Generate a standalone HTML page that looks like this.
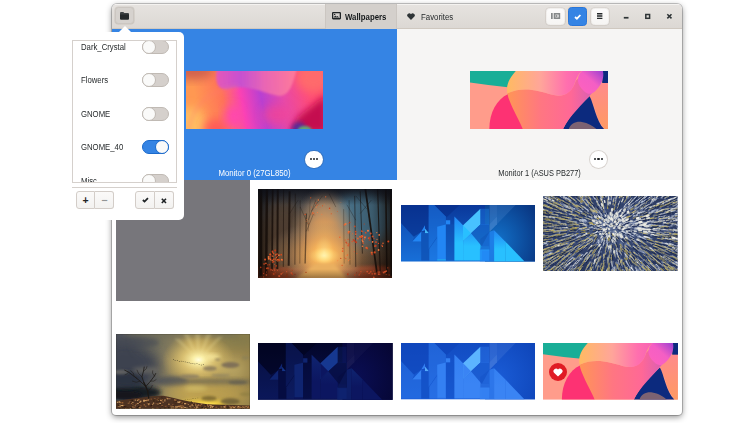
<!DOCTYPE html>
<html lang="en">
<head>
<meta charset="utf-8">
<title>Wallpapers</title>
<style>
*{box-sizing:border-box;margin:0;padding:0}
html,body{width:752px;height:423px;overflow:hidden;background:#fff;font-family:"Liberation Sans",sans-serif;color:#1f2325}
#win{position:absolute;left:112px;top:4px;width:570px;height:411px;border-radius:5px 5px 4px 4px;background:#fff;overflow:hidden;box-shadow:0 0 0 1px rgba(0,0,0,.2),0 2px 6px rgba(0,0,0,.45)}
#hdr{position:absolute;left:0;top:0;width:570px;height:25px;background:linear-gradient(#e6e3e0,#dcd8d4);border-bottom:1px solid #cfc8c0;box-shadow:inset 0 1px #f4f2f0}
.hb{position:absolute;top:3px;height:18px;border:1px solid #f1efed;border-radius:3.5px;background:linear-gradient(#fcfbfb,#f6f5f3);box-shadow:0 0 0 .6px rgba(80,60,40,.13)}
.tab{position:absolute;top:0;height:25px;font-size:8.5px;line-height:26px;white-space:nowrap}
.tab span{display:inline-block;transform:scaleX(.92);transform-origin:0 50%}
#paneL{position:absolute;left:0;top:25px;width:285px;height:151px;background:#3584e4}
#paneR{position:absolute;left:285px;top:25px;width:285px;height:151px;background:#f6f5f4}
.mon{position:absolute;top:42px;width:138px;height:58px}
.dots{position:absolute;top:122px;width:17.4px;height:17.4px;border-radius:8.7px;background:#fff;box-shadow:0 0 0 1px rgba(60,40,20,.16)}
.dots i{position:absolute;top:7.6px;width:2.2px;height:2.2px;border-radius:1.1px;background:#1e2224}
.mlab{position:absolute;top:138px;width:285px;left:0;text-align:center;font-size:8.5px;line-height:12px;white-space:nowrap}
.th{position:absolute;display:block}
.heart{position:absolute;width:18px;height:18px;border-radius:9px;background:#e01b24}
.heart svg{position:absolute;left:4px;top:5px}
#pop{position:absolute;left:64px;top:32px;width:120px;height:188px;background:#fff;border-radius:5px}
#list{position:absolute;left:8px;top:7.7px;width:105px;height:143.8px;border:1px solid #d5d0cc;overflow:hidden;background:#fff}
.row{position:absolute;left:0;width:104px;height:14px;font-size:8.4px;line-height:14px}
.row span{position:absolute;left:8px;top:0;white-space:nowrap;display:inline-block;transform:scaleX(.925);transform-origin:0 50%}
.sw{position:absolute;left:69px;top:0;width:27px;height:14px;border-radius:7px;background:#d5d0cc;border:1px solid #c0bab4}
.sw b{position:absolute;left:-1px;top:-1px;width:14px;height:14px;border-radius:7px;background:#fafaf9;border:1px solid #c0bab4}
.sw.on{background:#3584e4;border-color:#1b6acb}
.sw.on b{left:12px;border-color:#1b6acb}
.pb{position:absolute;top:159px;height:18px;width:19px;border:1px solid #d3cdc8;background:linear-gradient(#fbfaf9,#f3f2f0);font-size:10.5px;font-weight:bold;text-align:center;line-height:16px}
</style>
</head>
<body>

<div id="win">
  <div id="grid">
<div class="th" style="left:3.799999999999997px;top:162.5px;width:134.2px;height:134px;background:#77767b"></div>
<svg class="th" viewBox="0 0 134.1 88.9" preserveAspectRatio="none" width="134.1" height="88.9" style="left:146.3px;top:185.1px">
<defs>
<linearGradient id="fbg" x1="0" x2="0" y1="0" y2="1"><stop offset="0" stop-color="#2a2e38"/><stop offset=".3" stop-color="#4c5056"/><stop offset=".7" stop-color="#5a4634"/><stop offset="1" stop-color="#40200f"/></linearGradient>
<radialGradient id="fgl" cx=".5" cy=".5" r=".5"><stop offset="0" stop-color="#fff6b8"/><stop offset=".08" stop-color="#ffe690"/><stop offset=".16" stop-color="#ffd070"/><stop offset=".25" stop-color="#f6b25a" stop-opacity=".97"/><stop offset=".5" stop-color="#d89a5c" stop-opacity=".85"/><stop offset=".8" stop-color="#b08c68" stop-opacity=".45"/><stop offset="1" stop-color="#908070" stop-opacity="0"/></radialGradient>
<linearGradient id="fvl" x1="0" x2="1" y1="0" y2="0"><stop offset="0" stop-color="#0c0806" stop-opacity=".7"/><stop offset=".12" stop-color="#0c0806" stop-opacity=".2"/><stop offset=".4" stop-color="#0c0806" stop-opacity="0"/><stop offset=".62" stop-color="#0c0806" stop-opacity="0"/><stop offset=".85" stop-color="#0c0806" stop-opacity=".25"/><stop offset="1" stop-color="#0c0806" stop-opacity=".75"/></linearGradient>
<linearGradient id="fvt" x1="0" x2="0" y1="0" y2="1"><stop offset="0" stop-color="#0a0c14" stop-opacity=".75"/><stop offset=".18" stop-color="#0a0c14" stop-opacity="0"/><stop offset=".9" stop-color="#140a06" stop-opacity="0"/><stop offset="1" stop-color="#140a06" stop-opacity=".35"/></linearGradient>
<filter id="fb1" x="-40%" y="-40%" width="180%" height="180%"><feGaussianBlur stdDeviation="6"/></filter>
<filter id="fb2" x="-40%" y="-40%" width="180%" height="180%"><feGaussianBlur stdDeviation="1.6"/></filter>
<filter id="fb3"><feGaussianBlur stdDeviation=".35"/></filter>
<clipPath id="fc"><rect width="134.1" height="88.9"/></clipPath>
</defs>
<g clip-path="url(#fc)">
<rect width="134.1" height="88.9" fill="url(#fbg)"/>
<ellipse cx="104.4" cy="29.0" rx="30" ry="28" fill="#4c7790" filter="url(#fb1)"/>
<ellipse cx="35.6" cy="22.3" rx="22" ry="22" fill="#4a4a4c" opacity=".7" filter="url(#fb1)"/>
<ellipse cx="24.4" cy="49.0" rx="26" ry="36" fill="#5c4430" opacity=".75" filter="url(#fb1)"/>
<ellipse cx="66.2" cy="29.0" rx="13" ry="24" fill="#c8a27a" opacity=".55" filter="url(#fb1)"/>
<ellipse cx="17.8" cy="86.8" rx="40" ry="9" fill="#9a3a1c" filter="url(#fb2)"/>
<ellipse cx="113.3" cy="86.8" rx="40" ry="10" fill="#a84020" filter="url(#fb2)"/>
<ellipse cx="66.2" cy="63.4" rx="38" ry="66" fill="url(#fgl)"/>
<ellipse cx="66.2" cy="66.8" rx="62" ry="34" fill="url(#fgl)" opacity=".6"/>
<path d="M57.8 74.6L75.6 74.6L88.9 89.4L37.8 89.4Z" fill="#eab060" opacity="1" filter="url(#fb2)"/>
<line x1="2.7" y1="-2.1" x2="2.7" y2="86.8" stroke="#1c120c" stroke-width="3.11" stroke-opacity="0.9"/>
<line x1="8.9" y1="-2.1" x2="8.2" y2="84.6" stroke="#1c120c" stroke-width="2.44" stroke-opacity="0.85"/>
<line x1="14.7" y1="-2.1" x2="14.0" y2="82.3" stroke="#1c120c" stroke-width="1.78" stroke-opacity="0.85"/>
<line x1="19.8" y1="-2.1" x2="19.3" y2="80.1" stroke="#1c120c" stroke-width="2.00" stroke-opacity="0.85"/>
<line x1="25.6" y1="0.1" x2="25.3" y2="77.9" stroke="#1c120c" stroke-width="0.89" stroke-opacity="0.65"/>
<line x1="31.6" y1="2.3" x2="30.7" y2="76.8" stroke="#1c120c" stroke-width="2.00" stroke-opacity="0.8"/>
<line x1="37.3" y1="4.6" x2="36.9" y2="75.7" stroke="#1c120c" stroke-width="0.89" stroke-opacity="0.6"/>
<line x1="42.2" y1="11.2" x2="41.8" y2="74.6" stroke="#1c120c" stroke-width="0.67" stroke-opacity="0.5"/>
<line x1="48.4" y1="24.6" x2="47.1" y2="74.6" stroke="#1c120c" stroke-width="1.33" stroke-opacity="0.55"/>
<line x1="52.2" y1="11.2" x2="50.2" y2="42.3" stroke="#1c120c" stroke-width="0.44" stroke-opacity="0.5"/>
<line x1="85.6" y1="20.1" x2="86.2" y2="74.6" stroke="#1c120c" stroke-width="0.67" stroke-opacity="0.4"/>
<line x1="91.1" y1="11.2" x2="92.0" y2="75.7" stroke="#1c120c" stroke-width="0.67" stroke-opacity="0.55"/>
<line x1="96.7" y1="6.8" x2="97.8" y2="77.9" stroke="#1c120c" stroke-width="0.89" stroke-opacity="0.65"/>
<line x1="102.2" y1="2.3" x2="104.4" y2="64.6" stroke="#1c120c" stroke-width="0.89" stroke-opacity="0.7"/>
<line x1="107.1" y1="-2.1" x2="118.9" y2="83.4" stroke="#1c120c" stroke-width="1.78" stroke-opacity="0.9"/>
<line x1="119.6" y1="-2.1" x2="122.2" y2="82.3" stroke="#1c120c" stroke-width="1.11" stroke-opacity="0.8"/>
<line x1="127.8" y1="-2.1" x2="128.9" y2="84.6" stroke="#1c120c" stroke-width="1.56" stroke-opacity="0.85"/>
<line x1="132.9" y1="-2.1" x2="133.3" y2="86.8" stroke="#1c120c" stroke-width="1.78" stroke-opacity="0.9"/>
<line x1="50.2" y1="31.2" x2="57.8" y2="11.2" stroke="#18120e" stroke-width=".5" stroke-opacity=".6"/>
<line x1="50.2" y1="35.7" x2="42.2" y2="17.9" stroke="#18120e" stroke-width=".5" stroke-opacity=".6"/>
<line x1="48.4" y1="42.3" x2="55.6" y2="24.6" stroke="#18120e" stroke-width=".5" stroke-opacity=".6"/>
<line x1="64.4" y1="6.8" x2="53.3" y2="22.3" stroke="#18120e" stroke-width=".5" stroke-opacity=".6"/>
<line x1="71.1" y1="4.6" x2="77.8" y2="17.9" stroke="#18120e" stroke-width=".5" stroke-opacity=".6"/>
<line x1="97.8" y1="31.2" x2="88.9" y2="15.7" stroke="#18120e" stroke-width=".5" stroke-opacity=".6"/>
<line x1="102.2" y1="24.6" x2="113.3" y2="11.2" stroke="#18120e" stroke-width=".5" stroke-opacity=".6"/>
<line x1="108.9" y1="20.1" x2="97.8" y2="6.8" stroke="#18120e" stroke-width=".5" stroke-opacity=".6"/>
<line x1="31.6" y1="24.6" x2="40.0" y2="11.2" stroke="#18120e" stroke-width=".5" stroke-opacity=".6"/>
<rect width="134.1" height="88.9" fill="url(#fvl)"/>
<rect width="134.1" height="88.9" fill="url(#fvt)"/>
<g filter="url(#fb3)">
<circle cx="15.4" cy="70.4" r="0.89" fill="#e2491c" fill-opacity="0.9"/>
<circle cx="17.6" cy="65.9" r="0.85" fill="#d8522a" fill-opacity="0.9"/>
<circle cx="17.1" cy="69.9" r="0.75" fill="#f0602a" fill-opacity="0.9"/>
<circle cx="21.0" cy="70.7" r="1.00" fill="#e2491c" fill-opacity="0.9"/>
<circle cx="23.2" cy="65.7" r="0.85" fill="#e2491c" fill-opacity="0.9"/>
<circle cx="12.3" cy="65.6" r="1.09" fill="#e2491c" fill-opacity="0.9"/>
<circle cx="14.2" cy="67.0" r="0.75" fill="#d8522a" fill-opacity="0.9"/>
<circle cx="19.8" cy="70.7" r="0.99" fill="#f0602a" fill-opacity="0.9"/>
<circle cx="21.7" cy="71.7" r="0.61" fill="#e2491c" fill-opacity="0.9"/>
<circle cx="15.0" cy="67.4" r="0.54" fill="#f0602a" fill-opacity="0.9"/>
<circle cx="10.6" cy="68.0" r="0.97" fill="#ff7a3a" fill-opacity="0.9"/>
<circle cx="12.1" cy="65.1" r="0.68" fill="#f0602a" fill-opacity="0.9"/>
<circle cx="15.5" cy="64.4" r="0.84" fill="#d8522a" fill-opacity="0.9"/>
<circle cx="12.2" cy="68.0" r="0.77" fill="#d8522a" fill-opacity="0.9"/>
<circle cx="19.1" cy="67.6" r="0.75" fill="#c93a18" fill-opacity="0.9"/>
<circle cx="19.9" cy="72.5" r="0.52" fill="#e2491c" fill-opacity="0.9"/>
<circle cx="17.2" cy="61.5" r="1.03" fill="#c93a18" fill-opacity="0.9"/>
<circle cx="14.2" cy="71.7" r="0.80" fill="#ff7a3a" fill-opacity="0.9"/>
<circle cx="18.6" cy="68.8" r="0.66" fill="#e2491c" fill-opacity="0.9"/>
<circle cx="23.7" cy="70.7" r="0.89" fill="#ff7a3a" fill-opacity="0.9"/>
<circle cx="15.6" cy="72.6" r="0.90" fill="#e2491c" fill-opacity="0.9"/>
<circle cx="20.9" cy="66.2" r="0.87" fill="#ff7a3a" fill-opacity="0.9"/>
<circle cx="24.5" cy="70.9" r="0.58" fill="#f0602a" fill-opacity="0.9"/>
<circle cx="7.9" cy="74.4" r="0.80" fill="#f0602a" fill-opacity="0.9"/>
<circle cx="10.8" cy="69.8" r="1.03" fill="#ff7a3a" fill-opacity="0.9"/>
<circle cx="19.3" cy="64.9" r="0.75" fill="#c93a18" fill-opacity="0.9"/>
<circle cx="14.7" cy="63.5" r="0.64" fill="#e2491c" fill-opacity="0.9"/>
<circle cx="18.3" cy="71.1" r="0.64" fill="#ff7a3a" fill-opacity="0.9"/>
<circle cx="18.2" cy="65.2" r="0.67" fill="#f0602a" fill-opacity="0.9"/>
<circle cx="12.6" cy="70.2" r="0.84" fill="#f0602a" fill-opacity="0.9"/>
<circle cx="14.5" cy="62.4" r="0.87" fill="#e2491c" fill-opacity="0.9"/>
<circle cx="7.1" cy="70.6" r="1.07" fill="#d8522a" fill-opacity="0.9"/>
<circle cx="12.8" cy="71.0" r="0.56" fill="#ff7a3a" fill-opacity="0.9"/>
<circle cx="18.4" cy="68.6" r="0.63" fill="#f0602a" fill-opacity="0.9"/>
<circle cx="16.9" cy="80.2" r="0.56" fill="#a8381a" fill-opacity="0.9"/>
<circle cx="-2.1" cy="76.4" r="0.87" fill="#a8381a" fill-opacity="0.9"/>
<circle cx="16.5" cy="75.3" r="0.59" fill="#c04420" fill-opacity="0.9"/>
<circle cx="18.4" cy="76.9" r="0.78" fill="#a8381a" fill-opacity="0.9"/>
<circle cx="21.3" cy="71.0" r="0.78" fill="#c04420" fill-opacity="0.9"/>
<circle cx="9.9" cy="79.3" r="0.95" fill="#c04420" fill-opacity="0.9"/>
<circle cx="2.7" cy="78.4" r="0.81" fill="#a8381a" fill-opacity="0.9"/>
<circle cx="17.6" cy="76.9" r="0.59" fill="#a8381a" fill-opacity="0.9"/>
<circle cx="11.4" cy="75.6" r="0.89" fill="#a8381a" fill-opacity="0.9"/>
<circle cx="9.7" cy="75.9" r="0.72" fill="#a8381a" fill-opacity="0.9"/>
<circle cx="8.7" cy="79.4" r="0.82" fill="#c04420" fill-opacity="0.9"/>
<circle cx="6.1" cy="75.1" r="0.97" fill="#a8381a" fill-opacity="0.9"/>
<circle cx="14.7" cy="73.3" r="0.94" fill="#a8381a" fill-opacity="0.9"/>
<circle cx="13.1" cy="80.8" r="0.94" fill="#a8381a" fill-opacity="0.9"/>
<circle cx="104.7" cy="42.7" r="0.62" fill="#d8522a" fill-opacity="0.9"/>
<circle cx="111.5" cy="48.9" r="1.06" fill="#c93a18" fill-opacity="0.9"/>
<circle cx="110.4" cy="49.2" r="0.63" fill="#f0602a" fill-opacity="0.9"/>
<circle cx="94.3" cy="52.5" r="0.79" fill="#d8522a" fill-opacity="0.9"/>
<circle cx="107.7" cy="43.7" r="0.89" fill="#e2491c" fill-opacity="0.9"/>
<circle cx="104.5" cy="47.8" r="0.73" fill="#f0602a" fill-opacity="0.9"/>
<circle cx="96.7" cy="51.9" r="0.97" fill="#c93a18" fill-opacity="0.9"/>
<circle cx="120.6" cy="61.0" r="0.93" fill="#ff7a3a" fill-opacity="0.9"/>
<circle cx="84.7" cy="62.2" r="0.93" fill="#f0602a" fill-opacity="0.9"/>
<circle cx="104.3" cy="51.1" r="0.85" fill="#ff7a3a" fill-opacity="0.9"/>
<circle cx="104.0" cy="47.1" r="1.00" fill="#ff7a3a" fill-opacity="0.9"/>
<circle cx="97.7" cy="45.2" r="0.83" fill="#f0602a" fill-opacity="0.9"/>
<circle cx="118.0" cy="53.1" r="0.94" fill="#e2491c" fill-opacity="0.9"/>
<circle cx="81.8" cy="48.2" r="0.76" fill="#f0602a" fill-opacity="0.9"/>
<circle cx="105.0" cy="46.5" r="0.65" fill="#c93a18" fill-opacity="0.9"/>
<circle cx="87.1" cy="51.1" r="0.70" fill="#d8522a" fill-opacity="0.9"/>
<circle cx="98.1" cy="53.2" r="1.05" fill="#c93a18" fill-opacity="0.9"/>
<circle cx="112.7" cy="44.4" r="0.99" fill="#d8522a" fill-opacity="0.9"/>
<circle cx="84.8" cy="59.5" r="0.80" fill="#d8522a" fill-opacity="0.9"/>
<circle cx="108.4" cy="58.8" r="1.02" fill="#f0602a" fill-opacity="0.9"/>
<circle cx="90.3" cy="42.7" r="0.59" fill="#f0602a" fill-opacity="0.9"/>
<circle cx="88.1" cy="53.3" r="0.83" fill="#c93a18" fill-opacity="0.9"/>
<circle cx="97.7" cy="42.5" r="0.79" fill="#e2491c" fill-opacity="0.9"/>
<circle cx="104.5" cy="49.4" r="0.61" fill="#e2491c" fill-opacity="0.9"/>
<circle cx="103.7" cy="42.1" r="0.84" fill="#e2491c" fill-opacity="0.9"/>
<circle cx="90.8" cy="55.0" r="0.80" fill="#d8522a" fill-opacity="0.9"/>
<circle cx="104.5" cy="57.2" r="0.80" fill="#ff7a3a" fill-opacity="0.9"/>
<circle cx="95.5" cy="50.9" r="0.81" fill="#c93a18" fill-opacity="0.9"/>
<circle cx="118.8" cy="43.6" r="0.62" fill="#ff7a3a" fill-opacity="0.9"/>
<circle cx="105.2" cy="54.2" r="0.77" fill="#e2491c" fill-opacity="0.9"/>
<circle cx="97.8" cy="44.0" r="0.63" fill="#c93a18" fill-opacity="0.9"/>
<circle cx="106.2" cy="35.0" r="0.59" fill="#c93a18" fill-opacity="0.9"/>
<circle cx="113.7" cy="63.8" r="1.08" fill="#f0602a" fill-opacity="0.9"/>
<circle cx="102.1" cy="47.8" r="1.03" fill="#f0602a" fill-opacity="0.9"/>
<circle cx="119.0" cy="50.3" r="0.60" fill="#ff7a3a" fill-opacity="0.9"/>
<circle cx="111.3" cy="50.9" r="0.75" fill="#c93a18" fill-opacity="0.9"/>
<circle cx="96.3" cy="62.5" r="0.51" fill="#d8522a" fill-opacity="0.9"/>
<circle cx="88.8" cy="54.3" r="0.73" fill="#d8522a" fill-opacity="0.9"/>
<circle cx="94.6" cy="44.7" r="0.54" fill="#f0602a" fill-opacity="0.9"/>
<circle cx="106.3" cy="50.6" r="0.66" fill="#e2491c" fill-opacity="0.9"/>
<circle cx="106.9" cy="48.5" r="0.95" fill="#ff7a3a" fill-opacity="0.9"/>
<circle cx="110.0" cy="41.8" r="1.07" fill="#ff7a3a" fill-opacity="0.9"/>
<circle cx="114.0" cy="65.3" r="0.84" fill="#c93a18" fill-opacity="0.9"/>
<circle cx="104.8" cy="52.6" r="0.91" fill="#ff7a3a" fill-opacity="0.9"/>
<circle cx="107.8" cy="47.5" r="0.51" fill="#e2491c" fill-opacity="0.9"/>
<circle cx="103.4" cy="48.1" r="1.01" fill="#e2491c" fill-opacity="0.9"/>
<circle cx="117.6" cy="56.3" r="0.51" fill="#d8522a" fill-opacity="0.9"/>
<circle cx="109.2" cy="59.5" r="0.87" fill="#e2491c" fill-opacity="0.9"/>
<circle cx="114.5" cy="52.8" r="0.57" fill="#f0602a" fill-opacity="0.9"/>
<circle cx="117.6" cy="56.9" r="1.06" fill="#c93a18" fill-opacity="0.9"/>
<circle cx="114.8" cy="52.7" r="0.77" fill="#f0602a" fill-opacity="0.9"/>
<circle cx="116.7" cy="63.4" r="1.10" fill="#e2491c" fill-opacity="0.9"/>
<circle cx="125.0" cy="54.3" r="0.83" fill="#f0602a" fill-opacity="0.9"/>
<circle cx="114.5" cy="53.1" r="0.77" fill="#ff7a3a" fill-opacity="0.9"/>
<circle cx="114.7" cy="47.6" r="1.03" fill="#d8522a" fill-opacity="0.9"/>
<circle cx="116.7" cy="57.1" r="0.64" fill="#f0602a" fill-opacity="0.9"/>
<circle cx="121.2" cy="45.9" r="0.88" fill="#ff7a3a" fill-opacity="0.9"/>
<circle cx="130.3" cy="52.4" r="1.00" fill="#e2491c" fill-opacity="0.9"/>
<circle cx="124.4" cy="57.4" r="0.65" fill="#f0602a" fill-opacity="0.9"/>
<circle cx="124.0" cy="56.2" r="0.73" fill="#d8522a" fill-opacity="0.9"/>
<circle cx="116.0" cy="49.5" r="0.65" fill="#c93a18" fill-opacity="0.9"/>
<circle cx="120.5" cy="54.4" r="0.66" fill="#e2491c" fill-opacity="0.9"/>
<circle cx="90.3" cy="56.5" r="1.08" fill="#d8522a" fill-opacity="0.8"/>
<circle cx="90.6" cy="43.7" r="1.03" fill="#f0602a" fill-opacity="0.8"/>
<circle cx="91.0" cy="42.5" r="0.73" fill="#ff7a3a" fill-opacity="0.8"/>
<circle cx="90.1" cy="50.3" r="0.65" fill="#e2491c" fill-opacity="0.8"/>
<circle cx="97.3" cy="47.9" r="0.59" fill="#d8522a" fill-opacity="0.8"/>
<circle cx="91.9" cy="42.6" r="0.68" fill="#f0602a" fill-opacity="0.8"/>
<circle cx="99.8" cy="49.4" r="1.01" fill="#f0602a" fill-opacity="0.8"/>
<circle cx="87.6" cy="35.0" r="1.03" fill="#ff7a3a" fill-opacity="0.8"/>
<circle cx="91.7" cy="33.5" r="0.80" fill="#c93a18" fill-opacity="0.8"/>
<circle cx="90.2" cy="34.5" r="0.53" fill="#d8522a" fill-opacity="0.8"/>
<circle cx="86.6" cy="35.8" r="0.99" fill="#f0602a" fill-opacity="0.8"/>
<circle cx="96.8" cy="37.4" r="0.84" fill="#e2491c" fill-opacity="0.8"/>
<circle cx="67.7" cy="7.8" r="0.66" fill="#f0602a" fill-opacity="0.85"/>
<circle cx="64.5" cy="16.7" r="0.57" fill="#e2491c" fill-opacity="0.85"/>
<circle cx="55.3" cy="20.8" r="0.37" fill="#e2491c" fill-opacity="0.85"/>
<circle cx="52.8" cy="8.5" r="0.52" fill="#e2491c" fill-opacity="0.85"/>
<circle cx="59.0" cy="16.3" r="0.68" fill="#d8522a" fill-opacity="0.85"/>
<circle cx="71.3" cy="20.1" r="0.61" fill="#ff7a3a" fill-opacity="0.85"/>
<circle cx="62.2" cy="18.3" r="0.44" fill="#f0602a" fill-opacity="0.85"/>
<circle cx="63.8" cy="25.3" r="0.51" fill="#ff7a3a" fill-opacity="0.85"/>
<circle cx="79.5" cy="22.5" r="0.45" fill="#e2491c" fill-opacity="0.85"/>
<circle cx="52.8" cy="9.3" r="0.38" fill="#f0602a" fill-opacity="0.85"/>
<circle cx="55.9" cy="24.1" r="0.59" fill="#d8522a" fill-opacity="0.85"/>
<circle cx="60.9" cy="15.2" r="0.37" fill="#c93a18" fill-opacity="0.85"/>
<circle cx="66.2" cy="15.1" r="0.43" fill="#ff7a3a" fill-opacity="0.85"/>
<circle cx="59.5" cy="23.4" r="0.51" fill="#ff7a3a" fill-opacity="0.85"/>
<circle cx="65.3" cy="-5.3" r="0.54" fill="#c93a18" fill-opacity="0.85"/>
<circle cx="82.9" cy="13.5" r="0.36" fill="#ff7a3a" fill-opacity="0.85"/>
<circle cx="71.6" cy="19.3" r="0.70" fill="#c93a18" fill-opacity="0.85"/>
<circle cx="47.2" cy="25.4" r="0.68" fill="#e2491c" fill-opacity="0.85"/>
<circle cx="57.9" cy="13.9" r="0.53" fill="#c93a18" fill-opacity="0.85"/>
<circle cx="73.3" cy="24.8" r="0.53" fill="#e2491c" fill-opacity="0.85"/>
<circle cx="60.4" cy="11.0" r="0.66" fill="#ff7a3a" fill-opacity="0.85"/>
<circle cx="58.1" cy="18.1" r="0.68" fill="#ff7a3a" fill-opacity="0.85"/>
<circle cx="48.9" cy="30.8" r="0.50" fill="#ff7a3a" fill-opacity="0.85"/>
<circle cx="50.8" cy="34.6" r="0.35" fill="#c93a18" fill-opacity="0.85"/>
<circle cx="54.2" cy="24.9" r="0.67" fill="#e2491c" fill-opacity="0.85"/>
<circle cx="55.6" cy="24.6" r="0.48" fill="#ff7a3a" fill-opacity="0.85"/>
<circle cx="48.1" cy="32.5" r="0.38" fill="#ff7a3a" fill-opacity="0.85"/>
<circle cx="53.6" cy="18.1" r="0.45" fill="#e2491c" fill-opacity="0.85"/>
<circle cx="54.7" cy="23.6" r="0.68" fill="#f0602a" fill-opacity="0.85"/>
<circle cx="56.8" cy="25.9" r="0.46" fill="#c93a18" fill-opacity="0.85"/>
<circle cx="115.6" cy="81.2" r="0.51" fill="#8a2c14" fill-opacity="0.9"/>
<circle cx="96.8" cy="86.1" r="0.78" fill="#b03c1c" fill-opacity="0.9"/>
<circle cx="112.7" cy="82.7" r="0.87" fill="#d0502a" fill-opacity="0.9"/>
<circle cx="109.2" cy="82.6" r="0.93" fill="#d0502a" fill-opacity="0.9"/>
<circle cx="135.1" cy="85.0" r="0.56" fill="#d0502a" fill-opacity="0.9"/>
<circle cx="106.3" cy="84.4" r="0.63" fill="#8a2c14" fill-opacity="0.9"/>
<circle cx="121.0" cy="83.2" r="0.83" fill="#d0502a" fill-opacity="0.9"/>
<circle cx="98.5" cy="83.8" r="0.56" fill="#8a2c14" fill-opacity="0.9"/>
<circle cx="116.9" cy="84.7" r="0.95" fill="#d0502a" fill-opacity="0.9"/>
<circle cx="102.9" cy="82.7" r="0.67" fill="#d0502a" fill-opacity="0.9"/>
<circle cx="102.0" cy="84.7" r="0.62" fill="#b03c1c" fill-opacity="0.9"/>
<circle cx="110.9" cy="84.3" r="0.62" fill="#d0502a" fill-opacity="0.9"/>
<circle cx="115.8" cy="82.1" r="0.51" fill="#d0502a" fill-opacity="0.9"/>
<circle cx="101.1" cy="85.9" r="0.61" fill="#d0502a" fill-opacity="0.9"/>
<circle cx="111.4" cy="84.1" r="0.64" fill="#d0502a" fill-opacity="0.9"/>
<circle cx="121.7" cy="85.3" r="0.81" fill="#b03c1c" fill-opacity="0.9"/>
<circle cx="131.1" cy="86.0" r="0.69" fill="#8a2c14" fill-opacity="0.9"/>
<circle cx="89.9" cy="85.3" r="0.92" fill="#b03c1c" fill-opacity="0.9"/>
<circle cx="120.7" cy="85.1" r="0.88" fill="#d0502a" fill-opacity="0.9"/>
<circle cx="124.7" cy="82.9" r="0.54" fill="#8a2c14" fill-opacity="0.9"/>
<circle cx="129.8" cy="78.8" r="0.62" fill="#b03c1c" fill-opacity="0.9"/>
<circle cx="114.3" cy="84.7" r="0.99" fill="#b03c1c" fill-opacity="0.9"/>
<circle cx="128.3" cy="82.2" r="0.82" fill="#d0502a" fill-opacity="0.9"/>
<circle cx="128.2" cy="85.4" r="0.50" fill="#b03c1c" fill-opacity="0.9"/>
<circle cx="115.8" cy="88.4" r="0.82" fill="#d0502a" fill-opacity="0.9"/>
<circle cx="127.0" cy="82.7" r="0.76" fill="#d0502a" fill-opacity="0.9"/>
<circle cx="111.8" cy="82.4" r="0.54" fill="#8a2c14" fill-opacity="0.9"/>
<circle cx="119.5" cy="82.9" r="0.63" fill="#8a2c14" fill-opacity="0.9"/>
<circle cx="125.8" cy="83.5" r="1.00" fill="#d0502a" fill-opacity="0.9"/>
<circle cx="127.2" cy="82.6" r="0.94" fill="#d0502a" fill-opacity="0.9"/>
<circle cx="8.4" cy="83.0" r="0.51" fill="#c8502a" fill-opacity="0.9"/>
<circle cx="19.5" cy="81.6" r="0.51" fill="#c8502a" fill-opacity="0.9"/>
<circle cx="34.2" cy="81.3" r="0.54" fill="#a83a1c" fill-opacity="0.9"/>
<circle cx="9.7" cy="79.1" r="0.61" fill="#a83a1c" fill-opacity="0.9"/>
<circle cx="16.3" cy="80.1" r="0.68" fill="#c8502a" fill-opacity="0.9"/>
<circle cx="28.6" cy="87.2" r="0.87" fill="#7a2812" fill-opacity="0.9"/>
<circle cx="34.1" cy="84.5" r="0.60" fill="#a83a1c" fill-opacity="0.9"/>
<circle cx="23.2" cy="85.0" r="0.88" fill="#c8502a" fill-opacity="0.9"/>
<circle cx="34.3" cy="85.4" r="0.81" fill="#a83a1c" fill-opacity="0.9"/>
<circle cx="-2.1" cy="83.9" r="0.53" fill="#7a2812" fill-opacity="0.9"/>
<circle cx="29.0" cy="85.2" r="0.61" fill="#7a2812" fill-opacity="0.9"/>
<circle cx="24.5" cy="84.0" r="0.53" fill="#c8502a" fill-opacity="0.9"/>
<circle cx="5.6" cy="84.5" r="0.66" fill="#a83a1c" fill-opacity="0.9"/>
<circle cx="48.0" cy="83.4" r="0.66" fill="#a83a1c" fill-opacity="0.9"/>
<circle cx="14.4" cy="81.2" r="0.73" fill="#c8502a" fill-opacity="0.9"/>
<circle cx="16.7" cy="81.6" r="0.69" fill="#c8502a" fill-opacity="0.9"/>
<circle cx="17.2" cy="83.8" r="0.54" fill="#a83a1c" fill-opacity="0.9"/>
<circle cx="5.7" cy="87.9" r="0.56" fill="#a83a1c" fill-opacity="0.9"/>
<circle cx="8.4" cy="86.0" r="0.65" fill="#c8502a" fill-opacity="0.9"/>
<circle cx="37.0" cy="85.3" r="0.60" fill="#7a2812" fill-opacity="0.9"/>
<circle cx="28.6" cy="82.7" r="0.68" fill="#c8502a" fill-opacity="0.9"/>
<circle cx="33.4" cy="83.9" r="0.91" fill="#c8502a" fill-opacity="0.9"/>
<circle cx="25.1" cy="83.6" r="0.53" fill="#a83a1c" fill-opacity="0.9"/>
<circle cx="21.4" cy="87.1" r="0.95" fill="#c8502a" fill-opacity="0.9"/>
<circle cx="15.7" cy="85.0" r="0.98" fill="#a83a1c" fill-opacity="0.9"/>
<circle cx="20.9" cy="87.0" r="0.66" fill="#c8502a" fill-opacity="0.9"/>
<circle cx="84.1" cy="76.3" r="0.64" fill="#e2491c" fill-opacity="0.9"/>
<circle cx="90.7" cy="71.6" r="0.59" fill="#ff7a3a" fill-opacity="0.9"/>
<circle cx="91.9" cy="70.3" r="0.50" fill="#ff7a3a" fill-opacity="0.9"/>
<circle cx="87.8" cy="69.6" r="0.60" fill="#e2491c" fill-opacity="0.9"/>
<circle cx="89.6" cy="66.1" r="0.73" fill="#f0602a" fill-opacity="0.9"/>
<circle cx="82.8" cy="69.4" r="0.53" fill="#c93a18" fill-opacity="0.9"/>
<circle cx="88.2" cy="66.8" r="0.60" fill="#ff7a3a" fill-opacity="0.9"/>
<circle cx="86.7" cy="68.7" r="0.43" fill="#e2491c" fill-opacity="0.9"/>
<circle cx="79.7" cy="71.7" r="0.46" fill="#ff7a3a" fill-opacity="0.9"/>
<circle cx="98.9" cy="64.6" r="0.51" fill="#e2491c" fill-opacity="0.9"/>
</g>
</g></svg>
<svg class="th" viewBox="0 0 134.2 56.7" preserveAspectRatio="none" width="134.2" height="56.7" style="left:289px;top:201.1px">
<defs><linearGradient id="xbg" x1="0" x2="0" y1="0" y2="1"><stop offset="0" stop-color="#0a389a"/><stop offset="1" stop-color="#156ad2"/></linearGradient><radialGradient id="xr" cx=".25" cy=".62" r=".9"><stop offset="0" stop-color="#1270c8"/><stop offset="1" stop-color="#093682"/></radialGradient><linearGradient id="xcy" x1="0" x2="0" y1="0" y2="1"><stop offset="0" stop-color="#2286f4"/><stop offset=".6" stop-color="#28c0ff"/><stop offset="1" stop-color="#28c0ff"/></linearGradient><clipPath id="xc"><rect width="134.2" height="56.7"/></clipPath></defs>
<g clip-path="url(#xc)">
<rect width="134.2" height="56.7" fill="url(#xbg)"/>
<rect x="84" y="0" width="50.2" height="56.7" fill="url(#xr)"/>
<polygon points="0.0,-0.1 58.6,-0.1 45.6,12.3 33.3,-0.1 27.6,-0.1 27.6,26.8 20.3,26.8 12.4,31.8 0.0,18.1" fill="#072c86" fill-opacity="0.55"/>
<polygon points="0.0,18.1 13.1,31.8 11.3,36.6 20.3,36.6 20.3,55.6 0.0,55.6" fill="#2286f4" fill-opacity="0.2"/>
<polygon points="11.3,36.6 20.3,26.8 20.3,36.6" fill="#2286f4"/>
<polygon points="20.3,26.5 24.0,20.3 24.0,25.3" fill="#2286f4"/>
<polygon points="24.0,23.6 27.8,28.2 24.0,28.2" fill="#48c2ff" fill-opacity="0.9"/>
<polygon points="20.3,28.2 28.3,28.2 28.3,55.6 20.3,55.6" fill="#0f54b8" fill-opacity="0.9"/>
<polygon points="27.6,-0.1 33.3,-0.1 44.9,11.6 44.9,19.6 27.6,44.1" fill="#2286f4" fill-opacity="0.45"/>
<polygon points="28.3,44.1 36.2,32.5 36.2,55.6 28.3,55.6" fill="#2286f4" fill-opacity="0.5"/>
<polygon points="36.2,21.7 44.9,19.6 44.9,54.2 36.2,54.2" fill="#2286f4"/>
<polygon points="44.9,15.2 49.2,15.2 49.2,19.6 44.9,19.6" fill="#2286f4"/>
<polygon points="44.9,19.6 53.5,19.6 53.5,55.6 44.9,55.6" fill="#0f54b8" fill-opacity="0.55"/>
<polygon points="36.2,54.2 44.9,54.2 44.9,55.6 36.2,55.6" fill="#28c0ff" fill-opacity="0.8"/>
<polygon points="53.4,11.6 62.1,20.3 62.1,55.6 53.4,55.6" fill="url(#xcy)"/>
<polygon points="62.1,20.3 79.4,3.7 79.4,19.6 62.1,36.1" fill="#48c2ff"/>
<polygon points="62.1,20.3 70.0,28.2 62.1,36.1" fill="#28c0ff"/>
<polygon points="62.1,36.1 79.4,19.6 88.1,19.6 88.1,55.6 62.1,55.6" fill="url(#xcy)"/>
<polygon points="70.0,28.2 79.4,19.6 88.1,19.6 88.1,41.2 80.8,41.2" fill="#0f54b8" fill-opacity="0.8"/>
<polygon points="79.4,3.7 88.1,3.7 88.1,19.6 79.4,19.6" fill="#2286f4" fill-opacity="0.35"/>
<polygon points="80.8,45.5 88.1,45.5 88.1,55.6 80.8,55.6" fill="#2286f4" fill-opacity="0.7"/>
<polygon points="88.6,0.0 96.0,0.0 96.0,19.2 88.6,26.7" fill="#6aa0e0" fill-opacity="0.3"/>
<polygon points="96.0,0.0 114.7,0.0 88.6,26.7 88.6,19.2 96.0,11.8" fill="#6aa0e0" fill-opacity="0.2"/>
<polygon points="78.9,44.6 88.6,26.7 93.1,25.2 93.1,56.5 78.9,56.5" fill="#2286f4" fill-opacity="0.75"/>
<polygon points="79.4,34.1 88.6,26.7 88.6,44.6 79.4,44.6" fill="#0f54b8" fill-opacity="0.5"/>
<polygon points="93.1,25.2 104.2,36.4 104.2,56.5 93.1,56.5" fill="url(#xcy)"/>
<polygon points="104.2,36.4 123.6,56.5 104.2,56.5" fill="#28c0ff"/>
</g></svg>
<svg class="th" viewBox="0 0 134.6 75.9" preserveAspectRatio="none" width="134.6" height="75.9" style="left:431.29999999999995px;top:191.6px">
<defs><radialGradient id="abg" cx=".5" cy=".42" r=".7"><stop offset="0" stop-color="#56688f"/><stop offset=".4" stop-color="#33436c"/><stop offset="1" stop-color="#243258"/></radialGradient>
<clipPath id="ac"><rect width="134.6" height="75.9"/></clipPath><filter id="ab"><feGaussianBlur stdDeviation=".3"/></filter></defs>
<g clip-path="url(#ac)"><rect width="134.6" height="75.9" fill="url(#abg)"/><g filter="url(#ab)">
<path fill="#6a7aa0" fill-opacity=".9" d="M62.3 17.9L63.4 15.8L59.7 10.6L60.1 17.0ZM75.4 58.3L74.3 60.2L78.2 67.5L77.3 59.2ZM131.7 8.8L133.1 9.5L145.1 4.0L132.3 7.4ZM72.8 37.7L72.7 40.0L76.9 42.0L75.1 37.7ZM123.8 23.4L125.5 24.8L135.6 21.6L125.0 21.5ZM134.5 1.7L136.3 2.5L151.8 -6.0L135.1 -0.1ZM69.2 41.8L67.8 43.6L70.4 48.0L71.2 43.0ZM30.3 17.0L29.5 14.7L21.3 13.3L28.2 18.0ZM59.3 24.2L59.4 22.0L55.1 20.2L57.1 24.4ZM51.3 29.4L50.1 27.5L44.5 28.3L49.6 30.8ZM103.0 62.5L103.1 64.4L112.6 70.7L104.9 62.2ZM108.5 81.8L108.3 83.4L120.5 96.4L110.0 81.9ZM124.4 38.0L125.9 40.0L139.4 39.6L126.3 36.3ZM79.9 31.9L80.8 33.1L85.2 32.0L80.9 30.8ZM39.7 52.6L38.1 52.3L32.4 58.0L39.5 54.2ZM80.3 65.2L79.5 66.9L84.0 74.8L82.0 65.9ZM66.1 32.1L64.4 30.7L62.0 32.7L64.9 34.0ZM51.9 25.5L51.2 23.6L44.7 22.6L50.1 26.4ZM133.6 55.2L134.4 57.1L153.0 62.1L135.4 54.3ZM68.7 31.1L70.4 31.8L72.3 29.2L69.1 29.3ZM44.2 20.7L43.7 18.9L35.8 16.6L42.6 21.3ZM114.5 33.3L115.7 34.7L126.9 33.7L115.8 32.1ZM95.1 73.0L94.5 75.1L103.5 85.5L97.1 73.3ZM20.8 43.8L19.2 42.7L10.2 46.6L19.9 45.6ZM93.3 61.0L93.1 62.5L100.4 68.9L94.8 61.0ZM75.4 30.6L76.8 31.7L80.9 29.8L76.4 29.2ZM107.8 5.4L110.1 6.0L117.9 -1.3L108.1 3.0ZM100.0 63.0L99.9 64.6L110.1 72.7L101.6 62.9ZM85.6 40.4L86.2 42.1L92.8 43.8L87.3 39.7ZM38.7 -4.2L39.1 -6.6L29.3 -16.0L36.2 -4.3ZM77.7 29.0L79.1 29.9L83.6 27.4L78.4 27.5ZM69.4 31.4L71.4 32.8L74.0 30.3L70.6 29.2ZM-2.8 50.9L-4.4 49.9L-18.3 55.2L-3.7 52.6ZM134.6 42.6L135.9 44.6L150.4 45.1L136.5 41.2ZM83.2 3.5L85.6 3.0L88.8 -6.6L82.4 1.2ZM-0.5 12.3L-1.6 10.2L-17.7 7.4L-2.5 13.6ZM68.5 2.0L69.9 0.9L68.9 -8.1L67.2 0.8ZM8.0 62.2L6.0 61.4L-5.1 68.9L7.5 64.3ZM2.2 80.0L0.4 79.7L-10.4 89.3L2.0 81.8ZM-4.2 21.1L-5.1 19.8L-20.4 18.7L-5.4 22.2ZM51.2 28.1L50.0 26.0L43.6 26.3L49.2 29.5ZM68.9 79.1L67.7 80.4L69.4 93.5L70.3 80.3ZM45.8 3.3L46.3 0.9L39.7 -4.7L43.3 3.1ZM83.2 72.1L82.4 73.8L86.9 81.3L85.0 72.8ZM112.4 77.3L112.3 79.4L125.1 90.0L114.6 77.2ZM82.6 60.1L81.8 62.5L88.3 70.6L85.1 60.7ZM26.3 59.5L24.5 59.0L15.7 66.5L26.0 61.2ZM96.4 10.9L98.2 11.3L104.1 5.4L96.6 9.1ZM68.7 35.0L67.7 37.2L70.7 39.5L71.0 35.7ZM76.7 70.1L75.6 71.7L78.9 79.3L78.4 71.0ZM38.6 72.4L37.0 72.6L30.0 84.6L39.0 74.0ZM85.9 54.1L85.6 56.2L91.6 61.0L88.0 54.2ZM68.6 19.2L69.9 18.2L69.2 12.7L67.4 18.0ZM107.6 6.8L109.7 7.4L116.5 1.3L108.0 4.6ZM10.9 1.6L10.6 0.1L-5.2 -7.1L9.5 2.1ZM35.4 32.4L34.1 31.1L26.3 32.6L34.2 33.8ZM71.2 -3.8L72.5 -4.8L72.1 -12.6L70.1 -5.0ZM62.1 56.7L60.0 57.9L60.4 64.6L63.5 58.6ZM104.6 18.4L106.8 19.6L114.3 14.9L105.5 16.1ZM11.2 4.3L10.7 2.6L-2.7 -2.5L9.5 5.0ZM128.0 70.5L128.4 72.8L143.5 80.4L130.2 69.8ZM61.4 68.3L59.4 69.5L59.6 79.3L62.9 70.1ZM54.7 29.5L53.4 27.4L47.7 28.2L52.8 30.9ZM110.5 39.2L111.3 40.5L120.6 40.9L111.7 38.3ZM20.2 78.0L18.7 77.9L8.4 89.6L20.3 79.5ZM117.5 49.9L118.2 51.5L128.0 53.6L119.1 49.1ZM77.3 63.2L76.0 65.4L80.1 72.2L79.5 64.2ZM72.6 39.6L72.2 41.4L75.8 44.3L74.4 39.9ZM51.0 44.2L49.3 43.9L44.4 49.2L50.8 45.9ZM13.1 25.6L12.0 24.1L-2.1 23.8L11.7 26.7ZM27.9 25.0L26.8 23.3L16.4 23.0L26.3 26.3ZM71.6 35.7L71.6 38.2L75.4 39.0L74.1 35.4ZM111.6 67.9L111.7 69.8L122.3 76.6L113.4 67.6ZM115.7 71.8L115.8 74.3L129.1 82.8L118.1 71.4ZM118.5 8.6L120.5 9.4L131.6 2.7L119.2 6.5ZM123.2 69.6L123.5 71.8L138.6 80.1L125.3 69.1ZM15.6 -0.4L15.3 -2.4L4.6 -7.4L13.7 0.1ZM121.2 47.3L122.1 49.1L134.8 51.2L122.9 46.3ZM30.3 50.0L28.2 49.1L20.3 54.8L29.6 52.1ZM56.5 29.8L55.6 28.1L51.2 28.7L55.0 30.9ZM29.8 53.1L27.9 52.4L17.9 59.8L29.4 55.0ZM35.4 39.0L33.3 37.5L24.3 41.5L34.2 41.2ZM10.5 42.9L9.1 41.8L-3.9 45.7L9.6 44.3ZM-2.4 13.7L-3.4 11.9L-19.1 9.4L-4.2 14.9ZM48.2 65.1L46.2 65.5L42.6 74.8L48.9 67.1ZM116.0 61.7L116.4 63.4L126.6 68.1L117.8 61.2ZM75.7 -4.6L77.2 -5.5L78.1 -15.3L74.7 -6.1ZM22.2 7.0L21.6 4.6L11.8 1.2L19.8 7.8ZM65.9 10.6L67.2 9.3L65.5 3.8L64.5 9.5ZM52.5 3.9L53.0 2.4L48.6 -3.5L50.9 3.5ZM88.8 77.3L88.2 78.7L93.6 87.3L90.3 77.7ZM52.1 54.1L50.4 54.3L47.0 61.5L52.5 55.8ZM73.2 71.4L71.7 73.1L74.7 81.8L75.0 72.6ZM118.2 68.1L118.5 70.5L131.6 77.6L120.6 67.5ZM123.8 0.9L125.5 1.5L139.7 -7.8L124.2 -0.9ZM121.2 1.1L122.9 1.7L133.4 -5.8L121.6 -0.6ZM132.7 81.0L132.9 83.2L149.8 93.8L134.9 80.5ZM50.0 17.0L50.0 15.6L45.0 12.8L48.5 17.2ZM54.7 47.2L52.5 47.4L50.0 53.1L55.1 49.4ZM71.4 69.6L70.0 71.1L72.7 81.4L73.1 70.8ZM2.3 14.6L1.3 12.8L-14.5 10.2L0.6 15.8ZM112.4 31.8L113.9 33.5L125.1 31.8L113.9 30.1ZM29.5 -1.6L29.5 -3.9L18.5 -11.4L27.2 -1.3ZM16.2 55.5L14.4 54.7L1.4 62.4L15.6 57.4ZM89.1 37.3L89.9 38.9L96.5 39.1L90.6 36.2ZM123.6 34.2L125.0 35.8L139.6 34.8L125.1 32.6ZM122.0 40.0L122.9 41.4L133.4 41.6L123.3 38.8ZM113.8 72.0L113.9 74.1L125.5 82.1L115.9 71.8ZM24.5 16.6L23.9 15.1L11.4 11.9L23.1 17.3ZM119.8 70.2L120.0 72.2L130.9 78.3L121.8 69.8ZM18.2 13.4L17.5 11.6L3.7 7.9L16.5 14.2ZM82.2 69.8L81.5 71.2L85.8 78.9L83.7 70.3ZM107.1 61.7L107.3 64.1L118.6 70.3L109.4 61.2ZM78.6 36.2L79.4 38.4L85.1 38.6L80.7 35.1ZM61.5 -1.5L62.5 -2.7L59.6 -12.9L60.2 -2.3ZM127.4 20.9L128.9 22.1L140.9 18.5L128.4 19.3ZM65.1 30.4L64.9 28.9L62.0 28.2L63.7 30.7ZM-2.6 39.7L-4.2 38.2L-21.0 41.7L-3.9 41.5ZM59.2 -2.3L60.2 -3.8L57.0 -11.6L57.6 -3.2ZM123.8 7.8L125.7 8.6L136.3 2.5L124.5 5.8ZM17.8 59.4L15.8 58.8L3.6 67.3L17.3 61.4ZM137.6 -2.7L139.3 -2.0L156.7 -12.1L138.1 -4.5ZM137.7 53.8L138.7 56.0L153.9 58.8L139.7 52.6ZM95.1 7.0L96.6 7.2L104.3 -1.2L95.1 5.5ZM68.4 47.4L67.1 48.7L68.8 53.8L69.8 48.5ZM87.3 43.1L87.7 45.0L93.9 46.8L89.2 42.4ZM67.3 53.8L66.0 54.9L67.3 61.8L68.5 54.9ZM39.0 75.5L37.1 75.8L30.6 88.5L39.6 77.4ZM66.9 34.7L65.2 35.9L66.3 38.9L68.2 36.3ZM76.8 39.7L77.0 42.0L81.7 43.6L79.2 39.3ZM15.3 48.8L13.7 47.9L-0.6 54.0L14.6 50.5ZM61.2 24.7L61.5 22.2L57.5 20.4L58.6 24.6ZM33.5 61.8L31.1 61.5L22.9 71.2L33.5 64.2ZM5.0 -2.1L4.7 -3.6L-12.1 -11.5L3.6 -1.6ZM40.4 22.7L39.8 21.3L32.5 20.1L39.0 23.5Z"/>
<path fill="#62729a" fill-opacity=".9" d="M67.3 39.0L65.5 40.6L67.3 44.9L69.1 40.6ZM-3.8 61.5L-6.1 60.4L-18.3 67.5L-4.7 63.8ZM55.8 80.4L54.0 81.4L52.9 92.7L56.9 82.1ZM123.3 10.6L124.8 11.4L138.5 4.8L123.9 9.0ZM49.1 70.3L47.0 70.9L43.1 82.7L49.9 72.2ZM51.4 32.0L49.8 30.2L43.8 32.0L49.8 33.9ZM66.6 68.9L64.8 70.6L66.4 78.5L68.4 70.6ZM3.4 63.6L1.2 62.8L-10.6 70.6L2.7 65.9ZM69.3 29.2L71.2 29.1L71.8 26.0L69.0 27.4ZM48.6 79.9L46.2 80.8L43.9 91.9L49.7 82.2ZM89.3 28.2L90.8 29.4L96.3 27.1L90.3 26.7ZM58.4 13.1L59.0 11.7L55.0 5.9L56.9 12.7ZM121.2 53.0L121.7 54.5L137.1 59.2L122.6 52.2ZM41.7 65.6L39.3 65.8L33.3 76.7L42.1 67.9ZM136.2 48.3L137.2 50.1L154.7 52.7L137.9 47.2ZM40.6 57.9L38.7 57.8L33.5 64.8L40.7 59.8ZM137.0 67.8L137.6 69.9L155.1 77.1L139.0 67.0ZM117.1 15.5L119.2 16.7L130.4 11.1L118.1 13.3ZM4.3 4.9L3.7 3.1L-8.3 -0.4L2.6 5.7ZM26.5 32.1L25.0 30.5L16.5 32.1L25.0 33.7ZM96.3 13.6L97.8 14.0L105.5 7.8L96.5 12.1ZM70.7 7.4L72.4 6.2L71.7 -0.0L69.4 5.8ZM109.3 11.8L111.5 12.7L119.1 7.1L110.0 9.5ZM35.3 70.9L33.5 71.0L26.8 81.3L35.5 72.7ZM8.4 1.6L8.0 -0.1L-6.6 -6.1L6.7 2.3ZM80.5 12.5L82.3 12.3L85.8 4.9L80.1 10.8ZM19.0 -4.3L18.9 -6.3L7.8 -12.7L17.0 -3.9ZM127.4 59.5L128.0 61.4L144.0 67.1L129.3 58.7ZM127.3 -0.0L128.8 0.5L142.4 -8.0L127.7 -1.6ZM106.9 7.8L108.4 8.3L116.4 2.0L107.2 6.3ZM17.9 69.6L16.3 69.3L5.6 79.0L17.8 71.3ZM33.4 20.7L32.8 19.3L22.6 17.1L32.1 21.5ZM121.3 17.8L123.3 19.1L133.0 14.7L122.4 15.6ZM62.2 36.7L60.6 36.5L58.5 40.2L62.2 38.3ZM130.9 20.8L132.1 21.8L146.4 18.1L131.7 19.5ZM112.7 2.3L114.6 2.8L124.3 -5.4L113.0 0.3ZM58.5 18.7L58.9 17.0L54.9 13.2L56.8 18.4ZM56.0 74.4L54.5 75.2L53.2 85.0L57.0 75.9ZM54.4 43.2L52.6 42.9L49.5 47.4L54.3 45.0ZM57.2 43.2L55.2 43.3L53.0 48.0L57.5 45.3ZM2.2 57.6L0.7 56.8L-16.1 64.8L1.6 59.1ZM3.9 62.2L1.5 61.2L-14.9 71.1L3.2 64.6ZM54.4 34.1L52.9 32.9L48.1 35.1L53.4 35.6ZM94.5 2.2L96.3 2.3L103.2 -7.3L94.3 0.5ZM103.4 63.5L103.4 66.0L114.7 73.4L105.9 63.2ZM58.1 44.3L55.6 44.6L53.4 50.7L58.6 46.8ZM122.7 28.1L123.8 29.2L137.8 27.1L123.7 26.9ZM59.9 20.1L60.3 18.5L56.9 15.4L58.3 19.8ZM89.5 38.4L90.2 39.8L97.4 40.6L90.9 37.5ZM124.4 54.5L125.0 56.1L138.8 60.3L125.8 53.8ZM60.7 43.2L58.7 43.6L57.8 48.1L61.3 45.1ZM6.7 39.6L5.5 38.5L-6.5 41.2L5.8 40.9ZM104.2 -0.3L106.4 -0.0L113.6 -8.5L104.2 -2.6ZM23.3 67.4L21.2 67.0L10.2 77.9L23.2 69.4ZM50.2 0.6L50.8 -1.1L45.2 -8.6L48.5 0.2ZM131.4 68.5L131.9 70.6L149.3 78.7L133.5 67.8ZM8.0 35.7L6.8 34.5L-8.7 36.8L6.9 37.0ZM47.4 -3.8L48.1 -6.1L42.4 -12.7L45.0 -4.3ZM72.6 0.8L74.3 -0.4L74.4 -10.0L71.3 -0.9ZM24.8 78.1L23.2 78.1L12.8 91.2L25.0 79.7ZM137.2 9.7L139.1 10.9L157.5 3.3L138.1 7.6ZM64.7 20.8L65.6 19.5L63.5 15.6L63.3 20.1ZM124.1 64.1L124.5 66.2L137.8 72.0L126.1 63.5ZM-0.0 4.4L-0.8 2.4L-19.1 -3.4L-2.0 5.4ZM50.2 71.3L47.8 72.1L46.0 81.1L51.2 73.6ZM134.5 73.6L134.8 75.7L149.8 83.1L136.5 73.0ZM123.0 -2.5L125.0 -1.9L137.8 -11.5L123.4 -4.5ZM117.2 2.4L119.1 3.0L132.1 -6.3L117.6 0.5ZM74.5 66.7L73.1 68.6L76.4 76.4L76.5 67.9ZM62.2 24.7L62.6 23.0L59.2 20.3L60.6 24.5ZM63.1 27.1L63.3 25.0L59.5 23.1L60.9 27.1ZM100.0 33.5L101.1 34.8L108.4 33.9L101.2 32.2ZM77.1 42.6L76.9 44.6L81.9 47.9L79.2 42.6ZM94.5 -3.4L95.9 -3.5L100.5 -11.2L94.2 -4.9ZM120.8 3.2L122.4 3.7L133.2 -3.5L121.2 1.6ZM108.8 34.7L109.9 36.1L119.3 35.4L110.1 33.5ZM53.5 -1.8L54.2 -3.2L50.0 -10.3L52.0 -2.3ZM84.7 38.2L85.7 40.6L92.8 41.2L87.0 37.0ZM80.8 42.9L80.9 44.5L86.4 47.4L82.4 42.6ZM31.4 47.5L29.5 46.6L19.6 52.6L30.7 49.5ZM91.9 70.2L91.4 71.9L99.0 81.2L93.7 70.5ZM61.4 75.1L59.9 76.1L59.7 87.4L62.5 76.4ZM32.9 57.3L31.4 57.0L21.9 65.4L32.7 58.8ZM109.5 20.6L111.3 21.8L120.2 17.8L110.5 18.8ZM-2.2 42.5L-3.8 41.2L-15.9 44.6L-3.4 44.3ZM40.9 40.4L39.5 39.6L32.5 43.1L40.2 41.9ZM10.9 28.4L10.0 27.2L-1.5 27.6L9.9 29.4ZM56.9 24.0L56.7 21.7L51.4 19.8L54.6 24.4ZM57.5 33.1L56.2 31.9L52.1 33.7L56.5 34.5ZM46.7 47.1L44.9 46.7L39.8 52.2L46.5 48.9ZM139.1 4.1L141.1 5.1L154.2 -1.8L139.9 1.9ZM60.0 2.7L61.2 0.8L57.4 -7.7L58.0 1.6ZM75.0 76.5L73.9 77.8L77.4 90.3L76.5 77.4ZM25.3 78.3L23.6 78.3L15.6 89.1L25.5 80.0ZM76.2 31.3L77.4 32.5L81.5 31.0L77.3 30.0ZM33.1 52.6L31.4 52.1L22.8 58.8L32.8 54.4ZM61.4 14.1L62.6 12.1L59.1 7.1L59.3 13.2ZM56.9 22.6L56.9 20.4L52.0 18.2L54.7 22.8ZM65.9 39.6L63.9 40.9L64.9 45.0L67.3 41.5ZM115.7 12.1L117.7 13.1L129.9 6.3L116.4 10.1ZM29.0 -1.2L28.9 -3.3L19.7 -9.2L26.9 -0.9ZM108.4 58.0L108.7 59.7L120.0 65.4L110.1 57.6ZM122.9 39.0L123.9 40.5L139.0 41.1L124.2 37.9ZM80.3 38.7L80.7 40.4L85.4 41.3L82.0 38.0ZM62.8 34.3L61.1 33.7L58.9 36.4L62.4 36.0ZM32.5 5.2L32.4 3.5L21.7 -3.1L30.8 5.5ZM3.9 71.9L1.9 71.3L-10.8 81.1L3.5 73.9ZM76.8 46.2L76.2 48.7L80.5 51.7L79.3 46.6ZM97.4 8.1L99.8 8.5L105.8 1.4L97.6 5.7ZM63.1 33.0L61.9 32.1L59.2 34.0L62.5 34.3ZM0.1 69.9L-1.8 69.3L-13.5 77.5L-0.4 71.8ZM66.0 5.1L67.4 3.7L65.6 -3.5L64.4 3.9ZM-0.6 1.9L-1.4 -0.5L-18.7 -6.1L-2.9 2.9ZM81.4 60.4L80.7 62.2L85.4 68.4L83.3 60.9ZM52.9 18.0L53.0 15.5L46.5 11.8L50.4 18.2ZM76.9 79.7L75.5 81.5L79.2 91.5L78.7 80.9ZM34.4 66.2L32.7 66.1L24.3 76.7L34.5 67.9ZM138.8 57.5L139.5 59.3L158.0 64.4L140.5 56.6ZM117.3 31.2L118.5 32.4L128.7 31.0L118.4 29.8ZM91.6 25.1L93.2 26.1L99.7 22.8L92.5 23.4ZM39.4 4.3L39.5 1.8L30.5 -4.4L36.9 4.5ZM34.6 20.4L33.7 18.1L25.4 17.2L32.4 21.7ZM69.7 36.0L69.1 37.6L71.9 39.8L71.4 36.3ZM41.3 -4.7L41.6 -6.2L33.5 -15.6L39.8 -4.9ZM7.5 73.2L5.2 72.6L-10.0 85.2L7.2 75.4ZM41.6 2.0L42.0 -0.4L34.7 -6.1L39.2 1.9ZM120.6 9.7L122.2 10.5L134.4 4.0L121.2 8.1ZM81.4 32.2L83.0 34.0L89.0 32.3L83.0 30.4ZM66.6 57.8L65.1 59.0L66.4 65.4L68.0 59.1ZM120.3 59.3L120.7 60.8L135.6 67.3L121.7 58.8ZM92.3 43.4L92.9 45.3L100.2 47.0L94.1 42.6ZM127.2 42.8L128.5 44.9L142.6 45.6L129.2 41.3ZM123.2 81.1L123.2 82.7L134.4 91.0L124.8 80.9ZM59.3 35.2L57.5 34.4L54.3 37.3L58.7 37.1ZM98.7 79.6L98.3 81.4L106.6 91.5L100.6 79.9ZM75.3 10.0L76.8 9.4L78.1 2.4L74.5 8.6ZM64.9 42.5L63.1 43.5L63.6 48.0L66.0 44.2ZM34.1 6.7L33.9 5.1L23.7 -1.1L32.5 7.0Z"/>
<path fill="#4a5a84" fill-opacity=".9" d="M135.1 -2.4L137.3 -1.6L151.8 -10.9L135.7 -4.7ZM48.4 37.0L46.3 35.7L41.4 39.0L47.3 39.3ZM86.6 2.4L88.2 2.2L93.2 -7.6L86.2 0.9ZM46.5 72.9L44.2 73.5L41.5 82.7L47.3 75.2ZM8.5 80.4L6.4 80.0L-7.4 93.5L8.4 82.5ZM25.0 54.9L23.3 54.3L13.7 61.0L24.6 56.6ZM17.2 15.4L16.4 13.7L2.0 10.4L15.6 16.3ZM43.5 45.9L42.0 45.4L37.2 49.6L43.2 47.4ZM-2.3 -2.6L-2.9 -4.8L-21.2 -11.9L-4.5 -1.7ZM106.9 -2.1L108.6 -1.9L117.9 -11.6L106.9 -3.8ZM58.9 58.9L57.1 59.7L56.1 68.0L60.0 60.6ZM132.9 4.2L134.4 4.9L146.9 -1.7L133.4 2.6ZM25.5 29.5L23.9 27.5L13.5 28.8L23.7 31.3ZM25.2 19.5L24.3 17.5L13.3 16.0L23.4 20.6ZM76.4 21.7L78.7 21.7L80.7 17.0L76.2 19.4ZM61.7 24.3L62.1 22.5L58.4 19.8L59.8 24.1ZM72.7 19.2L74.4 18.7L75.3 13.3L72.0 17.7ZM88.5 29.2L89.8 30.3L96.8 28.2L89.5 27.8ZM88.1 80.0L87.2 81.9L94.5 94.8L90.1 80.7ZM70.6 28.9L73.2 29.2L74.4 25.5L70.6 26.4ZM38.4 47.9L36.6 47.3L30.4 52.3L38.0 49.7ZM22.3 38.8L21.0 37.7L8.8 40.8L21.4 40.2ZM36.0 63.3L34.5 63.3L26.8 72.6L36.1 64.8ZM89.2 49.7L89.3 52.1L97.2 56.3L91.6 49.4ZM134.3 16.7L135.8 17.7L153.8 12.3L135.2 15.1ZM56.3 16.0L56.9 13.6L52.4 10.2L53.9 15.7ZM110.7 45.1L111.6 47.3L122.6 48.8L112.7 43.9ZM106.4 59.4L106.6 61.0L116.7 66.6L108.0 59.1ZM55.8 39.7L53.7 39.2L50.6 43.3L55.5 41.9ZM114.2 30.9L115.9 32.7L129.4 30.6L115.8 29.0ZM87.7 -0.4L89.2 -0.6L94.0 -10.3L87.3 -1.8ZM16.2 69.8L14.2 69.4L1.2 81.0L16.0 71.8ZM11.5 57.0L9.3 56.0L-4.8 64.4L10.8 59.3ZM140.3 6.2L141.9 7.1L155.5 0.9L141.0 4.5ZM50.8 28.3L49.7 26.4L43.7 26.8L49.0 29.5ZM37.8 14.3L37.6 12.8L27.9 8.4L36.4 14.8ZM60.5 71.1L59.0 72.0L58.6 81.7L61.6 72.5ZM129.8 61.9L130.2 63.5L142.2 67.9L131.3 61.3ZM117.9 0.9L119.7 1.4L131.7 -7.5L118.3 -0.9ZM13.3 47.2L11.9 46.3L-2.2 51.6L12.6 48.7ZM68.2 60.0L67.1 61.0L68.5 69.8L69.4 61.0ZM100.9 11.7L102.5 12.2L111.1 5.6L101.2 10.1ZM85.9 60.0L85.4 62.1L92.3 69.7L88.1 60.4ZM63.9 35.6L61.9 35.5L60.8 38.9L64.1 37.5ZM104.8 3.9L107.1 4.3L114.6 -3.5L105.0 1.5ZM43.3 34.6L41.7 33.2L35.3 35.6L42.1 36.4ZM75.9 26.6L77.9 27.2L80.4 23.8L76.2 24.5ZM10.2 76.4L8.0 76.0L-2.9 86.6L10.1 78.6ZM69.4 36.4L68.4 38.8L71.6 41.2L71.8 37.2ZM24.4 4.8L24.0 2.5L13.5 -2.1L22.2 5.4ZM32.9 43.1L31.6 42.4L24.1 46.0L32.3 44.5ZM81.2 25.3L83.2 26.1L88.0 22.0L81.8 23.2ZM131.6 45.6L132.5 47.1L148.5 49.2L133.0 44.5ZM80.3 27.9L82.0 28.9L86.7 25.9L81.1 26.1ZM80.8 7.9L82.5 7.5L85.3 -0.3L80.2 6.2ZM70.1 31.3L71.5 32.3L74.4 30.4L71.0 29.8ZM72.7 28.6L74.8 29.2L77.0 25.9L73.1 26.4ZM123.3 61.4L123.8 63.2L138.9 69.6L125.1 60.7ZM58.3 28.7L57.5 26.6L52.4 26.6L56.3 29.8ZM92.4 -3.0L94.5 -3.3L99.1 -12.4L91.9 -5.2ZM99.5 -4.9L101.2 -5.0L108.9 -15.8L99.3 -6.6ZM65.2 13.9L66.5 12.5L64.4 7.4L63.6 12.8ZM4.2 17.5L3.4 16.1L-13.5 13.4L2.9 18.4ZM31.6 38.0L30.1 36.9L22.8 39.6L30.6 39.6ZM135.6 51.9L136.6 54.0L152.1 56.7L137.6 50.7ZM11.7 40.3L10.5 39.3L-0.1 42.1L10.8 41.6ZM127.1 77.1L127.2 78.8L142.6 88.8L128.8 76.7ZM36.4 54.0L34.4 53.5L26.0 61.4L36.1 56.0ZM88.7 44.3L89.1 46.5L96.5 48.8L90.8 43.5ZM5.0 43.6L3.7 42.6L-11.1 46.6L4.2 44.9ZM82.6 78.1L81.5 80.0L86.8 90.6L84.6 79.0ZM98.0 21.9L99.6 22.9L106.1 19.3L98.8 20.2ZM114.9 -4.9L117.2 -4.5L125.4 -13.0L115.1 -7.1ZM45.4 32.0L43.8 30.3L37.9 32.1L43.8 33.7ZM87.0 15.8L89.2 16.1L93.7 10.3L87.1 13.5ZM138.7 61.3L139.3 62.9L157.5 69.1L140.2 60.6ZM52.6 57.0L50.2 57.5L47.6 65.5L53.3 59.3ZM127.3 51.8L128.3 54.1L143.4 57.2L129.5 50.6ZM14.0 76.4L12.4 76.2L1.3 87.0L13.9 77.9ZM120.6 71.7L120.8 73.6L134.6 82.2L122.5 71.3ZM72.8 -4.0L74.5 -5.2L74.5 -14.7L71.5 -5.6ZM93.0 64.1L92.6 66.4L99.4 72.1L95.4 64.2ZM18.5 -0.9L18.2 -2.9L6.0 -9.3L16.6 -0.4ZM4.4 41.3L3.3 40.4L-12.8 43.9L3.6 42.6ZM102.2 7.0L103.7 7.4L113.2 -0.8L102.4 5.5ZM127.2 78.6L127.4 81.0L144.5 92.0L129.6 78.1ZM12.8 35.1L11.2 33.4L-1.5 35.9L11.4 36.9ZM74.6 22.9L77.0 22.8L78.3 18.4L74.2 20.6ZM12.5 6.3L11.8 4.1L-3.3 -1.1L10.3 7.2ZM86.9 -3.4L89.4 -4.0L92.0 -12.4L86.1 -5.7ZM48.0 33.4L46.6 32.0L39.7 34.0L46.8 34.9ZM115.3 19.4L116.8 20.3L129.3 15.7L116.1 17.8ZM54.3 52.4L52.8 52.6L50.6 58.3L54.7 53.8ZM82.9 42.1L83.2 43.9L89.3 46.3L84.6 41.7ZM44.7 20.3L44.1 18.0L36.8 16.2L42.5 21.1ZM92.0 76.3L91.5 77.7L99.4 89.6L93.5 76.6ZM137.5 81.0L137.8 83.4L153.4 92.1L139.8 80.4ZM56.6 35.5L54.7 34.4L51.1 37.4L55.7 37.6ZM72.8 22.5L74.6 22.2L75.6 17.8L72.2 20.8ZM54.8 22.1L54.6 20.0L49.1 17.6L52.7 22.4ZM52.0 37.2L50.4 36.3L44.9 39.6L51.3 38.8ZM29.0 65.4L26.5 65.1L17.3 75.6L29.0 67.9ZM125.6 25.8L127.3 27.3L139.6 24.3L126.9 23.9ZM100.1 30.2L101.8 31.8L108.7 29.7L101.6 28.4ZM19.5 23.2L18.2 21.1L5.1 20.6L17.5 24.8ZM130.9 75.6L131.2 78.0L146.2 86.1L133.2 75.0ZM49.8 10.7L50.1 8.6L43.9 3.6L47.7 10.6ZM42.6 77.1L40.3 77.7L35.0 91.0L43.4 79.3ZM107.3 27.1L108.7 28.3L118.4 25.7L108.4 25.5ZM114.4 21.7L115.7 22.6L126.3 19.1L115.2 20.3ZM78.8 77.1L77.5 79.1L82.3 90.9L80.9 78.2ZM82.0 25.4L83.7 26.2L87.8 22.9L82.6 23.6ZM-3.5 24.6L-4.6 23.2L-18.1 23.1L-4.8 25.8ZM139.2 63.9L139.9 66.0L158.2 72.3L141.2 62.9ZM91.9 61.3L91.6 63.4L99.1 69.9L94.1 61.4ZM65.5 70.4L63.6 71.9L65.0 81.5L67.2 72.1ZM16.2 58.0L14.3 57.3L5.7 63.4L15.7 59.9ZM66.6 65.1L64.8 66.7L66.3 75.6L68.3 66.8ZM118.6 27.8L120.3 29.4L131.3 26.8L120.0 25.9ZM68.9 75.5L67.4 77.0L69.3 86.1L70.6 76.9ZM102.7 20.0L104.4 21.0L111.4 17.1L103.5 18.2ZM139.2 0.5L141.4 1.5L158.4 -7.9L140.0 -1.8ZM83.0 26.7L84.9 27.8L89.9 24.5L83.9 24.8Z"/>
<path fill="#7282a6" fill-opacity=".9" d="M67.1 31.0L68.0 29.7L66.2 27.4L65.7 30.3ZM43.8 61.7L42.2 61.8L38.0 69.0L44.0 63.3ZM90.6 14.6L92.4 15.0L99.0 8.4L90.8 12.9ZM117.6 42.2L118.6 44.0L129.4 44.7L119.3 41.0ZM31.3 76.2L29.4 76.3L21.3 88.5L31.7 78.1ZM31.4 27.0L30.1 25.1L21.5 25.7L29.6 28.5ZM120.3 16.4L121.9 17.3L132.9 12.7L121.2 14.6ZM97.7 75.3L97.3 76.9L106.3 87.6L99.3 75.5ZM109.0 69.0L109.0 70.9L121.2 79.9L110.8 68.8ZM41.4 51.0L38.9 50.5L34.3 56.3L41.2 53.5ZM31.4 71.9L29.5 71.9L23.1 81.2L31.6 73.8ZM43.1 -1.5L43.6 -3.8L36.6 -10.3L40.6 -1.7ZM37.5 24.0L36.5 22.1L29.5 21.9L35.7 25.2ZM41.8 78.5L39.4 79.0L34.2 92.2L42.6 80.8ZM46.0 58.1L44.2 58.2L38.9 66.8L46.2 59.8ZM64.7 47.0L62.8 48.2L63.7 53.1L66.1 48.7ZM37.7 29.4L36.4 27.6L28.5 28.6L36.1 30.9ZM44.4 36.0L42.5 34.5L35.9 37.5L43.1 38.1ZM55.0 36.2L53.3 35.2L49.1 38.3L54.3 38.0ZM97.7 19.0L99.6 19.9L106.9 15.2L98.4 17.1ZM60.6 30.3L59.5 28.3L55.8 29.2L58.7 31.7ZM53.8 62.0L51.5 62.8L50.0 70.5L54.9 64.3ZM138.7 37.3L139.9 38.8L157.3 38.7L140.1 36.1ZM78.6 31.4L80.1 33.0L85.1 31.2L80.0 29.8ZM70.5 42.6L69.4 44.5L72.2 48.3L72.4 43.6ZM70.4 36.0L70.0 38.3L73.6 40.0L72.8 36.1ZM48.4 58.1L46.1 58.3L42.5 66.1L48.9 60.3ZM6.6 -3.5L6.1 -5.8L-6.1 -10.9L4.3 -2.8ZM18.2 26.4L16.8 24.4L6.1 25.1L16.4 28.1ZM50.1 22.7L49.5 20.3L43.8 19.4L47.8 23.6ZM10.8 17.4L9.8 15.6L-4.1 13.6L9.0 18.6ZM-3.0 20.1L-4.2 18.1L-23.0 16.7L-4.8 21.5ZM126.1 71.1L126.5 73.5L138.5 79.4L128.4 70.5ZM23.6 23.7L22.6 22.1L11.4 21.4L22.1 24.8ZM23.3 51.2L21.9 50.6L9.9 57.1L22.8 52.7ZM89.2 21.7L91.4 22.7L97.0 18.1L89.9 19.5ZM74.0 55.6L72.8 57.5L76.2 63.3L76.0 56.6ZM131.4 65.6L131.9 67.7L144.0 72.2L133.4 64.9ZM1.7 64.8L0.0 64.2L-13.2 72.3L1.2 66.6ZM139.3 16.7L141.3 18.1L155.9 13.2L140.5 14.6ZM46.6 7.9L46.9 5.9L40.3 0.6L44.6 7.9ZM83.1 55.0L82.5 57.1L88.9 63.6L85.2 55.3ZM46.9 60.2L44.6 60.4L41.0 68.3L47.3 62.4ZM129.2 -1.8L131.5 -1.0L142.5 -9.0L129.8 -4.1ZM97.1 14.4L99.5 15.1L107.3 8.4L97.6 11.9ZM30.2 4.1L30.0 2.3L18.9 -4.3L28.4 4.4ZM99.2 72.5L98.9 74.6L107.3 82.8L101.3 72.7ZM73.2 65.2L72.0 66.8L75.0 75.5L74.9 66.3ZM81.4 48.1L81.1 50.3L87.3 55.0L83.6 48.1ZM17.6 78.4L15.9 78.2L5.6 89.7L17.7 80.1ZM16.2 49.9L14.4 48.9L4.1 54.1L15.4 51.8ZM133.6 11.7L135.3 12.7L149.2 6.9L134.5 9.9ZM136.4 79.8L136.6 81.7L151.7 90.5L138.2 79.4ZM9.4 22.2L8.2 20.3L-4.7 19.9L7.6 23.6ZM71.8 25.4L73.3 25.2L74.3 21.7L71.4 23.9ZM45.9 10.2L46.0 7.7L38.8 3.0L43.4 10.3ZM69.3 26.7L71.1 26.0L71.1 22.3L68.5 25.0ZM60.2 31.7L59.1 30.3L55.3 31.5L59.0 32.9ZM73.9 31.9L75.5 33.7L79.0 31.9L75.5 30.2ZM134.7 2.5L136.6 3.4L148.5 -3.6L135.3 0.5ZM72.4 26.5L73.9 26.6L75.9 22.8L72.2 25.0ZM-2.8 38.2L-4.6 36.5L-23.7 40.0L-4.3 40.1ZM30.6 33.5L29.1 32.0L19.0 34.0L29.2 35.2ZM110.6 30.0L111.7 31.1L120.8 29.5L111.6 28.8ZM11.9 60.9L9.6 60.1L-3.4 68.9L11.3 63.3ZM93.1 72.7L92.4 74.9L99.0 82.0L95.3 73.1ZM91.2 64.3L90.8 66.3L97.8 73.2L93.2 64.5ZM101.2 55.5L101.5 57.8L112.2 63.1L103.5 55.0ZM134.7 38.6L135.8 40.1L147.9 39.9L136.0 37.3ZM131.5 45.4L132.6 47.3L149.8 49.3L133.3 44.1ZM69.3 28.0L71.6 27.3L71.4 23.8L68.4 25.8ZM39.4 40.2L37.2 38.9L30.5 42.9L38.3 42.5ZM114.5 52.2L115.2 54.4L128.0 58.0L116.6 51.2ZM2.8 39.3L0.9 37.7L-15.5 41.4L1.3 41.3ZM101.1 74.7L100.8 76.2L108.2 83.8L102.6 74.8ZM23.6 43.3L22.0 42.3L11.4 46.5L22.7 45.0ZM139.8 21.0L141.3 22.2L159.5 18.0L140.9 19.4ZM-1.8 54.3L-3.5 53.3L-16.8 59.2L-2.6 56.1ZM31.9 9.1L31.6 7.3L21.3 2.4L30.1 9.6ZM63.2 40.4L61.3 40.9L60.9 45.1L63.9 42.2ZM133.7 28.8L135.0 30.2L149.6 28.1L134.8 27.4ZM56.7 48.8L54.9 49.2L52.9 54.8L57.2 50.6ZM29.7 23.2L28.7 21.3L19.9 21.0L27.9 24.5ZM88.9 19.0L91.2 19.8L97.2 14.1L89.3 16.6ZM128.7 66.4L129.1 68.0L144.2 75.2L130.3 65.9ZM87.5 29.9L88.8 31.1L95.9 29.1L88.5 28.6ZM81.4 53.0L81.0 54.8L86.8 61.0L83.3 53.3ZM33.2 79.5L31.0 79.7L25.2 90.7L33.7 81.7ZM101.5 31.2L103.2 33.0L111.5 31.0L103.1 29.4ZM56.6 -0.8L57.4 -2.2L54.0 -8.8L55.2 -1.5ZM70.9 15.8L73.0 14.7L72.4 9.5L69.6 13.9ZM76.5 22.1L79.0 22.1L81.6 16.6L76.2 19.5ZM20.0 60.7L17.7 60.0L8.9 67.4L19.5 63.0ZM137.9 13.1L139.5 14.2L152.4 9.3L138.8 11.4ZM101.5 71.0L101.2 73.5L112.2 83.2L104.1 71.0ZM65.7 23.5L66.8 22.1L64.8 18.6L64.3 22.6ZM103.9 43.5L104.9 45.7L114.7 47.0L105.9 42.3ZM83.5 14.0L85.8 14.0L89.8 7.0L83.3 11.7ZM-1.1 76.3L-2.9 75.8L-19.6 88.4L-1.3 78.2ZM107.4 16.5L109.4 17.5L118.3 12.3L108.2 14.3ZM86.3 13.8L87.8 13.9L91.7 8.7L86.3 12.3ZM64.3 72.6L63.0 73.7L63.4 85.3L65.5 73.8ZM37.8 18.0L37.2 16.2L28.5 13.7L36.0 18.8ZM69.1 64.0L67.7 65.4L69.6 73.4L70.6 65.3ZM62.1 32.7L60.2 31.2L56.9 33.6L60.8 34.8ZM18.8 49.0L16.6 47.8L3.6 54.3L17.8 51.3ZM15.7 43.8L14.0 42.6L2.3 46.9L14.7 45.6ZM38.0 51.6L36.1 51.1L30.7 56.5L37.7 53.5ZM34.4 35.1L33.1 33.9L23.1 36.2L33.3 36.5ZM-0.5 49.9L-2.3 48.8L-19.1 54.8L-1.5 51.7ZM57.7 80.6L55.6 81.8L54.8 95.7L59.2 82.5ZM38.9 57.7L36.5 57.4L30.5 65.4L38.9 60.1ZM19.4 32.3L18.0 30.7L7.2 32.4L18.0 33.9ZM67.1 34.4L65.3 35.9L66.8 39.1L68.8 36.1ZM40.1 17.2L39.5 15.0L32.1 12.9L38.0 17.9ZM15.0 31.4L13.6 29.9L2.7 31.3L13.6 33.0ZM87.1 26.8L89.1 28.1L94.8 24.8L88.2 24.7ZM16.0 19.9L15.3 18.5L2.1 16.7L14.7 20.8ZM9.9 56.7L8.0 55.8L-4.6 62.9L9.2 58.7ZM66.6 41.2L65.3 42.3L66.3 46.3L67.8 42.5ZM77.8 25.9L79.7 26.5L83.1 22.9L78.3 23.9ZM65.2 37.1L62.9 37.9L63.3 41.7L66.2 39.2ZM4.2 69.4L1.8 68.7L-12.8 79.5L3.7 71.9ZM71.4 21.5L72.9 20.9L73.4 16.3L70.6 20.0ZM133.1 73.1L133.4 75.1L147.0 81.9L135.0 72.6ZM82.7 75.0L81.9 76.6L86.6 85.8L84.4 75.7ZM-2.2 66.8L-4.4 65.9L-17.1 74.2L-2.9 69.0Z"/>
<path fill="#8290b0" fill-opacity=".9" d="M104.2 71.2L104.0 73.2L113.8 81.4L106.2 71.1ZM65.4 9.6L66.5 8.5L64.7 0.9L64.2 8.7ZM13.8 63.0L11.9 62.4L-0.0 71.0L13.4 64.9ZM104.9 14.7L106.4 15.4L113.4 10.9L105.4 13.2ZM77.3 35.0L78.2 37.1L83.5 37.0L79.2 33.9ZM62.9 34.0L61.5 33.4L59.0 35.9L62.5 35.5ZM78.5 2.3L80.7 1.5L82.5 -8.1L77.5 0.2ZM53.0 29.5L51.7 27.4L46.6 28.4L51.1 31.0ZM61.9 46.1L60.5 46.7L59.8 51.7L62.6 47.5ZM22.9 77.1L20.4 77.0L12.2 88.0L23.0 79.6ZM41.5 26.0L40.6 24.4L33.5 24.2L40.0 27.1ZM97.1 64.6L96.8 67.0L104.9 73.1L99.5 64.6ZM72.4 29.3L74.0 30.0L76.7 27.2L72.8 27.6ZM132.6 62.7L133.3 64.9L147.5 69.7L134.7 61.8ZM119.3 60.4L119.7 61.9L131.5 67.0L120.8 59.9ZM47.2 46.7L45.3 46.3L40.3 51.8L47.0 48.6ZM114.1 26.0L115.3 27.0L124.6 24.7L115.0 24.7ZM111.8 38.2L113.2 40.3L126.5 40.2L113.8 36.5ZM96.9 29.7L98.3 31.0L107.1 28.9L98.1 28.2ZM67.0 79.0L65.6 80.3L67.0 93.5L68.5 80.3ZM127.5 53.3L128.3 55.3L145.2 59.6L129.4 52.3ZM41.3 50.0L39.5 49.6L33.7 55.3L41.1 51.9ZM82.5 22.4L84.2 22.9L88.0 19.0L82.8 20.8ZM65.8 24.3L67.0 22.8L64.8 19.5L64.1 23.3ZM35.1 29.0L33.8 27.3L24.1 28.0L33.6 30.4ZM5.8 55.4L4.2 54.5L-11.8 62.2L5.2 57.1ZM134.2 68.6L134.8 70.8L150.9 77.8L136.4 67.9ZM24.5 24.6L23.5 22.9L11.1 22.3L23.0 25.8ZM108.7 33.1L110.3 35.0L120.6 33.5L110.4 31.4ZM61.6 37.6L59.6 37.5L57.6 41.6L61.7 39.6ZM56.5 24.5L56.2 22.0L50.9 20.6L54.1 25.0ZM93.0 27.9L94.7 29.3L102.8 26.4L94.2 26.0ZM71.4 42.4L70.8 43.7L73.3 47.2L72.9 42.9ZM57.5 59.7L55.5 60.5L54.1 69.3L58.5 61.6ZM1.7 -2.0L1.3 -3.7L-10.9 -8.5L0.0 -1.3ZM117.7 40.1L118.7 41.6L128.6 41.9L119.1 39.0ZM9.7 64.9L8.2 64.4L-2.9 72.2L9.4 66.4ZM34.6 26.8L33.5 25.1L23.9 25.1L33.1 28.0ZM17.9 73.6L15.7 73.3L5.8 83.9L17.8 75.9ZM64.8 0.8L66.4 -0.8L64.0 -9.5L63.0 -0.6ZM3.0 26.8L1.5 24.8L-12.9 25.6L1.2 28.6ZM49.7 53.4L47.8 53.5L43.6 60.8L50.0 55.3ZM16.3 9.0L15.5 6.8L1.3 2.3L14.1 10.0ZM28.3 39.2L27.0 38.1L15.5 41.6L27.4 40.6ZM19.7 47.2L17.8 46.1L8.3 50.9L18.8 49.2ZM44.5 0.2L44.8 -1.5L38.8 -7.6L42.8 0.0ZM36.2 12.3L35.7 10.0L26.2 6.1L33.8 13.0ZM126.9 29.1L128.7 30.8L140.3 28.4L128.5 27.2ZM81.7 25.6L83.4 26.3L87.7 23.0L82.3 23.9ZM94.2 19.0L96.5 20.0L104.4 14.2L94.9 16.7ZM71.5 41.1L70.7 43.0L73.8 46.2L73.4 41.7ZM23.9 28.2L22.8 26.9L11.0 27.1L22.6 29.4ZM118.3 65.2L118.6 67.1L130.1 72.9L120.2 64.7ZM78.6 72.4L77.8 73.8L82.0 84.7L80.1 73.1ZM50.4 39.4L48.4 38.5L44.5 42.1L49.7 41.6ZM63.8 50.1L62.3 51.0L62.3 57.8L64.8 51.5ZM4.2 35.6L2.9 34.3L-10.1 36.5L3.0 37.1ZM124.2 5.6L126.4 6.6L136.4 -0.0L124.9 3.3ZM123.6 49.2L124.5 51.1L140.1 54.2L125.5 48.1ZM61.8 36.3L59.4 35.9L57.2 39.9L61.6 38.7ZM60.1 69.6L58.0 70.8L58.1 80.4L61.6 71.5ZM47.4 34.0L46.2 33.0L40.5 34.7L46.5 35.2ZM-1.8 1.4L-2.4 -0.5L-18.6 -6.0L-3.7 2.3ZM46.6 75.4L45.0 75.9L40.4 88.4L47.2 77.0ZM65.5 60.0L63.8 61.4L64.9 69.8L67.1 61.6ZM131.1 18.6L132.8 19.9L147.0 15.3L132.2 16.8ZM107.5 -2.0L110.0 -1.6L117.1 -10.1L107.6 -4.5ZM31.1 61.0L29.4 60.7L21.0 69.1L31.0 62.7ZM27.3 2.3L27.1 0.1L17.2 -5.2L25.2 2.7ZM23.0 61.9L20.8 61.4L12.3 69.2L22.7 64.1ZM128.5 7.9L130.4 8.9L140.9 3.1L129.3 6.0ZM50.3 69.9L48.7 70.4L46.3 78.7L50.9 71.4ZM129.3 3.4L130.7 4.0L142.0 -2.5L129.8 1.9ZM54.2 38.4L52.1 37.5L47.8 41.5L53.6 40.6ZM81.8 56.0L81.2 57.9L86.2 63.4L83.7 56.4ZM37.3 -0.2L37.5 -2.7L30.1 -7.9L34.9 -0.2ZM87.7 69.1L86.9 71.3L93.6 79.8L90.0 69.6ZM64.4 28.1L64.8 26.1L61.8 24.6L62.4 27.9ZM22.5 48.0L20.3 46.8L12.1 51.7L21.6 50.3ZM63.1 29.4L62.7 27.3L59.2 27.0L61.1 30.0ZM106.9 80.1L106.6 82.2L117.6 93.2L109.0 80.2ZM49.5 14.8L49.6 13.3L44.0 9.5L48.0 14.9ZM136.8 34.9L138.0 36.3L155.9 35.8L138.1 33.7ZM54.9 65.0L53.3 65.6L51.7 73.4L55.7 66.5ZM99.4 54.1L99.6 55.7L108.3 60.3L101.0 53.7ZM89.3 63.4L88.9 65.1L95.0 71.6L91.0 63.7ZM67.8 24.4L69.2 23.4L68.2 19.2L66.7 23.2ZM110.1 63.7L110.3 65.4L120.0 71.1L111.7 63.4ZM2.6 46.7L0.7 45.4L-16.1 50.9L1.5 48.6ZM89.4 49.6L89.5 51.1L95.2 54.3L90.9 49.4ZM135.5 61.2L136.2 63.2L150.5 67.7L137.4 60.4ZM69.0 21.4L70.8 20.2L69.9 15.7L67.6 19.7ZM95.8 70.6L95.4 72.4L103.3 80.7L97.7 70.8ZM34.7 -4.4L34.9 -6.4L27.6 -12.3L32.7 -4.4ZM65.3 44.9L63.5 46.1L64.2 51.8L66.7 46.6ZM96.2 45.7L96.8 47.7L105.7 50.2L98.2 44.8ZM93.0 32.0L94.2 33.4L101.8 32.1L94.2 30.6ZM19.3 10.6L18.6 8.7L5.7 4.6L17.4 11.4ZM135.5 27.0L137.1 28.6L149.4 26.0L136.9 25.3ZM51.0 80.9L48.9 81.8L45.9 96.5L52.2 82.9ZM78.4 62.4L77.4 64.2L81.5 71.2L80.2 63.2ZM27.6 50.8L25.7 50.0L17.3 55.7L27.0 52.8ZM106.7 38.6L107.8 40.4L119.4 40.8L108.4 37.2ZM34.7 50.3L33.1 49.7L26.5 55.0L34.4 52.0ZM82.6 45.9L82.6 48.4L89.3 52.0L85.1 45.7ZM57.8 53.9L55.4 54.7L54.2 62.3L58.8 56.2ZM72.9 24.2L75.2 24.0L76.4 19.5L72.5 21.9ZM109.2 62.1L109.4 63.7L120.7 70.3L110.9 61.7ZM105.5 23.8L107.3 25.1L116.7 21.4L106.6 21.9ZM26.0 47.0L23.9 45.9L14.9 51.1L25.2 49.2ZM105.2 65.9L105.2 68.1L116.4 75.9L107.4 65.7ZM25.0 15.6L24.2 13.3L13.3 11.0L22.8 16.7ZM73.3 52.4L72.1 54.3L75.8 61.0L75.3 53.4ZM3.2 -0.3L2.6 -2.7L-12.0 -7.9L0.9 0.6ZM46.4 68.0L44.5 68.5L40.5 78.3L47.1 69.9ZM34.9 75.6L33.3 75.8L27.8 85.2L35.3 77.2ZM-4.1 72.1L-6.3 71.3L-20.8 81.5L-4.6 74.4ZM66.3 47.9L64.4 49.5L65.9 55.9L68.1 49.7ZM6.0 5.6L5.3 3.7L-9.1 -0.8L4.1 6.5ZM66.2 75.5L64.8 76.7L66.0 85.5L67.6 76.8ZM22.2 58.8L20.4 58.2L12.3 64.7L21.8 60.7ZM110.6 17.4L112.2 18.3L123.6 13.1L111.3 15.7ZM52.0 38.4L50.4 37.6L45.3 41.3L51.5 40.1ZM48.3 24.2L47.6 22.2L40.5 21.1L46.4 25.2ZM43.0 13.3L42.9 11.4L35.8 7.8L41.2 13.6ZM139.1 76.5L139.4 78.4L153.9 85.7L140.9 76.0ZM84.5 8.3L86.3 8.1L90.1 0.7L84.1 6.5ZM71.3 43.7L70.4 45.4L73.5 50.0L73.1 44.5ZM95.0 52.7L95.2 54.8L102.9 58.7L97.0 52.3ZM53.4 26.8L52.8 25.3L47.5 24.7L52.0 27.6ZM53.4 15.3L53.7 13.6L47.8 8.7L51.6 15.3ZM28.5 7.3L28.1 5.1L19.5 1.6L26.3 7.9ZM112.8 9.1L114.8 9.9L124.5 3.3L113.4 7.1ZM17.6 36.0L16.4 34.8L6.7 36.9L16.6 37.4ZM3.1 57.6L1.2 56.7L-12.3 63.8L2.3 59.7ZM37.4 70.2L35.1 70.4L29.8 80.0L37.8 72.5ZM139.3 28.7L140.4 29.8L155.3 28.0L140.3 27.5ZM-3.3 27.8L-4.5 26.3L-21.7 26.7L-4.7 29.1ZM12.9 80.7L10.6 80.5L1.9 90.5L12.9 83.0Z"/>
<path fill="#56668e" fill-opacity=".9" d="M21.5 -0.8L21.2 -3.2L10.4 -8.8L19.2 -0.3ZM57.8 21.6L57.9 20.0L53.4 16.9L56.1 21.6ZM135.1 21.5L137.0 23.0L153.3 18.7L136.4 19.4ZM80.5 30.8L81.6 31.9L85.7 30.4L81.4 29.6ZM69.2 18.9L70.6 18.0L70.0 12.9L68.1 17.6ZM68.5 26.3L70.5 25.2L69.5 21.6L67.2 24.5ZM57.9 47.0L56.2 47.3L53.9 53.4L58.3 48.6ZM12.3 50.5L10.8 49.7L-2.6 55.6L11.6 52.2ZM78.4 19.4L80.8 19.4L83.2 14.1L78.2 17.0ZM88.3 17.9L90.7 18.5L94.9 13.5L88.6 15.4ZM61.5 63.0L60.0 64.0L59.5 73.9L62.6 64.5ZM83.3 31.3L84.8 32.8L90.3 31.0L84.6 29.6ZM9.7 31.3L8.6 30.0L-5.3 31.1L8.6 32.5ZM124.5 47.6L125.6 49.8L136.7 51.0L126.6 46.3ZM106.0 30.4L107.8 32.2L117.3 30.0L107.7 28.4ZM69.2 41.7L67.8 43.5L70.2 47.1L71.1 42.8ZM96.7 49.6L97.1 51.7L104.4 54.2L98.8 48.9ZM65.7 29.6L66.1 28.1L63.6 26.4L64.2 29.4ZM8.7 45.1L6.8 43.8L-7.5 48.8L7.6 47.1ZM49.7 49.3L48.1 49.2L43.5 55.4L49.7 50.9ZM92.0 7.2L94.1 7.3L99.4 -0.1L91.9 5.1ZM106.6 53.7L107.1 55.7L115.8 58.7L108.6 53.0ZM5.5 10.9L4.6 8.7L-11.9 5.0L3.4 12.1ZM61.6 12.7L63.0 10.5L59.6 5.7L59.3 11.6ZM55.1 38.8L53.1 38.1L49.5 42.0L54.7 40.9ZM120.2 42.1L121.4 44.2L136.6 45.3L122.1 40.6ZM1.8 29.4L0.3 27.7L-14.8 28.8L0.2 31.0ZM1.4 7.0L0.6 4.7L-17.4 -0.2L-0.7 8.1ZM64.4 33.4L62.7 32.7L60.8 35.3L63.9 35.2ZM81.6 23.5L83.9 24.3L88.0 19.8L82.1 21.2ZM79.5 32.4L80.7 33.8L85.3 32.6L80.9 31.0ZM-4.6 4.0L-5.4 1.9L-25.3 -4.1L-6.5 4.9ZM79.9 21.5L82.1 21.8L86.0 16.5L80.0 19.3ZM63.6 34.2L61.5 33.6L59.6 36.7L63.3 36.4ZM122.4 76.1L122.5 78.5L134.8 86.0L124.8 75.7ZM79.8 21.7L81.7 22.0L84.8 17.6L79.8 19.8ZM112.5 60.1L112.8 61.8L124.1 67.4L114.1 59.6ZM49.6 4.9L50.2 2.6L43.6 -4.3L47.2 4.5ZM96.6 12.2L98.7 12.7L106.9 5.3L96.9 10.1ZM28.2 80.5L26.2 80.6L17.2 94.3L28.6 82.5ZM76.9 50.7L76.0 53.0L80.4 57.4L79.3 51.3ZM112.4 64.7L112.6 66.3L124.4 73.5L113.9 64.4ZM15.6 71.8L13.4 71.4L2.4 82.0L15.4 74.0ZM98.7 47.9L99.3 50.0L109.4 53.4L100.8 47.2ZM98.2 37.3L99.5 39.4L106.6 38.8L100.2 35.8ZM58.5 75.3L56.6 76.4L55.6 89.2L59.7 77.0ZM44.5 43.7L42.5 42.9L35.8 48.2L44.0 45.8ZM112.9 48.5L113.5 50.1L125.0 52.9L114.4 47.7ZM93.1 50.1L93.4 52.1L102.2 56.4L95.2 49.6ZM112.2 58.4L112.7 60.8L126.2 66.7L114.5 57.7ZM103.5 59.3L103.6 61.1L114.8 67.9L105.3 58.9ZM51.3 43.4L48.8 42.9L44.8 48.1L51.0 46.0ZM33.0 45.9L30.8 44.9L23.1 50.0L32.2 48.2ZM77.4 48.9L76.8 50.9L81.1 55.1L79.5 49.3ZM36.9 37.8L35.3 36.6L28.6 39.5L35.9 39.6ZM102.8 45.4L103.5 47.1L111.7 48.7L104.5 44.5ZM85.1 10.5L87.4 10.4L91.5 2.7L84.7 8.2ZM7.2 45.6L5.2 44.2L-9.8 49.5L6.0 47.8ZM6.5 15.5L5.6 13.7L-11.6 10.7L4.8 16.6ZM63.5 36.4L60.9 36.5L60.2 40.3L63.8 38.9ZM36.3 21.0L35.5 19.1L26.8 17.7L34.4 22.0ZM62.0 34.6L60.3 33.9L58.0 36.6L61.5 36.3ZM28.1 44.7L25.9 43.5L15.7 48.7L27.1 46.9ZM68.6 57.5L67.4 58.6L69.0 65.9L69.9 58.5ZM102.4 -0.3L103.9 -0.2L112.5 -9.6L102.4 -1.9ZM29.3 12.4L28.8 10.6L18.0 6.7L27.5 13.1ZM22.3 66.0L19.8 65.5L9.1 75.9L22.1 68.5ZM39.1 42.7L37.5 41.9L29.8 46.2L38.5 44.3ZM89.8 54.5L89.7 57.0L96.0 60.6L92.3 54.3ZM27.6 9.6L27.2 8.0L15.5 2.8L26.0 10.1ZM68.7 5.4L70.4 4.0L69.3 -4.4L67.2 3.8ZM118.6 33.8L119.8 35.3L133.6 34.4L119.9 32.4ZM55.0 37.9L53.0 37.1L49.3 40.8L54.4 40.0ZM132.2 11.7L134.0 12.7L145.1 7.6L133.1 9.7ZM73.4 32.3L74.5 33.5L78.0 32.6L74.6 31.1ZM83.4 69.4L82.4 71.5L88.5 81.3L85.6 70.2ZM75.0 18.6L77.1 18.2L78.3 12.9L74.3 16.6ZM6.2 26.0L4.7 24.0L-9.7 24.5L4.4 27.8ZM112.9 1.2L114.4 1.6L122.1 -5.0L113.1 -0.3ZM61.0 3.5L62.4 1.6L59.2 -4.9L59.0 2.4ZM140.1 45.7L141.1 47.4L157.9 49.1L141.7 44.5ZM93.2 80.2L92.5 82.1L100.8 94.4L95.1 80.7ZM110.1 26.8L111.4 28.0L121.4 25.5L111.1 25.4ZM75.2 28.9L77.4 30.0L80.5 27.0L76.1 26.7ZM0.1 33.5L-0.9 32.4L-17.2 33.9L-0.9 34.7ZM52.6 48.1L50.8 48.1L47.0 54.3L52.8 49.9ZM81.1 41.5L81.3 43.7L86.4 45.2L83.3 40.9ZM125.9 59.9L126.4 61.6L138.7 66.0L127.6 59.2ZM11.1 53.7L9.6 52.9L-5.2 60.0L10.5 55.3ZM71.8 11.5L73.6 10.5L73.6 3.3L70.6 9.9ZM119.7 36.5L121.0 38.3L131.1 37.5L121.3 35.1ZM67.0 27.3L68.2 26.0L66.6 22.7L65.5 26.2ZM127.3 15.3L128.6 16.1L144.0 10.6L128.0 13.9ZM70.5 37.3L69.9 39.3L73.1 41.7L72.6 37.8ZM29.9 69.2L28.3 69.1L19.8 79.2L29.9 70.8ZM11.8 71.3L9.6 70.8L-2.3 81.2L11.5 73.5ZM1.5 55.1L-0.4 54.1L-16.7 61.6L0.7 57.2ZM105.6 12.8L107.6 13.6L114.8 8.2L106.2 10.8ZM88.2 6.8L90.7 6.7L94.2 -0.4L87.8 4.3ZM71.6 39.9L70.9 41.8L74.1 44.6L73.6 40.4ZM2.6 61.4L0.4 60.5L-15.3 69.6L1.9 63.7ZM88.8 45.7L89.0 47.4L96.3 50.5L90.5 45.2ZM41.1 7.4L41.1 5.0L31.8 -1.3L38.7 7.6ZM87.3 10.8L89.0 10.8L93.0 4.8L87.2 9.1ZM82.3 0.3L83.8 -0.1L86.3 -8.1L81.7 -1.1ZM26.1 11.9L25.5 9.9L13.6 5.9L24.2 12.7ZM85.3 19.1L86.9 19.5L91.3 14.8L85.5 17.4ZM61.8 79.8L59.9 81.2L60.5 91.7L63.4 81.6ZM35.0 11.9L34.7 10.0L26.7 6.8L33.2 12.5ZM13.8 22.6L12.4 20.5L-2.6 19.8L11.8 24.1ZM102.0 42.7L102.9 44.7L113.2 46.2L103.9 41.6ZM14.8 36.3L13.0 34.6L-1.5 37.6L13.3 38.2ZM117.3 46.7L118.2 48.5L129.1 50.2L119.0 45.6ZM8.7 4.9L8.1 3.0L-7.7 -2.6L6.9 5.7ZM104.4 70.7L104.2 72.4L115.4 82.3L106.1 70.6ZM109.8 52.9L110.4 55.2L121.9 59.0L112.0 52.1ZM67.0 41.8L65.6 43.0L66.9 47.1L68.4 43.1ZM50.7 8.5L51.2 6.5L45.8 1.5L48.7 8.3ZM72.6 47.0L71.8 48.4L74.8 53.3L74.0 47.6ZM109.4 71.0L109.4 72.6L119.2 80.1L111.0 70.9ZM67.4 31.8L69.2 31.8L69.9 29.0L67.2 30.0ZM84.3 22.2L86.1 22.8L90.2 18.8L84.7 20.3ZM52.4 77.5L50.5 78.3L48.5 89.1L53.4 79.2ZM131.9 30.1L133.5 31.8L147.1 29.7L133.4 28.3ZM16.5 30.7L14.8 28.7L0.1 30.3L14.8 32.5ZM2.4 35.4L1.3 34.4L-10.2 36.1L1.4 36.6ZM53.8 52.2L51.4 52.5L48.5 60.1L54.4 54.5ZM37.4 32.2L35.8 30.5L26.5 32.4L35.8 34.0ZM72.8 37.2L72.7 39.5L76.8 41.2L75.0 37.1ZM126.5 16.9L128.6 18.3L139.3 13.7L127.7 14.7ZM54.9 -0.9L56.0 -3.1L50.5 -12.5L52.6 -1.8ZM104.7 51.5L105.3 53.8L114.4 56.5L106.9 50.6ZM41.8 44.0L40.2 43.3L32.4 48.4L41.3 45.7ZM21.6 11.5L21.0 9.7L7.2 5.1L19.9 12.2ZM70.1 10.1L71.6 9.1L71.3 1.3L69.0 8.8ZM-0.7 43.7L-2.0 42.7L-15.6 46.3L-1.6 45.1ZM29.4 41.0L28.0 40.1L20.5 43.2L28.6 42.5Z"/>
<path fill="#3e4e78" fill-opacity=".9" d="M55.5 7.6L56.4 5.4L51.6 -0.6L53.2 7.0ZM79.1 24.5L80.9 25.1L85.1 20.8L79.4 22.7ZM112.7 42.2L113.8 44.0L123.8 44.7L114.5 40.9ZM18.4 29.7L16.9 27.9L5.3 29.1L16.7 31.4ZM46.4 78.4L44.2 79.1L40.0 92.6L47.3 80.5ZM112.4 36.3L113.4 37.5L122.2 37.2L113.6 35.2ZM55.9 5.3L56.6 3.8L52.1 -3.6L54.4 4.7ZM78.8 3.1L80.7 2.5L82.1 -5.1L77.9 1.3ZM95.3 4.4L97.1 4.5L103.1 -3.2L95.3 2.7ZM66.3 26.5L67.8 24.5L65.3 21.3L64.2 25.2ZM8.7 69.6L6.4 69.0L-3.9 77.7L8.3 71.9ZM84.0 34.9L85.2 36.8L90.8 36.2L85.8 33.6ZM79.0 41.6L79.1 44.0L84.1 45.8L81.3 41.3ZM130.7 54.4L131.4 56.3L147.1 60.2L132.4 53.4ZM87.2 37.0L88.0 38.6L93.9 38.8L88.6 36.1ZM74.1 13.5L75.6 12.9L76.4 7.5L73.4 12.1ZM35.8 0.9L36.0 -1.7L27.6 -7.3L33.3 1.0ZM130.0 38.5L131.5 40.6L146.1 40.3L131.9 36.9ZM50.5 65.8L48.5 66.4L46.3 74.3L51.2 67.7ZM24.3 53.9L22.3 53.1L11.1 60.6L23.7 56.0ZM74.5 33.0L75.4 34.4L79.1 33.7L75.8 31.9ZM66.4 40.8L64.6 42.2L65.9 46.3L67.9 42.5ZM64.1 26.0L64.6 24.6L61.8 21.7L62.6 25.6ZM134.9 77.1L135.1 78.6L148.9 86.5L136.4 76.7ZM62.0 64.9L60.1 66.1L60.5 74.1L63.4 66.6ZM18.8 7.3L18.3 5.4L6.6 1.1L16.9 8.0ZM13.7 10.0L12.9 7.6L1.4 4.9L11.5 11.1ZM71.5 21.5L73.4 20.8L73.6 16.2L70.6 19.7ZM50.6 20.8L50.4 19.0L45.0 17.1L48.8 21.2ZM46.6 2.0L47.0 0.4L41.6 -5.3L45.0 1.8ZM17.2 -4.6L16.9 -7.1L3.2 -14.8L14.8 -4.1ZM63.5 22.3L64.5 20.1L61.2 16.5L61.2 21.4ZM99.1 24.1L100.5 25.1L107.7 22.1L100.0 22.6ZM113.1 52.9L113.7 54.9L125.7 58.8L114.9 52.2ZM110.5 1.7L112.4 2.1L123.9 -7.7L110.7 -0.3ZM100.6 14.3L102.7 15.0L108.8 9.9L101.1 12.1ZM37.6 66.3L35.1 66.3L28.3 77.0L37.9 68.7ZM76.7 3.5L78.6 2.7L79.6 -5.0L75.7 1.8ZM64.8 34.3L62.4 34.1L61.5 37.5L64.9 36.8ZM108.7 49.5L109.4 51.8L119.1 53.9L110.8 48.5ZM33.2 14.4L32.6 12.3L24.5 9.9L31.1 15.2ZM24.7 -4.3L24.6 -6.3L15.3 -12.3L22.7 -4.0ZM40.8 69.1L38.9 69.3L33.8 78.8L41.2 70.9ZM65.2 32.5L63.8 31.7L61.3 33.7L64.5 34.1ZM46.5 18.7L46.2 16.8L40.0 14.6L44.7 19.2ZM18.9 5.3L18.4 3.0L6.3 -1.6L16.6 6.1ZM55.3 73.8L53.6 74.7L51.8 85.9L56.3 75.5ZM42.9 28.6L41.9 27.1L35.1 27.5L41.6 29.7ZM132.0 52.2L133.0 54.3L146.4 56.7L134.0 51.1ZM64.5 29.9L64.2 27.8L60.7 27.3L62.4 30.4ZM130.5 35.2L131.9 37.0L148.6 36.2L132.1 33.6ZM70.7 51.2L69.6 52.6L72.1 59.1L72.2 52.1ZM105.2 33.8L106.4 35.3L116.5 34.4L106.5 32.4ZM107.6 77.9L107.4 79.9L116.3 87.8L109.6 77.9ZM5.4 81.7L3.4 81.3L-8.8 93.1L5.3 83.8ZM27.7 13.5L27.2 11.8L16.5 8.3L26.1 14.2ZM5.4 76.9L3.7 76.6L-12.2 89.7L5.3 78.6ZM55.2 56.5L53.8 56.9L51.4 64.2L55.8 57.9ZM16.4 5.1L15.9 3.1L4.9 -1.0L14.5 5.8ZM6.1 52.3L4.6 51.4L-9.1 57.4L5.4 53.9ZM132.1 13.5L134.1 14.7L151.0 8.2L133.1 11.5ZM18.1 54.6L16.3 53.9L5.9 60.3L17.5 56.5ZM100.1 3.9L102.4 4.2L109.1 -3.7L100.2 1.6ZM75.1 62.3L74.2 63.6L77.4 71.3L76.5 63.0ZM90.8 -0.5L93.1 -0.7L98.0 -10.5L90.3 -2.8ZM8.1 24.3L6.8 22.5L-6.0 22.5L6.4 25.8ZM128.7 46.1L129.8 48.0L143.2 49.4L130.5 44.8ZM67.7 30.6L69.9 29.7L69.1 26.6L66.5 28.5ZM132.5 0.9L134.4 1.7L146.2 -5.7L133.1 -1.2ZM4.8 34.5L3.2 32.8L-13.0 35.2L3.3 36.3ZM97.3 41.8L98.0 43.5L105.1 44.4L98.9 40.9ZM0.3 17.6L-0.7 16.0L-18.9 13.5L-1.3 18.8ZM50.9 48.4L48.4 48.2L44.2 55.1L51.0 50.9ZM35.6 33.1L33.8 31.3L24.9 33.5L34.0 35.0ZM16.8 22.3L15.6 20.4L4.4 20.0L15.0 23.7ZM64.0 30.3L63.5 28.3L60.1 28.4L62.1 31.1ZM94.4 36.4L95.3 37.7L103.9 38.0L95.6 35.4ZM14.6 39.9L13.0 38.6L-0.8 42.2L13.5 41.5ZM60.2 15.2L61.0 13.4L57.5 8.9L58.3 14.5ZM50.8 28.3L49.7 26.4L44.5 26.9L49.0 29.6ZM-1.3 9.1L-2.0 7.4L-20.3 2.8L-2.9 10.0ZM5.6 28.8L4.1 26.9L-12.5 27.8L4.0 30.5ZM140.1 52.5L141.1 54.5L160.7 58.3L142.0 51.3ZM6.5 7.6L5.9 6.1L-7.1 2.2L5.1 8.3ZM88.6 23.4L90.6 24.4L96.7 20.1L89.3 21.3ZM109.0 75.9L108.8 78.1L118.2 85.6L111.2 75.8ZM1.9 74.3L-0.4 73.7L-11.7 83.1L1.5 76.7ZM9.0 19.1L8.1 17.5L-4.4 16.2L7.5 20.2ZM111.8 11.5L114.2 12.5L122.1 6.8L112.6 9.1ZM115.6 25.7L117.0 26.9L130.2 23.8L116.7 24.1ZM56.3 26.8L55.6 24.7L50.4 24.1L54.3 27.7ZM39.8 48.8L38.1 48.3L31.3 54.1L39.5 50.7ZM118.5 22.3L120.2 23.6L130.9 20.0L119.6 20.4ZM96.3 81.4L95.5 83.6L104.5 95.5L98.6 81.9ZM115.3 59.5L115.8 61.5L126.9 66.1L117.3 58.9ZM62.6 25.8L62.9 24.0L59.3 21.7L60.7 25.7ZM43.4 63.7L40.9 63.9L35.2 74.6L43.9 66.1ZM55.2 32.7L53.4 30.9L49.3 33.0L53.7 34.6ZM111.4 17.8L113.4 19.0L124.3 13.7L112.3 15.7ZM117.5 56.1L118.0 57.6L132.2 63.2L119.0 55.5ZM9.4 28.2L8.5 26.9L-7.3 27.1L8.3 29.3ZM-3.6 12.2L-4.5 10.4L-19.4 7.9L-5.3 13.3ZM122.5 16.9L124.4 18.1L137.5 12.8L123.5 14.9ZM102.6 23.7L104.5 25.0L114.2 21.1L103.8 21.7ZM81.9 51.5L81.5 53.8L86.5 57.7L84.3 51.7ZM26.0 34.7L24.2 32.9L15.9 35.3L24.5 36.6ZM3.6 15.7L2.9 14.4L-13.5 11.3L2.3 16.5ZM121.8 24.7L123.3 25.9L135.0 22.9L122.9 23.1ZM66.9 -1.4L68.0 -2.4L66.7 -10.7L65.7 -2.4ZM19.6 65.8L17.9 65.5L9.1 73.3L19.4 67.5ZM70.8 23.2L72.3 22.7L72.7 18.5L70.1 21.7ZM91.0 3.9L93.2 3.8L97.2 -3.5L90.7 1.8ZM71.9 37.0L71.7 38.6L75.1 40.7L73.4 37.0ZM27.6 22.8L26.6 21.1L15.3 20.0L26.0 23.9ZM29.6 42.2L28.0 41.2L19.9 44.8L28.8 43.8ZM39.2 71.5L37.2 71.8L31.8 82.0L39.7 73.6ZM99.2 58.0L99.3 59.9L109.3 66.3L101.1 57.7ZM59.1 66.2L57.5 67.1L56.7 76.3L60.2 67.7ZM0.2 20.5L-0.7 19.0L-16.0 17.7L-1.1 21.5ZM138.7 40.6L139.7 42.0L159.1 43.0L140.0 39.4ZM26.5 63.2L24.6 62.8L14.6 72.3L26.3 65.1ZM78.4 7.7L80.8 7.0L82.6 -1.5L77.4 5.4ZM110.6 47.8L111.3 49.7L123.8 52.6L112.4 46.8ZM60.3 9.7L61.5 7.6L57.5 1.1L58.1 8.7ZM58.7 28.5L58.1 26.8L53.6 26.4L57.1 29.2ZM31.5 30.6L30.4 29.3L22.6 30.3L30.3 31.8ZM79.1 51.3L78.6 53.1L83.4 58.3L81.0 51.7ZM55.3 26.0L54.8 24.2L49.5 23.1L53.6 26.7ZM136.1 59.1L136.8 61.0L150.7 64.9L137.9 58.2ZM89.6 57.7L89.4 59.4L96.8 66.1L91.3 57.8ZM34.7 69.6L32.3 69.7L27.5 78.0L35.0 72.0ZM-1.7 77.3L-3.2 76.9L-18.0 88.1L-1.9 78.8ZM77.2 21.2L79.1 21.2L81.6 16.4L77.0 19.3ZM13.8 24.4L12.8 22.9L-2.4 22.1L12.5 25.6ZM37.9 81.2L35.8 81.6L31.7 91.7L38.6 83.3ZM86.3 34.5L87.2 35.7L93.6 35.5L87.5 33.5ZM127.6 23.8L128.8 24.8L141.0 21.9L128.5 22.4ZM21.2 72.5L19.4 72.3L11.2 81.4L21.2 74.4Z"/>
<path fill="#909cb8" fill-opacity=".9" d="M7.5 12.1L6.7 10.2L-4.6 8.1L5.7 13.2ZM84.0 1.4L85.7 1.0L89.2 -8.0L83.5 -0.2ZM113.3 80.7L113.1 83.1L125.5 93.7L115.6 80.7ZM46.2 76.6L43.9 77.3L39.6 90.9L47.2 78.8ZM128.8 9.9L130.4 10.7L143.6 4.6L129.5 8.3ZM13.6 -2.8L13.2 -5.0L-1.1 -12.3L11.4 -2.2ZM40.9 13.8L40.7 11.8L31.7 7.4L39.0 14.2ZM43.0 32.9L41.5 31.3L33.7 33.2L41.6 34.5ZM117.5 38.0L118.4 39.2L130.0 39.5L118.7 37.0ZM104.4 29.8L106.0 31.4L115.4 29.2L105.8 28.1ZM60.7 39.3L58.3 39.3L56.9 43.6L60.9 41.6ZM60.9 8.2L61.8 6.7L58.9 0.4L59.4 7.4ZM80.4 15.3L82.7 15.2L84.8 9.8L80.0 13.0ZM27.2 72.9L25.5 72.8L16.6 83.7L27.3 74.6ZM122.4 15.4L124.4 16.7L138.2 10.7L123.4 13.3ZM14.4 79.6L12.0 79.3L2.1 90.6L14.4 82.0ZM112.4 16.4L114.3 17.4L125.1 12.1L113.3 14.5ZM103.0 26.2L104.3 27.2L113.6 24.6L103.9 24.9ZM121.1 78.8L121.1 80.4L136.1 91.9L122.7 78.6ZM92.8 43.0L93.5 45.3L102.1 47.1L95.0 41.9ZM17.9 38.5L16.2 37.1L4.6 40.3L16.6 40.4ZM15.8 11.4L14.9 9.2L2.2 6.1L13.6 12.5ZM119.3 -1.7L121.3 -1.2L130.8 -9.1L119.7 -3.7ZM50.0 42.5L47.7 41.8L42.3 47.2L49.6 44.9ZM84.9 32.0L86.0 33.3L91.0 32.1L86.0 30.8ZM81.5 50.7L81.1 52.7L86.6 57.5L83.4 50.9ZM39.4 61.5L37.6 61.5L30.7 70.9L39.6 63.4ZM102.2 79.3L101.8 81.4L109.6 89.4L104.3 79.5ZM67.3 38.5L65.5 40.2L67.4 44.3L69.2 40.2ZM136.5 67.4L136.9 68.8L153.6 76.1L138.0 66.8ZM82.3 23.2L84.5 24.0L89.1 19.3L82.8 21.0ZM23.5 79.1L21.1 79.1L12.5 91.0L23.8 81.5ZM51.4 17.3L51.4 15.3L44.9 11.4L49.4 17.5ZM59.1 33.1L57.8 32.0L53.9 33.9L58.1 34.5ZM65.4 38.6L63.4 39.6L63.9 44.0L66.7 40.5ZM76.5 53.7L75.7 55.4L79.2 60.2L78.3 54.3ZM126.5 41.6L127.9 43.7L143.4 44.4L128.5 40.1ZM24.2 37.8L23.1 36.9L12.3 39.5L23.4 39.1ZM59.1 50.1L57.4 50.6L56.0 56.9L59.8 51.7ZM54.9 41.7L52.9 41.3L50.1 45.4L54.7 43.7ZM81.1 78.7L80.0 80.5L85.1 92.0L83.0 79.6ZM76.4 17.0L78.5 16.6L79.7 11.7L75.8 14.9ZM57.8 31.0L56.8 29.7L51.9 30.5L56.5 32.1ZM76.8 26.2L78.7 26.8L81.3 23.5L77.2 24.3ZM28.4 5.8L28.1 3.6L16.0 -2.6L26.3 6.3ZM47.9 8.1L48.2 5.7L41.3 0.0L45.5 8.0ZM-2.6 80.2L-4.2 79.8L-20.3 92.5L-2.8 81.9ZM97.4 5.7L99.6 6.0L105.0 -1.0L97.4 3.5ZM46.9 41.9L44.9 41.1L39.6 45.5L46.3 44.0ZM133.3 56.9L134.0 58.8L148.1 62.5L135.1 55.9ZM128.7 34.3L130.2 36.1L142.6 34.9L130.3 32.6ZM116.7 30.9L118.4 32.7L128.9 30.7L118.4 29.0ZM10.4 13.5L9.5 11.5L-6.1 8.2L8.5 14.6ZM135.1 6.9L136.4 7.6L148.1 2.1L135.6 5.5ZM44.3 39.0L42.6 38.0L35.7 41.6L43.4 40.8ZM137.3 74.3L137.7 76.3L150.9 82.5L139.2 73.7ZM59.7 5.7L61.0 3.6L57.1 -3.5L57.5 4.6ZM73.7 3.0L75.7 1.9L75.7 -6.1L72.4 1.2ZM62.5 43.4L60.8 44.0L60.2 48.9L63.2 45.0ZM73.7 51.5L72.8 53.0L75.9 58.4L75.2 52.2ZM77.8 77.2L76.3 79.3L80.4 88.5L80.0 78.4ZM43.6 32.5L42.2 31.1L35.5 32.7L42.3 34.0ZM90.5 46.5L90.9 48.8L98.0 51.3L92.7 45.9ZM41.5 28.0L40.5 26.5L34.2 26.9L40.1 29.2ZM82.3 57.9L81.6 60.1L86.4 65.0L84.6 58.4ZM6.8 75.6L5.1 75.2L-6.1 84.9L6.6 77.3ZM122.0 78.0L122.1 80.0L133.6 87.7L124.0 77.7ZM70.4 34.4L70.5 36.7L74.1 37.3L72.7 34.0ZM133.8 13.0L135.8 14.3L152.7 7.7L134.9 10.9ZM125.7 72.8L125.9 74.5L142.4 84.5L127.4 72.4ZM82.3 36.7L83.0 38.2L89.1 38.8L83.7 35.8ZM39.4 7.8L39.3 5.8L31.5 1.1L37.3 8.1ZM67.9 50.5L66.0 52.3L68.1 58.3L69.8 52.2ZM42.0 5.1L42.1 2.9L33.9 -3.4L39.8 5.2ZM99.3 40.6L100.4 42.9L110.0 43.6L101.4 39.3ZM131.1 24.4L132.5 25.6L147.5 22.5L132.2 22.9ZM35.4 33.4L33.7 31.7L26.8 33.8L33.9 35.2ZM100.1 1.0L102.3 1.2L110.7 -9.0L100.0 -1.2ZM69.5 72.0L67.8 73.7L70.2 84.4L71.4 73.5ZM86.2 71.1L85.2 73.4L91.6 82.4L88.5 71.8ZM94.1 40.3L95.1 42.5L102.2 42.9L96.1 39.1ZM44.8 56.0L43.3 56.0L38.2 63.1L44.9 57.5ZM5.8 47.4L4.0 46.2L-8.6 51.0L4.8 49.4ZM66.1 22.9L67.7 21.0L65.4 17.4L64.0 21.5ZM100.1 36.4L101.3 38.1L109.8 37.7L101.7 35.0ZM-4.5 57.6L-6.1 56.7L-20.4 63.3L-5.2 59.3ZM19.8 18.1L19.0 16.5L8.8 15.0L18.2 19.1ZM28.6 57.0L26.7 56.5L16.2 65.1L28.3 59.0ZM93.7 57.3L93.6 59.0L101.7 65.1L95.4 57.2ZM95.7 75.7L95.1 77.9L102.0 85.4L98.0 76.0ZM116.7 74.9L116.7 77.4L128.4 85.1L119.2 74.6ZM56.0 68.9L54.4 69.6L52.5 80.1L56.8 70.4ZM4.1 21.3L3.2 19.8L-8.6 19.1L2.7 22.3ZM55.7 17.7L56.1 15.3L51.5 12.5L53.3 17.6ZM120.2 50.8L120.8 52.4L131.3 54.8L121.7 49.9ZM84.3 28.8L85.5 29.8L90.9 27.6L85.1 27.5ZM67.3 35.1L65.6 36.6L67.3 39.7L68.9 36.6ZM73.2 31.1L75.0 32.6L78.6 30.3L74.5 29.0ZM104.1 -5.1L105.8 -5.0L114.1 -15.1L104.0 -6.8ZM22.8 -3.2L22.7 -4.8L13.1 -10.8L21.2 -2.9ZM125.8 43.8L126.9 45.6L141.8 47.1L127.5 42.6ZM92.9 18.7L95.2 19.6L100.3 14.9L93.5 16.3ZM8.4 64.5L6.6 63.9L-4.5 71.7L8.0 66.4ZM140.2 26.0L141.8 27.5L158.2 24.5L141.5 24.2ZM-3.1 47.8L-5.0 46.4L-22.2 52.1L-4.2 49.8ZM13.3 69.9L11.4 69.4L0.8 78.6L13.1 71.8ZM83.0 63.6L82.3 65.3L88.0 73.7L84.7 64.1ZM131.2 34.6L132.2 36.0L147.9 35.4L132.4 33.4ZM86.7 58.1L86.2 60.3L92.8 66.5L88.9 58.3ZM103.6 36.0L105.0 37.8L115.4 37.3L105.3 34.4ZM8.2 53.4L6.1 52.3L-7.1 59.0L7.3 55.5ZM12.9 33.6L11.6 32.3L-2.9 34.1L11.7 35.0ZM43.6 49.5L41.2 49.0L36.6 54.7L43.4 51.9ZM71.2 54.3L70.1 55.7L72.7 62.9L72.7 55.2ZM30.8 14.4L30.2 12.5L21.0 9.7L29.0 15.1ZM49.1 73.3L47.0 74.0L44.0 85.1L50.1 75.4ZM54.5 61.2L52.8 61.8L50.8 69.6L55.2 62.8ZM63.7 53.4L61.7 54.7L62.2 62.4L65.1 55.3ZM98.4 68.6L98.1 70.9L107.1 78.9L100.7 68.7ZM99.9 50.3L100.4 52.6L111.1 56.6L102.2 49.5ZM58.2 30.3L57.1 28.6L52.2 29.3L56.6 31.6ZM91.4 11.5L93.4 11.8L99.9 4.3L91.4 9.4ZM112.5 -2.9L114.8 -2.5L126.6 -13.8L112.7 -5.2ZM44.4 25.5L43.3 23.3L34.8 22.8L42.3 26.8ZM-2.8 69.7L-4.9 68.9L-17.5 77.7L-3.3 72.0ZM27.4 67.9L25.4 67.7L18.9 75.6L27.4 70.0ZM107.1 46.5L107.9 48.5L120.3 51.3L109.0 45.5ZM45.7 37.8L43.8 36.6L38.1 39.9L44.7 39.8ZM14.2 64.5L12.8 64.1L2.7 71.6L13.9 66.0ZM102.6 68.9L102.4 71.4L113.0 79.8L105.1 68.8ZM24.3 34.3L22.5 32.6L9.8 35.1L22.7 36.2ZM96.3 24.9L97.6 25.8L104.9 22.8L97.1 23.4ZM56.3 10.2L56.9 8.8L53.1 3.9L54.8 9.8ZM82.3 -2.3L84.2 -2.9L86.7 -12.5L81.4 -4.1ZM130.8 -3.9L133.1 -3.1L145.7 -12.3L131.3 -6.3ZM-4.5 33.2L-5.6 32.1L-23.8 33.5L-5.5 34.3ZM79.8 73.1L78.6 75.1L82.9 83.5L81.9 74.1ZM25.3 66.9L23.5 66.7L13.6 76.7L25.2 68.7ZM46.2 15.7L46.1 13.7L38.4 9.7L44.3 16.1ZM137.7 33.9L138.8 35.2L157.6 34.4L138.9 32.6ZM95.7 22.1L97.9 23.4L105.5 18.8L96.7 19.9ZM60.7 22.9L61.1 21.2L57.0 17.8L59.0 22.8ZM119.8 65.4L120.1 67.2L133.0 73.9L121.5 65.0ZM90.6 32.7L91.8 34.2L98.1 33.0L91.9 31.3ZM59.6 27.9L59.1 25.8L55.0 25.5L57.7 28.6ZM52.6 13.2L52.9 11.6L47.5 6.8L50.9 13.1ZM82.0 30.1L83.9 31.7L88.9 29.2L83.4 28.1ZM81.0 25.0L83.2 25.9L87.8 21.5L81.6 22.7ZM75.2 29.5L76.8 30.4L79.9 28.0L76.0 27.8ZM117.9 7.8L120.2 8.8L129.9 2.1L118.6 5.5ZM44.7 29.7L43.3 27.8L36.0 28.8L43.0 31.3ZM136.1 34.3L137.3 35.7L154.9 34.9L137.4 32.9ZM100.3 40.4L101.2 42.2L110.1 43.0L101.9 39.3ZM139.0 45.3L140.0 46.9L155.2 48.3L140.5 44.1ZM63.1 1.7L64.2 0.4L61.8 -7.3L61.7 0.8ZM117.4 80.5L117.3 82.1L130.3 93.1L119.0 80.4ZM72.4 7.0L74.2 6.0L73.9 -0.3L71.2 5.4ZM129.3 38.2L130.6 39.9L142.6 39.6L130.9 36.8ZM75.4 36.3L75.7 37.8L80.0 38.8L76.8 35.8ZM75.1 80.2L73.8 81.8L77.3 93.9L76.8 81.3ZM114.8 23.8L116.6 25.2L129.5 21.3L116.0 21.8ZM79.8 -2.6L81.5 -3.3L84.0 -14.3L78.9 -4.2ZM7.6 52.0L5.4 50.8L-7.3 57.0L6.6 54.3Z"/>
<g fill="none" stroke-linecap="round">
<path stroke="#9c8c46" stroke-width="0.8" stroke-opacity=".95" d="M61.1 16.3l-0.4 -1.0M60.6 14.2l-0.4 -1.1M124.8 9.7l1.4 -0.5M128.1 8.5l1.3 -0.5M43.6 81.3l-0.8 1.7M42.2 84.3l-0.8 1.6M130.3 9.1l1.9 -0.7M133.5 7.7l1.9 -0.7M49.5 28.6l-1.3 -0.2M43.9 76.3l-0.7 1.3M98.3 76.8l0.8 1.2M100.3 79.4l1.3 1.8M23.4 55.3l-1.4 0.8M20.9 56.5l-1.1 0.6M29.8 72.7l-0.9 1.0M16.9 83.1l-1.5 1.6M8.1 31.1l-2.4 -0.0M4.9 31.0l-2.5 -0.0M98.6 49.9l1.5 0.9M40.1 66.9l-1.1 1.4M38.3 69.1l-1.3 1.8M50.6 24.2l-1.1 -0.4M7.1 0.4l-1.9 -1.0M3.9 -1.4l-1.4 -0.7M83.1 22.3l0.7 -0.4M84.8 21.2l1.4 -0.8M101.5 63.6l1.4 1.3M12.7 -8.4l-1.4 -1.0M36.8 13.4l-0.9 -0.5M35.7 67.4l-1.5 1.7M33.9 69.8l-0.9 1.1M5.1 -5.0l-1.1 -0.6M5.9 15.8l-1.9 -0.5M14.7 7.4l-2.5 -1.1M11.4 6.3l-1.4 -0.6M8.1 5.1l-2.1 -1.0M100.7 48.0l1.2 0.6M102.6 49.7l1.4 0.7M-5.7 20.2l-2.6 -0.4M57.8 77.1l-0.5 2.3M56.9 83.0l-0.2 1.2M68.6 80.8l0.1 1.5M68.6 83.9l0.1 2.1M-0.2 65.0l-1.6 0.8M-3.2 67.0l-2.5 1.3M39.2 34.6l-1.1 0.1M84.9 58.4l0.7 1.0M86.0 60.2l0.9 1.4M14.8 2.4l-1.4 -0.8M52.8 33.8l-1.4 0.2M54.4 75.3l-0.5 1.7M113.6 78.9l1.5 1.5M116.1 81.9l1.9 1.9M119.0 84.4l2.1 2.1M84.4 64.2l0.6 1.1M85.7 66.3l0.7 1.4M88.3 57.9l1.2 1.4M123.6 78.9l1.6 1.3M126.2 80.9l1.7 1.4M72.8 67.0l0.3 1.6M73.7 69.0l0.2 0.9M133.4 45.4l2.6 0.5M137.1 46.1l1.5 0.3M45.3 76.6l-1.0 2.1M44.4 79.6l-0.7 1.5M4.3 52.1l-2.2 0.7M1.1 53.5l-2.5 0.8M25.9 44.8l-1.9 0.6M23.4 45.6l-1.7 0.6M130.0 71.3l2.3 1.4M133.3 73.4l1.7 1.1M26.4 33.1l-1.8 0.1M103.3 55.9l1.7 1.2M105.3 57.9l1.6 1.1M107.6 59.4l1.3 0.9M139.7 76.3l1.8 1.1M94.9 58.2l1.1 1.1M96.6 59.8l1.3 1.3M132.1 80.5l1.7 1.3M61.6 26.0l-0.9 -1.0M55.1 70.2l-0.4 1.4M120.4 75.3l2.2 1.8M-6.9 55.4l-2.3 0.7M30.7 8.1l-1.4 -0.9M12.0 -3.1l-1.8 -1.1M100.9 54.5l1.3 0.9M102.5 56.1l1.4 1.0M61.9 41.7l-0.8 1.6M32.5 56.2l-1.2 0.8M83.4 82.7l0.4 1.3M111.0 19.4l1.0 -0.3M113.3 19.3l0.9 -0.2M39.4 40.7l-1.9 0.6M8.8 42.9l-1.4 0.3M-3.0 8.2l-2.0 -0.7M9.5 28.1l-2.0 -0.1M7.5 18.3l-1.7 -0.4M4.6 18.0l-2.1 -0.5M71.4 12.3l0.3 -1.2M51.1 48.8l-0.9 1.0M122.5 0.0l1.3 -0.8M53.2 48.3l-0.9 1.1M52.2 50.2l-0.9 1.1M120.3 9.7l1.4 -0.6M107.1 78.0l1.6 1.8M62.8 55.3l-0.2 1.1M62.2 57.8l-0.3 2.1M125.6 33.8l1.9 0.1M129.0 34.0l1.5 0.1M-4.9 70.1l-2.1 1.1M-8.1 71.8l-2.3 1.3M109.1 46.5l1.2 0.5M111.8 47.6l2.1 0.8M-3.5 63.6l-1.7 0.8M-7.3 65.3l-2.9 1.3M38.2 3.8l-0.8 -0.8M35.9 2.5l-1.4 -1.3M109.3 62.2l1.7 1.3M111.6 64.1l1.9 1.4M106.1 43.7l1.7 0.5M132.9 76.5l2.0 1.4M136.2 78.7l2.3 1.6M32.8 34.8l-1.7 0.2M135.5 -7.4l1.4 -0.8M138.8 -8.7l2.1 -1.2M118.8 30.8l1.5 -0.0M121.2 30.8l1.4 -0.0M45.1 69.2l-0.9 1.5M36.3 0.9l-1.0 -1.0M34.6 -0.9l-1.3 -1.3M139.2 -3.7l1.9 -0.9M143.5 -5.7l3.1 -1.5M143.3 54.9l2.2 0.7M99.4 20.7l1.0 -0.3M101.3 19.9l1.4 -0.5M35.3 60.0l-1.1 1.0M110.9 71.6l1.3 1.2M112.7 73.9l1.5 1.4M-5.1 23.9l-2.4 -0.2M40.1 -5.6l-1.2 -1.7M58.4 5.5l-0.4 -1.2M50.9 56.0l-1.1 1.7M121.9 5.1l1.1 -0.5M12.1 23.9l-2.1 -0.3M1.0 57.7l-2.5 1.0M-2.1 59.5l-2.3 0.9M-5.4 60.8l-1.7 0.7M34.4 73.6l-0.9 1.1M39.2 21.7l-1.7 -0.6"/>
<path stroke="#182446" stroke-width="1.0" stroke-opacity=".95" d="M68.4 41.1l0.0 2.6M82.0 31.4l2.5 -0.2M70.2 17.4l0.4 -3.0M28.9 27.7l-5.0 -0.7M114.3 37.2l5.2 0.5M122.9 16.5l6.8 -2.0M80.4 0.3l2.0 -5.3M50.7 30.2l-2.9 -0.5M62.0 47.8l-1.0 2.7M6.5 83.2l-8.9 7.3M23.3 56.7l-6.1 3.3M80.4 1.5l1.7 -4.2M38.5 13.2l-4.9 -3.3M40.1 53.4l-3.5 2.6M69.9 24.7l0.4 -2.0M21.6 80.0l-5.7 5.8M97.4 3.5l4.1 -4.1M57.6 48.9l-2.0 3.2M90.8 17.6l3.1 -2.1M1.2 65.9l-7.5 3.7M99.7 65.8l4.0 4.4M70.9 28.5l1.1 -1.4M70.6 43.6l0.5 2.8M46.1 48.6l-3.5 2.6M79.9 43.8l2.3 1.9M133.1 56.3l9.1 3.2M48.6 82.9l-2.4 6.3M41.3 81.7l-4.1 7.4M74.1 18.0l1.3 -2.9M99.1 30.4l5.4 -0.4M91.3 28.7l3.4 -0.6M104.3 64.7l5.2 4.4M108.7 31.4l5.7 -0.2M122.9 81.3l8.5 7.4M40.8 68.5l-4.5 5.9M139.0 49.9l10.3 2.5M12.7 11.3l-7.2 -2.9M39.6 60.0l-3.7 3.6M127.3 39.4l7.9 0.8M65.5 28.1l-0.9 -1.4M84.4 22.2l2.7 -1.7M133.0 40.0l8.6 0.9M108.2 55.6l4.7 2.6M22.3 56.0l-7.1 3.7M90.1 82.3l3.5 8.1M24.2 33.0l-5.1 0.0M123.1 43.8l8.9 1.7M49.7 25.6l-3.6 -1.5M100.1 19.0l4.7 -2.0M34.9 65.4l-5.1 5.1M71.9 5.5l0.5 -3.6M136.6 71.1l9.2 5.1M90.4 52.1l4.1 3.3M57.7 34.1l-2.4 0.4M21.9 25.0l-7.3 -1.2M-1.3 30.3l-9.0 -0.3M56.0 13.6l-1.8 -2.6M95.5 28.5l5.0 -0.8M80.6 32.3l3.0 -0.1M84.0 23.4l3.0 -1.7M54.7 41.6l-2.4 1.7M117.2 31.9l8.1 -0.2M48.7 20.5l-2.7 -1.8M87.0 41.9l3.6 1.7M8.0 66.7l-7.0 4.0M101.2 24.4l4.5 -1.1M32.2 27.3l-5.6 -0.9M62.6 36.0l-1.7 1.1M124.1 78.8l6.7 5.3M47.8 60.6l-3.0 4.1M48.6 28.8l-3.4 -0.7M130.0 -0.6l8.5 -4.5M115.1 54.8l6.8 3.1M78.7 26.1l2.0 -1.2M60.9 73.3l-1.0 5.6M36.5 69.2l-4.9 5.7M69.0 61.9l0.2 5.3M3.5 -4.0l-6.8 -3.9M47.1 5.5l-3.4 -4.1M103.2 11.2l5.6 -3.3M7.8 17.7l-8.1 -2.1M124.1 18.1l6.1 -1.6M78.9 52.2l1.6 3.2M17.6 48.9l-6.0 1.9M63.4 37.4l-1.3 1.4M135.6 58.8l8.1 3.1M114.0 66.7l6.7 4.9M43.9 -1.9l-3.0 -4.1M13.8 74.4l-7.2 5.6M110.6 51.5l5.4 2.3M129.8 30.0l7.0 -0.3M137.5 6.7l7.2 -2.7M6.0 64.4l-7.1 3.6M42.5 40.4l-4.4 1.3M-0.3 59.3l-10.3 4.1M1.1 64.7l-10.4 5.0M139.2 76.5l7.4 4.5M-6.9 21.5l-9.1 -1.4M100.3 38.8l4.0 0.7M69.8 81.6l0.3 7.9M94.5 52.2l4.7 3.3M-0.4 66.8l-8.3 4.2M41.3 35.9l-3.9 0.5M45.9 5.7l-3.3 -3.8M114.3 60.9l7.6 4.5M73.1 42.4l1.1 2.3M45.2 0.7l-3.1 -4.1M79.5 79.6l1.3 5.8M46.3 62.7l-3.0 4.1M79.9 74.4l1.9 6.8M41.0 29.1l-4.0 -0.5M50.0 45.7l-3.1 2.2M115.3 78.8l7.0 7.0M134.5 54.0l7.7 2.4M31.1 47.9l-5.0 2.1M107.4 34.8l6.0 0.3M110.0 79.2l4.7 5.3M78.0 72.0l1.2 4.8M31.4 44.3l-4.7 1.5M101.5 74.0l4.3 5.5M57.6 46.9l-2.2 3.0M37.8 74.8l-4.8 6.8M60.7 72.3l-1.0 5.5M88.0 55.2l2.9 3.5M16.2 80.8l-6.7 6.3M55.1 58.4l-2.0 4.1M134.1 46.9l9.5 2.0M82.3 28.2l3.1 -0.9M83.7 37.9l3.4 1.1M4.5 40.5l-7.2 0.9M3.8 53.9l-8.5 2.8M102.8 -0.2l5.8 -5.4M62.7 59.1l-0.8 3.8M88.3 73.1l2.8 5.9M44.0 57.8l-3.5 3.8M76.3 64.0l1.2 4.8M3.3 49.0l-7.8 2.0M18.9 80.3l-6.6 6.5M69.4 59.2l0.2 4.4M65.9 12.0l-0.4 -3.2M93.3 65.6l3.5 4.7M23.5 80.6l-6.8 7.4M140.8 9.6l11.3 -3.6M120.2 1.7l8.2 -4.8M76.0 68.8l1.0 4.9M25.1 9.1l-6.6 -3.7M129.0 79.5l8.8 6.6M116.7 54.3l7.3 3.1M102.9 75.9l3.9 4.9M101.8 34.4l4.3 0.2M21.5 44.8l-6.6 1.7M98.8 43.2l4.0 1.3M96.1 -4.5l3.2 -4.2M50.0 50.9l-3.3 3.3M72.4 37.8l1.5 1.3M33.1 34.3l-5.4 0.2M62.1 30.4l-1.6 -0.8M63.2 42.3l-1.0 2.1M29.4 49.4l-6.3 2.7M91.1 64.7l3.0 4.3M2.6 44.8l-9.0 1.7M117.7 -5.8l5.6 -4.3M53.7 39.7l-2.6 1.3M60.2 13.1l-1.3 -3.0M56.4 50.8l-1.9 3.0M91.5 18.7l4.2 -2.5M74.8 33.1l2.1 0.1M33.0 40.7l-5.7 1.3M141.2 63.2l10.7 4.4M68.3 36.9l-0.0 1.9M20.6 -4.0l-5.3 -4.2M83.3 54.3l2.8 4.2M117.6 63.6l5.7 3.5M12.4 78.6l-7.1 6.0M56.7 -2.7l-1.4 -4.2M6.4 19.4l-7.3 -1.6M114.7 11.5l5.2 -2.4M115.0 0.6l5.0 -3.4M56.0 34.0l-2.6 0.3M142.2 3.9l8.2 -3.2M52.3 2.0l-2.0 -3.9M60.3 0.1l-1.3 -5.4M61.6 1.1l-0.9 -4.1M11.6 72.1l-6.8 4.8M-2.5 34.3l-9.8 0.2M31.6 54.5l-5.5 3.4M65.9 47.1l-0.5 3.3M88.9 59.4l3.2 4.3M48.4 16.5l-2.5 -2.2M106.1 37.2l6.2 0.7M78.9 21.2l2.4 -2.5M82.1 43.4l2.4 1.7M16.4 10.3l-7.4 -3.3M76.7 22.0l1.6 -2.0M130.0 15.2l9.4 -2.6M51.1 84.1l-2.8 8.4M28.4 14.2l-5.1 -2.5M115.0 32.8l6.7 -0.0M104.5 72.6l5.7 6.5M124.0 41.0l6.1 0.9M90.6 5.7l3.0 -3.5M110.0 60.0l6.4 4.1M125.5 40.2l8.9 1.2M81.4 40.1l2.4 1.2M57.8 56.5l-1.8 4.1M61.8 35.7l-1.7 0.9M-0.1 63.8l-9.9 4.5M23.6 35.9l-5.1 0.3M0.8 15.7l-9.7 -2.5M50.6 38.5l-3.6 1.2M83.7 -1.1l2.1 -4.5M23.9 48.9l-5.8 2.1M30.2 4.4l-5.9 -4.6M1.8 74.2l-8.1 5.1M100.1 7.3l4.3 -3.4M18.1 67.7l-5.8 4.1M102.4 31.1l4.2 -0.2M16.2 51.0l-8.2 2.9M74.8 54.3l1.3 4.3M36.8 53.4l-3.7 2.5M98.3 25.1l4.6 -1.1M-0.1 -0.7l-8.2 -4.1M93.2 2.8l3.2 -3.8M5.6 4.4l-9.1 -4.2M130.0 21.3l7.3 -1.3M25.0 23.1l-6.6 -1.5M49.1 8.4l-3.0 -3.6M-7.4 33.9l-10.9 0.2M27.8 43.5l-5.1 1.4M81.5 75.2l1.6 5.4M-5.6 41.0l-10.2 1.1M44.0 15.1l-4.1 -3.1M93.8 25.4l4.1 -1.1M59.4 68.5l-1.3 5.4M36.6 3.2l-4.6 -4.5M140.9 -3.4l10.8 -5.3M98.5 22.4l4.9 -1.7M16.9 33.3l-6.4 0.1M67.8 43.5l-0.1 2.4M80.6 79.6l1.9 7.4M121.6 67.5l7.4 4.7M68.9 31.2l1.0 -1.1M52.0 11.3l-2.6 -3.3M112.7 49.5l7.2 2.6M20.7 60.7l-5.3 3.1M56.9 28.6l-2.4 -1.0M83.6 33.3l3.6 0.1M83.4 25.0l3.2 -1.6M122.3 61.1l8.7 4.5M80.9 52.6l2.2 3.6M93.8 45.1l4.0 1.8M77.0 29.8l2.1 -0.6M66.5 73.0l-0.3 5.7M0.3 36.2l-6.9 0.4M130.0 44.5l8.3 1.5M120.9 7.6l6.3 -3.0M73.4 39.3l1.8 1.7M138.4 61.0l8.0 3.2M38.3 78.3l-4.6 7.2M14.5 59.9l-5.6 2.9M67.6 67.6l-0.1 5.3M86.3 7.1l2.9 -4.0M77.8 41.8l2.2 1.8M58.0 36.7l-2.3 1.0M131.8 39.4l7.2 0.7M76.4 82.6l1.2 7.4M32.0 64.5l-5.6 5.0M121.4 28.6l6.7 -0.5M11.0 24.8l-9.1 -1.3M5.0 54.1l-8.0 2.7M141.8 29.3l9.0 -0.4M142.9 0.1l10.6 -4.6M19.9 74.8l-5.5 4.8"/>
<path stroke="#b9ac72" stroke-width="1.2" stroke-opacity=".95" d="M66.5 40.9l0.0 1.1M75.6 60.1l0.3 1.1M114.5 42.2l1.7 0.4M16.4 29.0l-1.3 -0.1M29.7 77.2l-1.2 1.5M39.2 51.6l-1.2 0.9M134.7 63.0l2.0 0.9M129.7 53.3l2.8 1.0M6.6 45.1l-2.3 0.5M35.9 28.8l-2.2 -0.2M2.9 3.9l-1.4 -0.6M88.3 82.0l0.7 1.6M36.8 48.5l-1.8 1.0M99.0 17.8l0.8 -0.3M49.2 27.3l-1.4 -0.3M136.7 42.6l2.1 0.3M46.1 7.1l-1.0 -1.3M86.3 62.0l0.6 0.9M35.0 10.6l-1.6 -1.0M6.0 62.6l-1.9 1.0M49.3 44.1l-1.3 1.0M82.2 49.9l0.9 1.0M21.3 68.0l-1.4 1.1M69.1 74.0l0.1 1.0M-5.2 37.5l-1.8 0.2M130.8 45.7l1.8 0.4M77.4 65.3l0.5 1.6M74.5 68.6l0.3 1.5M96.1 77.7l1.0 1.5M20.4 47.9l-1.2 0.4M-4.1 12.5l-2.5 -0.6M4.1 25.3l-1.6 -0.2M120.4 68.7l2.2 1.6M83.0 41.8l1.1 0.8M48.0 74.9l-0.6 1.5M139.4 11.9l1.8 -0.5M104.4 22.7l1.2 -0.3M123.5 23.8l2.2 -0.3M22.2 34.0l-1.4 0.1M12.5 35.6l-2.2 0.2M82.7 -3.9l0.7 -1.6M79.7 75.1l0.4 1.3M125.3 6.6l1.1 -0.5M-2.6 50.1l-1.7 0.4M111.8 53.5l1.3 0.7M85.4 20.9l1.0 -0.6M112.4 47.9l1.5 0.6M14.3 30.1l-2.4 -0.1M138.0 33.6l2.2 0.1M27.1 6.1l-0.9 -0.6M5.4 52.3l-1.5 0.5M2.2 53.1l-2.3 0.8"/>
<path stroke="#b9ac72" stroke-width="0.8" stroke-opacity=".95" d="M67.2 42.4l0.0 0.8M65.0 8.2l-0.1 -1.7M12.1 63.7l-2.1 1.2M9.0 65.2l-1.3 0.8M76.2 61.9l0.4 1.4M116.8 42.8l1.7 0.4M13.8 29.0l-1.9 -0.1M27.5 79.8l-0.9 1.1M15.7 14.5l-2.4 -0.8M12.4 13.5l-1.4 -0.5M37.6 53.6l-1.3 1.0M96.3 3.2l1.2 -1.2M137.7 64.9l1.5 0.7M140.9 66.2l2.0 1.0M81.0 13.4l0.6 -0.8M82.6 12.3l0.5 -0.6M120.9 60.7l1.5 0.8M94.9 42.9l1.0 0.4M96.6 44.0l0.8 0.4M133.3 55.1l2.1 0.8M44.9 59.2l-0.9 1.1M43.2 60.8l-1.0 1.2M63.8 48.6l-0.2 1.1M63.6 50.2l-0.1 0.7M38.2 53.1l-1.6 1.2M3.2 45.9l-2.4 0.5M90.1 85.0l0.7 1.6M100.9 17.0l1.0 -0.4M76.8 55.2l0.4 1.0M49.5 19.7l-1.0 -0.7M14.5 70.7l-2.2 1.6M11.3 73.3l-1.4 1.1M8.2 65.2l-2.1 1.2M5.6 67.1l-1.2 0.7M100.5 23.1l1.2 -0.3M47.2 27.0l-1.1 -0.2M131.4 62.0l1.4 0.7M133.9 63.7l1.1 0.6M97.9 10.9l1.2 -0.8M100.2 9.6l1.1 -0.7M119.3 -0.1l1.3 -0.8M140.1 42.8l1.8 0.3M143.3 44.0l2.3 0.4M11.6 47.1l-1.7 0.5M8.3 48.5l-1.4 0.4M45.1 5.2l-0.8 -0.9M43.6 3.8l-1.0 -1.2M88.1 63.6l1.0 1.6M89.1 65.8l0.9 1.3M98.5 4.3l0.8 -0.7M100.0 3.0l1.1 -1.0M101.6 1.7l0.8 -0.7M132.4 20.4l2.7 -0.5M62.5 36.6l-1.1 1.2M43.1 -0.6l-0.9 -1.2M42.0 -2.3l-0.8 -1.2M32.8 9.5l-1.6 -1.0M30.6 8.6l-1.2 -0.7M53.1 43.9l-0.7 0.6M3.2 63.9l-1.8 0.9M0.8 65.8l-1.3 0.7M1.5 62.7l-2.2 1.1M-2.4 64.9l-2.8 1.3M-6.5 66.7l-2.6 1.3M114.5 48.7l1.9 0.7M116.9 49.9l1.0 0.4M73.9 53.0l0.3 0.9M22.3 27.9l-1.3 -0.1M19.6 27.7l-1.7 -0.1M120.1 65.8l1.6 1.0M47.5 45.5l-0.9 0.6M2.5 35.4l-1.7 0.1M-0.6 35.2l-2.4 0.1M70.5 52.8l0.2 1.3M40.1 27.4l-1.4 -0.2M104.3 45.7l0.8 0.3M106.2 46.1l1.2 0.4M18.6 70.4l-2.1 1.7M69.4 76.5l0.1 1.6M6.3 35.3l-2.8 0.2M-9.6 38.5l-2.1 0.2M-14.1 38.6l-1.9 0.2M133.7 47.0l1.6 0.4M2.7 16.4l-2.5 -0.6M18.3 17.4l-1.0 -0.3M119.2 49.8l1.2 0.4M121.3 50.9l1.6 0.6M124.4 -4.0l1.4 -0.8M127.8 -5.6l2.0 -1.2M37.5 42.7l-1.0 0.4M74.7 70.5l0.2 1.0M97.8 79.4l0.9 1.5M18.4 48.9l-1.0 0.4M16.4 49.7l-0.9 0.3M33.6 32.8l-1.0 0.0M31.5 32.7l-0.9 0.0M29.4 32.8l-1.7 0.1M15.0 21.4l-1.9 -0.4M12.5 21.0l-1.8 -0.3M9.9 20.6l-1.9 -0.4M12.7 39.4l-1.9 0.3M9.5 40.5l-1.5 0.2M28.0 53.5l-1.2 0.7M25.6 55.1l-1.9 1.1M-7.8 12.1l-1.9 -0.5M111.5 64.4l1.0 0.8M0.8 24.9l-2.6 -0.3M12.6 77.2l-1.7 1.4M109.7 77.7l1.3 1.4M111.7 79.7l0.9 1.0M20.8 5.3l-1.4 -0.8M18.4 4.6l-1.4 -0.7M16.4 3.4l-0.9 -0.5M59.1 1.0l-0.3 -1.3M58.8 -1.1l-0.4 -1.4M74.9 78.1l0.3 1.7M75.4 81.1l0.2 1.3M111.6 26.4l1.8 -0.2M113.9 26.1l1.1 -0.1M77.5 30.7l0.6 -0.0M61.4 24.9l-0.7 -0.9M123.2 70.7l2.0 1.4M119.0 56.6l2.4 1.2M121.6 36.3l0.9 0.1M123.9 36.2l1.4 0.1M50.1 82.8l-0.5 1.6M48.6 85.9l-0.8 2.5M-5.3 11.2l-2.4 -0.7M-8.6 10.2l-1.4 -0.4M29.4 13.5l-1.3 -0.6M27.5 12.4l-0.9 -0.4M46.8 77.3l-0.8 1.9M142.6 11.5l1.7 -0.4M53.4 62.3l-0.6 1.4M114.3 31.3l1.5 -0.0M116.9 31.3l1.4 -0.0M106.7 22.4l1.4 -0.3M109.1 21.7l1.5 -0.3M82.5 53.5l0.8 1.1M83.9 55.1l0.8 1.1M124.7 38.6l2.7 0.4M25.8 68.7l-0.8 0.8M24.3 70.5l-0.8 0.8M24.0 34.4l-1.5 0.1M22.0 34.4l-1.3 0.1M20.1 34.6l-1.2 0.1M86.1 17.8l1.2 -0.9M1.9 72.4l-1.6 1.0M-1.0 74.8l-1.9 1.2M82.3 71.2l0.5 1.3M83.0 73.1l0.3 0.8M19.2 34.3l-1.7 0.1M9.2 36.2l-1.6 0.1M5.8 36.9l-2.5 0.2M55.3 9.2l-0.5 -1.0M80.5 77.1l0.4 1.2M127.8 5.4l1.5 -0.6M130.6 4.6l2.1 -0.9M-6.6 51.2l-2.6 0.7M58.4 67.6l-0.3 1.4M56.9 82.6l-0.5 2.4M56.2 85.7l-0.4 2.2M17.6 32.0l-1.1 0.0M15.1 31.8l-1.1 0.0M114.3 54.6l1.8 0.9M66.3 59.4l-0.0 1.3M10.9 30.0l-2.7 -0.1M7.5 30.0l-2.4 -0.1M79.6 52.9l0.7 1.1M142.1 34.3l1.8 0.1M71.6 20.1l0.3 -0.9M140.8 77.2l1.3 0.8M143.9 79.4l2.4 1.5M131.2 37.8l1.5 0.2M133.9 38.4l1.8 0.2M25.5 4.6l-0.9 -0.6M23.5 3.9l-1.4 -0.9M3.7 -3.2l-2.3 -1.3M11.1 81.7l-1.2 1.1M8.9 83.8l-1.2 1.1"/>
<path stroke="#22315a" stroke-width="1.0" stroke-opacity=".95" d="M138.5 -3.0l9.2 -4.6M18.6 -1.6l-5.9 -4.2M81.1 24.3l3.0 -1.8M138.5 22.0l10.0 -1.5M114.9 43.6l5.8 1.3M119.8 43.6l6.3 1.3M4.8 12.3l-6.5 -2.1M56.1 83.0l-1.6 6.6M134.2 8.7l7.5 -2.7M62.0 35.2l-1.8 0.9M88.4 1.0l3.6 -5.5M48.8 73.1l-3.2 6.7M126.5 24.0l6.2 -0.9M14.4 15.3l-8.4 -2.8M67.7 71.4l-0.1 4.8M137.7 1.3l9.6 -4.3M119.6 38.9l6.9 0.8M39.4 26.4l-4.1 -0.9M6.8 72.1l-6.7 4.3M74.1 29.4l1.9 -1.0M61.2 6.2l-1.1 -4.0M61.9 65.4l-1.1 5.8M121.0 62.1l6.7 3.7M85.3 32.1l3.3 -0.1M57.3 23.6l-1.9 -1.8M88.7 38.2l3.4 0.9M125.7 15.6l8.5 -2.5M126.9 49.4l6.3 1.7M61.4 22.5l-1.6 -2.1M33.2 -0.2l-4.3 -4.2M115.2 16.5l6.8 -2.3M70.5 43.4l0.5 2.4M98.1 51.5l3.9 2.3M110.8 83.6l6.8 8.3M94.6 45.0l4.7 2.0M90.4 29.7l4.3 -0.5M48.6 44.7l-3.8 2.3M81.3 32.6l2.6 0.0M86.5 32.8l3.0 0.0M38.4 63.9l-4.7 5.1M104.5 80.8l3.9 5.4M94.3 6.2l3.8 -3.8M68.5 40.6l0.0 2.5M42.3 37.5l-4.1 0.7M53.6 37.6l-2.8 1.0M2.0 10.9l-9.5 -3.2M72.9 28.4l1.5 -1.4M75.8 34.0l2.1 0.3M37.0 49.6l-4.1 2.3M98.4 13.1l5.0 -3.1M136.4 57.2l10.9 3.8M49.2 16.6l-3.3 -3.0M58.5 30.9l-2.0 -0.5M64.0 24.4l-1.1 -2.0M97.4 74.8l4.6 6.8M137.5 16.8l11.0 -2.5M-2.2 6.7l-10.4 -3.9M136.7 79.1l7.9 5.3M65.9 40.7l-0.7 2.4M62.6 67.3l-0.8 4.7M141.6 38.4l10.4 0.8M61.0 39.5l-1.8 1.8M77.1 31.2l2.6 -0.4M78.0 55.0l1.4 3.2M107.8 61.3l5.6 4.0M63.4 34.8l-1.5 0.8M129.5 43.2l9.1 1.5M73.0 20.2l1.0 -2.5M101.2 65.2l5.6 5.4M57.6 62.2l-1.7 4.9M89.4 -1.8l3.5 -5.5M79.4 29.3l2.9 -0.8M81.2 33.3l2.7 0.1M129.8 61.6l9.2 4.2M71.9 44.2l0.8 2.6M82.2 20.9l2.9 -2.4M72.5 36.9l1.3 1.7M16.3 76.3l-6.6 5.6M103.1 14.1l4.2 -2.2M56.1 31.6l-2.8 -0.3M25.6 5.0l-6.7 -4.5M-5.2 52.5l-8.6 2.3M16.4 71.7l-6.9 5.3M49.1 2.2l-3.1 -4.7M99.2 11.5l5.4 -3.7M137.4 44.1l8.5 1.4M11.0 48.6l-8.7 2.5M15.4 27.2l-6.3 -0.7M-0.2 27.7l-8.5 -0.7M49.0 55.6l-3.1 3.8M13.0 8.7l-8.1 -3.6M-4.7 82.6l-10.1 7.0M-6.5 20.5l-11.1 -1.9M26.1 40.3l-7.0 1.3M99.8 4.9l3.9 -3.4M128.0 73.6l6.6 4.4M119.5 32.0l6.3 -0.1M53.6 44.9l-2.4 2.1M7.2 13.5l-9.1 -2.9M0.5 82.2l-7.0 5.1M75.6 57.4l1.1 3.8M48.8 28.6l-3.6 -0.8M142.6 17.1l9.0 -1.9M77.9 26.5l2.0 -1.2M44.4 18.4l-3.2 -2.1M62.5 45.2l-1.1 2.7M21.5 28.8l-7.1 -0.6M15.9 4.8l-6.7 -3.7M52.8 35.2l-3.0 0.5M96.7 1.0l4.7 -5.2M55.4 76.4l-1.9 6.5M64.2 52.1l-0.8 3.9M100.0 14.0l5.3 -3.1M133.6 36.4l9.9 0.5M71.8 52.9l0.7 4.0M3.6 84.3l-7.9 6.3M123.6 80.4l6.3 5.3M83.6 49.1l3.0 3.5M3.3 79.4l-10.0 7.3M14.1 51.6l-6.5 2.3M110.1 6.4l4.6 -2.9M125.2 28.7l8.4 -0.6M126.5 56.1l8.1 3.2M4.3 47.4l-9.3 2.1M137.4 13.1l10.4 -2.9M46.2 77.9l-3.4 7.2M60.5 45.1l-1.3 2.3M71.7 31.8l1.9 -0.4M69.1 52.8l0.1 3.6M41.0 2.6l-4.2 -4.5M24.7 1.5l-5.3 -4.0M21.4 64.2l-5.7 3.8M106.8 -1.3l5.0 -4.3M61.0 36.0l-1.8 0.9M134.0 24.9l9.1 -1.1M135.6 13.6l10.4 -3.0M33.2 34.5l-4.2 0.2M49.9 -1.7l-2.7 -4.9M73.1 24.7l1.2 -1.7M44.9 7.6l-3.5 -3.6M70.7 25.5l0.8 -1.9M47.1 -6.5l-2.5 -4.5M58.6 32.4l-2.3 -0.1M101.6 -6.3l5.2 -6.0M73.8 26.0l1.7 -1.8M130.2 73.1l8.5 5.4M5.2 25.0l-7.6 -1.0M112.3 40.2l5.5 0.9M112.6 30.6l5.5 -0.2M131.2 47.7l7.8 1.8M126.1 66.4l7.5 4.3M26.9 59.2l-6.8 4.4M83.6 57.3l2.3 3.8M50.2 74.1l-2.1 4.9M126.1 -3.2l8.1 -5.0M79.1 65.2l1.4 4.4M94.7 59.4l4.3 4.2M37.4 44.1l-4.9 1.9M92.3 55.4l3.0 3.0M9.7 41.3l-6.4 1.0M134.4 47.0l10.1 2.1M89.9 70.9l3.1 5.6M71.1 26.8l0.8 -1.6M37.4 42.0l-4.4 1.3M98.0 77.3l3.3 5.1M1.6 35.7l-9.8 0.4M61.1 29.3l-1.6 -1.0M47.8 14.1l-2.8 -2.7M56.0 71.2l-1.9 6.1M10.4 26.0l-8.4 -1.0M25.4 25.5l-6.1 -1.1M117.5 74.7l7.3 6.0M123.3 2.7l6.8 -3.7M125.3 72.2l8.5 5.8M-4.2 56.0l-8.2 2.7M69.8 3.2l0.3 -5.0M110.9 35.6l5.6 0.4M86.6 40.1l3.9 1.4M81.7 44.5l2.8 2.3M90.1 46.3l3.9 2.3M1.7 21.6l-6.9 -1.2M123.5 48.9l7.4 2.1M54.7 30.3l-2.4 -0.5M12.0 41.2l-8.5 1.3M135.0 11.8l7.0 -2.2M55.2 15.3l-1.9 -2.4M43.2 33.1l-3.6 0.0M89.4 15.2l3.3 -2.7M130.8 68.4l8.7 4.9M86.0 29.2l3.3 -0.6M89.5 30.5l4.3 -0.4M111.5 65.6l5.4 4.0M48.7 28.8l-2.9 -0.6M-0.4 48.4l-10.3 2.4M-4.5 8.9l-10.7 -3.6M75.3 31.9l2.3 -0.3M130.0 53.9l8.7 2.9M32.4 82.3l-4.3 6.0M95.4 18.6l3.6 -1.8M6.5 66.6l-7.0 3.9M4.0 7.4l-7.6 -3.0M91.0 23.5l4.1 -1.6M122.4 74.1l7.8 5.8M74.1 -6.2l0.9 -5.6M66.6 8.8l-0.2 -3.4M137.8 63.2l8.2 3.5M15.7 -1.7l-6.8 -4.6M72.4 14.0l0.7 -2.9M1.9 42.4l-9.7 1.5M104.4 6.3l6.1 -4.3M70.3 19.7l0.4 -2.5M97.9 72.0l4.0 5.5M142.9 47.2l9.9 1.9M38.5 50.7l-4.5 2.8M98.7 83.5l4.5 7.7M76.2 78.7l1.3 7.6M95.3 82.3l4.2 7.8M33.9 -6.7l-3.7 -4.1M112.4 27.4l6.1 -0.7M77.5 29.2l2.2 -0.8M84.7 65.2l2.7 5.4M133.8 35.5l9.4 0.4M120.1 70.8l7.2 5.2M134.9 83.9l9.6 7.2M114.3 18.0l6.9 -2.2M54.2 49.5l-2.3 2.8M5.7 55.4l-8.3 3.0M54.8 22.0l-2.3 -2.0M95.0 32.9l4.5 0.0M10.2 34.5l-8.7 0.3M42.4 51.8l-3.4 2.6M6.8 28.7l-9.4 -0.6M73.1 9.7l0.9 -4.1M122.1 37.7l6.0 0.5M66.6 41.7l-0.4 2.3M54.4 63.3l-1.9 4.4M26.6 -2.7l-5.9 -5.2M26.5 -2.1l-4.9 -4.2M101.0 70.1l4.6 5.4M125.6 17.1l8.1 -2.2M14.0 57.5l-8.2 3.8M90.7 38.5l3.7 0.9M9.9 73.9l-7.7 5.5M105.4 24.1l6.0 -1.4M-1.2 57.2l-10.1 3.6M66.2 21.8l-0.4 -2.2M106.0 45.3l5.6 1.8M42.2 20.1l-3.9 -2.0M93.8 78.1l4.2 7.5M73.2 41.0l1.1 2.1M110.1 16.5l5.7 -2.2M26.3 70.2l-4.5 4.0M22.1 16.5l-7.3 -2.6M90.0 47.4l3.9 2.5M35.5 17.9l-4.8 -2.3M52.7 21.6l-2.8 -2.2M89.1 9.9l2.9 -3.1M108.2 24.3l5.8 -1.2M12.6 66.3l-6.4 3.9M23.3 11.6l-6.7 -3.3M128.5 26.5l7.5 -0.8M60.4 34.1l-2.2 0.4M13.3 45.2l-7.2 1.7M11.8 37.6l-8.8 0.7M83.1 61.8l2.0 4.1M84.0 -4.0l2.4 -5.4M73.4 37.6l1.5 1.7M32.3 36.1l-6.1 0.6M134.1 -4.5l8.1 -4.6M23.8 69.2l-6.4 5.4M119.5 31.9l6.1 -0.1M46.0 70.6l-3.2 5.5M34.2 77.8l-3.9 5.2M97.2 6.1l5.1 -4.5M3.0 5.4l-8.3 -3.5M37.7 60.2l-4.4 4.0M116.7 21.9l6.5 -1.4M80.4 5.9l2.1 -4.6M40.5 -6.9l-4.3 -6.0M67.0 77.7l-0.1 5.2M86.3 22.0l2.9 -1.6M52.5 80.1l-2.0 6.2M134.8 31.0l8.2 -0.2M123.3 9.5l7.6 -3.2M69.3 49.1l0.2 3.1M46.0 24.3l-3.9 -1.6M34.9 33.3l-5.6 0.1M102.2 41.9l5.1 1.3M141.1 78.8l8.2 5.1M91.5 58.9l3.9 4.5M141.6 46.6l9.0 1.7M54.9 -3.8l-2.3 -6.0M73.7 5.3l0.7 -3.6M76.3 37.6l2.2 1.2M135.0 75.4l7.7 4.8M18.8 11.1l-7.9 -3.5M76.6 8.6l1.5 -4.0M25.9 6.9l-4.6 -2.9M60.7 22.4l-1.6 -1.8M115.6 8.8l6.2 -3.1M65.3 44.5l-0.6 2.5M70.0 77.8l0.2 5.5M15.6 37.0l-5.9 0.5M37.5 83.9l-3.3 5.5M71.2 8.3l0.6 -4.6M117.8 24.3l7.9 -1.3M81.4 -4.5l2.3 -6.3M87.8 35.4l3.8 0.5M2.2 -2.9l-9.8 -5.3M-4.5 69.1l-8.0 4.0M-6.3 28.5l-10.2 -0.6M27.7 42.2l-4.7 1.1M11.4 83.4l-5.9 5.3"/>
<path stroke="#e8e6d4" stroke-width="1.2" stroke-opacity=".95" d="M136.8 -4.0l2.4 -1.2M73.8 39.3l0.5 0.5M79.0 17.4l0.8 -0.9M40.1 80.0l-0.9 1.7M124.3 14.3l2.3 -0.7M34.7 -0.9l-0.7 -0.7M139.1 68.4l2.8 1.5M24.7 31.7l-1.2 0.0M64.3 31.9l-1.0 0.2M110.7 32.6l1.3 0.0M58.4 3.9l-0.4 -1.5M71.7 42.7l0.3 0.8M-3.5 0.3l-2.6 -1.1M85.7 8.6l0.8 -1.0M72.2 35.1l0.7 0.6M135.2 10.5l1.9 -0.6M132.8 17.4l1.8 -0.4M93.2 -4.7l0.6 -0.9M139.1 8.6l2.4 -0.8M48.9 72.9l-0.5 1.0M118.8 75.7l1.2 1.1M121.2 77.9l1.4 1.2M53.3 38.3l-0.7 0.3M90.2 17.5l0.8 -0.5M103.5 30.8l1.3 -0.0M93.9 65.8l0.6 0.7M60.6 12.4l-0.3 -0.9M10.8 4.9l-1.5 -0.7M71.1 39.1l1.0 1.6M60.1 32.8l-1.4 0.2M65.7 49.9l-0.1 1.0M66.2 36.3l-0.1 1.2M83.2 24.4l1.0 -0.4M78.7 5.7l0.6 -1.3M79.6 3.9l0.4 -0.8M58.1 26.8l-1.3 -0.7M53.7 -2.6l-0.7 -1.8M52.5 -4.9l-0.6 -1.7M114.3 8.0l1.2 -0.6M120.5 26.8l2.0 -0.2"/>
<path stroke="#e8e6d4" stroke-width="0.8" stroke-opacity=".95" d="M140.5 -5.4l2.8 -1.4M144.0 -7.4l2.6 -1.3M84.3 -0.1l0.9 -1.6M85.5 -2.0l0.6 -1.2M121.8 15.3l1.5 -0.4M124.6 15.0l2.0 -0.6M41.1 32.6l-1.4 0.1M80.9 16.5l0.8 -0.9M41.2 -2.5l-0.6 -0.9M40.2 -4.5l-0.7 -0.9M39.3 -6.5l-0.8 -1.1M115.4 25.3l1.2 -0.1M38.9 83.1l-1.0 1.8M127.6 13.2l2.6 -0.8M131.0 12.5l2.1 -0.6M72.6 17.6l0.4 -0.9M33.0 -2.5l-1.0 -1.0M31.3 -4.0l-1.1 -1.1M104.4 25.7l1.5 -0.2M143.0 70.4l2.5 1.3M64.6 28.7l-0.8 -1.1M71.9 27.2l1.2 -1.1M22.7 31.8l-1.3 0.0M58.8 29.5l-1.0 -0.2M116.1 32.8l1.1 0.0M118.7 33.3l1.8 0.1M113.1 32.6l1.6 0.0M115.5 32.8l1.3 0.0M64.3 40.0l-0.2 0.6M64.3 41.5l-0.3 1.0M81.0 32.0l1.2 0.0M70.4 44.4l0.3 1.0M70.9 45.9l0.3 1.0M141.8 5.4l2.5 -0.9M145.1 4.2l2.2 -0.8M102.1 13.1l1.6 -0.8M23.6 -5.7l-1.3 -1.1M21.8 -7.6l-0.8 -0.7M74.2 57.5l0.3 0.9M58.2 1.1l-0.4 -1.3M72.4 44.1l0.4 1.0M45.2 61.2l-0.9 1.2M44.1 62.9l-0.7 1.0M63.3 28.5l-1.3 -0.9M97.2 9.5l1.1 -0.8M-7.0 -1.4l-2.1 -0.9M86.9 7.1l1.0 -1.2M16.1 79.2l-1.2 1.1M108.7 5.3l1.2 -0.8M110.6 4.2l1.4 -0.9M136.3 16.9l2.1 -0.4M71.6 30.8l1.0 -0.2M73.9 27.0l1.4 -0.9M134.0 12.2l2.2 -0.6M138.2 11.4l2.5 -0.7M142.3 10.5l1.9 -0.5M133.5 69.2l1.7 1.0M137.2 71.7l1.9 1.1M141.0 74.0l2.7 1.5M56.8 27.7l-1.1 -0.4M55.2 27.3l-0.8 -0.3M94.4 -6.7l0.9 -1.2M130.4 2.3l2.1 -1.0M133.2 1.2l1.3 -0.6M143.6 7.3l2.1 -0.7M48.1 74.9l-0.4 1.0M47.5 76.8l-0.4 0.9M20.2 66.9l-1.8 1.4M17.5 69.0l-1.8 1.4M69.4 25.9l0.7 -1.3M0.5 39.2l-2.7 0.3M-3.4 39.6l-2.7 0.3M-7.3 40.0l-2.5 0.3M95.1 -4.6l0.6 -0.8M96.1 -6.4l0.7 -0.9M123.5 80.2l1.4 1.2M73.5 36.6l1.0 0.9M51.9 39.4l-1.1 0.5M91.9 16.7l0.9 -0.6M75.1 30.4l1.2 -0.2M5.2 6.6l-1.7 -0.7M105.4 30.6l1.3 -0.0M95.2 67.4l0.8 0.9M117.3 25.1l1.5 -0.2M120.2 21.2l1.4 -0.3M122.8 21.3l1.2 -0.2M125.3 20.5l1.1 -0.2M60.1 10.5l-0.4 -1.2M117.2 59.8l1.5 0.9M119.6 61.2l1.2 0.7M125.3 -0.2l1.8 -1.0M56.1 20.8l-0.7 -0.7M54.3 20.2l-0.6 -0.6M7.5 3.3l-1.6 -0.8M28.5 -3.5l-1.4 -1.2M26.0 -5.3l-1.5 -1.3M23.8 -7.4l-1.4 -1.2M25.7 50.9l-1.3 0.6M23.8 52.2l-1.3 0.6M84.5 12.2l1.3 -1.5M115.7 72.7l1.0 0.9M53.7 20.7l-0.7 -0.5M31.5 4.0l-1.2 -0.9M29.1 2.3l-1.6 -1.3M66.3 -2.7l-0.0 -1.4M66.8 -4.6l-0.0 -1.0M70.8 21.6l0.6 -1.4M72.6 38.4l1.2 1.3M-10.5 33.0l-3.1 0.1M65.5 52.1l-0.1 0.9M66.7 43.3l-0.0 0.7M66.9 44.7l-0.0 0.9M80.2 2.1l0.4 -0.9M64.1 38.7l-0.7 1.7M42.8 29.0l-1.6 -0.2M40.3 29.0l-1.0 -0.1M51.9 -7.3l-0.4 -1.0M52.2 26.1l-1.3 -0.5M76.6 36.6l0.7 0.4M75.4 8.5l0.4 -1.1M116.8 7.0l1.9 -0.9M123.2 27.2l1.7 -0.1M141.2 -0.8l2.8 -1.2M145.3 -2.7l3.1 -1.4M84.5 25.7l1.4 -0.5M86.5 25.3l0.9 -0.3"/>
<path stroke="#1c2a50" stroke-width="1.0" stroke-opacity=".95" d="M67.5 29.6l-0.4 -1.6M106.6 72.5l5.2 5.6M57.2 19.9l-2.2 -2.4M43.2 63.6l-3.1 3.9M15.6 30.7l-6.9 -0.3M-6.2 63.7l-7.7 3.2M46.5 38.7l-3.3 0.9M106.9 14.6l4.5 -2.1M78.9 36.6l2.9 0.9M126.1 10.4l8.5 -3.2M46.1 81.5l-3.4 7.7M30.3 78.9l-5.5 6.8M116.2 82.3l6.7 7.1M45.9 79.8l-3.6 7.7M99.7 76.9l4.8 6.8M49.2 33.1l-3.6 0.0M10.4 -3.6l-8.1 -5.2M109.3 -3.2l6.1 -5.2M55.8 3.2l-2.0 -4.7M30.4 74.3l-4.5 5.0M59.1 61.2l-1.5 4.7M10.1 52.1l-8.3 2.8M67.0 24.3l-0.4 -2.1M80.7 18.5l2.2 -2.5M85.9 36.3l3.2 0.6M106.9 30.7l5.7 -0.3M134.9 64.9l8.1 3.8M82.5 14.3l2.0 -2.5M22.7 30.5l-6.2 -0.4M27.7 17.0l-4.5 -1.8M114.6 39.7l7.8 1.1M22.5 19.7l-6.3 -1.9M78.5 20.9l1.9 -2.1M35.2 24.4l-4.0 -1.1M26.0 75.2l-5.9 6.0M75.4 12.3l1.1 -3.0M58.3 11.3l-1.8 -3.8M123.4 54.6l9.0 3.5M15.4 39.9l-7.1 1.0M139.5 70.2l10.1 5.2M122.0 -2.4l6.2 -4.0M38.6 54.3l-3.8 2.9M40.1 51.9l-3.9 2.7M120.2 15.6l7.0 -2.3M6.0 46.8l-8.8 2.0M48.9 51.1l-3.3 3.2M35.4 30.2l-4.7 -0.4M83.4 51.8l2.6 3.4M81.9 66.9l2.0 5.0M138.8 69.3l9.7 5.0M50.3 68.2l-2.2 4.3M66.3 22.5l-0.4 -2.1M62.1 10.2l-0.9 -3.2M53.9 40.6l-2.6 1.5M22.2 82.1l-5.9 6.4M20.0 39.9l-7.4 1.1M32.6 29.7l-5.8 -0.5M67.2 42.8l-0.2 2.4M3.3 57.2l-9.9 3.8M42.1 20.5l-4.4 -2.1M112.1 11.7l5.0 -2.4M111.3 34.3l6.2 0.2M53.9 64.7l-1.9 4.2M34.4 73.3l-4.6 5.6M112.9 46.9l6.3 1.9M46.1 0.0l-2.7 -3.9M13.9 -5.6l-7.6 -5.5M63.7 19.9l-1.0 -2.6M14.3 72.4l-8.4 6.2M119.7 41.2l5.8 0.9M22.2 38.8l-6.5 0.9M16.4 -5.1l-6.1 -4.5M9.0 59.3l-8.9 4.0M59.0 52.0l-1.6 3.4M54.0 43.5l-2.2 1.8M82.8 81.0l2.1 7.2M65.6 -1.7l-0.4 -5.3M131.6 63.6l6.9 3.3M47.6 22.7l-2.9 -1.5M78.3 1.8l1.4 -4.3M88.1 61.6l3.3 5.1M61.6 38.2l-1.8 1.7M115.3 1.6l6.3 -4.1M45.5 43.7l-3.6 1.8M131.5 35.5l7.4 0.3M64.2 36.4l-1.3 1.2M22.2 -5.2l-5.0 -4.3M69.4 -0.0l0.2 -5.3M56.7 45.2l-2.0 2.2M100.5 49.9l5.6 2.9M91.7 21.8l3.8 -1.8M40.1 71.5l-3.7 5.2M83.6 25.6l2.9 -1.3M60.1 3.0l-1.3 -4.6M97.0 18.9l5.2 -2.5M58.9 78.1l-1.5 7.5M75.2 1.0l1.0 -4.6M114.8 50.0l6.6 2.4M64.1 33.7l-1.7 0.5M21.6 4.2l-5.7 -3.6M120.0 67.4l6.4 4.2M84.8 73.8l1.9 4.8M1.7 36.6l-7.8 0.5M127.2 5.4l6.5 -3.0M126.2 51.0l9.0 2.8M60.9 38.4l-2.0 1.6M84.9 62.0l2.9 5.4M91.8 48.6l3.8 2.4M24.8 61.4l-5.7 3.9M39.6 28.5l-3.7 -0.6M98.5 10.4l4.0 -2.9M35.1 39.1l-4.2 0.8M45.8 34.8l-3.5 0.4M5.1 77.8l-7.2 5.2M83.5 25.3l3.3 -1.6M69.5 17.6l0.3 -3.2M87.4 9.3l3.3 -3.9M59.6 18.4l-1.4 -2.3M33.4 33.3l-4.7 0.1M13.8 4.7l-6.2 -3.3M136.6 11.7l8.6 -2.6M66.4 62.4l-0.3 5.0M127.8 75.2l9.4 6.6M134.1 19.0l8.7 -1.8M110.3 -2.9l5.0 -4.2M3.3 15.6l-10.1 -2.7M63.0 38.7l-1.3 1.5M37.1 7.0l-4.1 -3.5M29.7 63.1l-5.5 4.4M33.8 21.1l-4.9 -1.7M21.6 69.9l-7.2 5.8M133.9 71.0l10.0 5.7M50.1 72.0l-2.1 4.7M95.9 42.0l4.0 1.3M56.1 29.0l-2.7 -1.0M107.3 18.6l4.9 -1.8M102.7 3.0l4.7 -4.0M94.6 -4.5l3.5 -4.9M75.8 33.0l2.1 0.0M131.7 3.0l7.1 -3.3M-6.3 39.6l-11.5 1.0M9.6 63.3l-8.3 4.4M104.5 -1.4l5.6 -5.2M102.9 57.9l5.8 4.1M1.3 17.6l-10.0 -2.3M65.0 19.2l-0.6 -2.5M17.4 18.3l-5.8 -1.7M29.7 39.2l-4.5 0.8M-3.5 4.0l-10.7 -4.3M137.0 39.6l7.2 0.7M74.2 40.6l1.5 2.2M138.3 53.8l9.0 2.6M62.0 23.0l-1.4 -2.1M69.3 29.2l0.5 -1.5M135.4 0.5l7.5 -3.6M-0.4 40.8l-10.0 1.1M62.6 25.1l-1.6 -1.8M64.2 26.2l-1.1 -1.5M20.4 49.9l-5.3 1.9M79.1 43.4l2.3 2.6M118.2 77.8l6.3 5.5M-2.9 17.8l-10.8 -2.3M121.4 8.3l7.0 -3.2M143.0 21.3l11.0 -1.7M14.0 22.8l-6.5 -1.2M29.5 8.6l-5.7 -3.7M13.1 -1.0l-6.0 -3.7M28.5 51.9l-5.2 2.5M100.2 22.1l4.2 -1.3M28.0 55.1l-6.5 3.7M136.4 29.6l8.8 -0.4M112.1 20.9l5.6 -1.5M-4.7 43.8l-7.4 1.1M122.0 52.3l6.0 2.1M85.4 71.5l2.7 6.3M76.8 17.4l1.6 -2.7M8.2 44.1l-7.9 1.5M-5.6 13.9l-9.2 -2.4M47.9 67.6l-2.9 5.1M8.7 28.9l-6.8 -0.4M3.0 26.9l-8.6 -0.8M90.2 51.2l3.0 2.4M2.3 29.7l-9.9 -0.5M128.4 45.3l8.8 1.8M143.2 54.4l11.5 3.3M104.0 32.3l5.0 -0.1M54.6 23.5l-2.5 -1.9M111.5 77.1l4.9 5.2M143.4 26.7l9.9 -0.8M-6.1 49.6l-10.6 2.4M129.4 81.7l9.6 7.5M74.5 73.6l0.8 5.4M10.0 36.3l-7.7 0.4M77.8 31.9l2.5 -0.2M51.9 50.1l-2.9 3.2M117.1 61.6l6.2 3.6M42.6 66.6l-4.3 5.8M126.7 0.2l8.9 -4.9M53.2 33.9l-2.5 0.2M97.9 47.5l4.9 2.4M127.8 61.7l7.0 3.4M18.2 63.0l-5.8 3.5M138.3 27.8l7.4 -0.5M89.1 -5.1l2.5 -4.6M46.0 34.4l-4.2 0.3M117.9 19.5l7.7 -2.0M118.7 12.0l7.7 -3.1M49.0 76.1l-2.7 6.2M140.7 13.3l7.9 -2.1M79.9 64.1l1.6 4.5M64.3 55.9l-0.8 4.4M72.2 38.4l1.1 1.9M28.7 71.4l-5.6 5.6M101.8 52.6l5.8 3.3M93.8 10.7l4.5 -3.8M54.0 54.1l-1.9 3.0M108.1 12.6l4.8 -2.4M84.0 43.8l3.2 2.1M84.1 52.6l2.2 2.9M-5.0 72.1l-8.0 4.3M139.6 83.8l8.8 6.1M109.1 40.0l6.8 1.2M109.3 48.3l7.1 2.6M33.4 52.0l-4.4 2.5M55.1 37.1l-2.4 0.8M124.4 25.2l7.1 -0.9M74.3 21.5l1.3 -2.2M74.9 23.2l1.5 -2.1M110.7 64.1l6.4 4.6M43.9 39.3l-3.7 1.0M121.4 72.4l6.0 4.4M106.7 68.5l6.0 5.4M87.2 18.7l3.0 -2.2M15.4 13.2l-8.0 -3.0M62.6 82.5l-0.7 6.2M27.4 68.2l-6.2 5.5M67.5 -3.3l-0.1 -5.0M62.1 33.9l-1.8 0.5M-1.9 72.0l-7.4 4.2M22.1 15.6l-6.1 -2.4M108.8 64.3l6.1 4.6M10.5 23.2l-8.8 -1.5M-4.3 1.5l-9.9 -4.4M72.0 22.1l0.9 -2.2M104.1 44.4l5.9 1.8M80.2 37.9l3.0 1.1M61.9 -3.7l-1.1 -6.2M133.0 78.3l8.4 5.7M119.4 48.2l6.3 1.9M42.1 80.3l-4.1 7.5M63.7 30.2l-1.4 -0.9M109.6 27.7l5.9 -0.7M141.5 59.4l10.8 3.9M59.5 -4.5l-1.2 -4.9M100.5 60.2l5.5 4.5M126.6 7.6l6.7 -2.9M-6.5 74.7l-9.2 5.2M15.7 61.6l-7.8 4.3M140.7 34.7l11.2 0.3M141.7 41.7l11.5 1.4M67.3 50.3l-0.2 3.8M24.9 65.4l-6.5 5.0M111.8 55.1l6.4 3.2M68.1 36.4l-0.1 1.8M50.3 6.3l-2.5 -3.6M73.8 48.3l1.1 3.2M31.9 20.7l-4.6 -1.6M37.6 17.0l-4.0 -2.1M110.6 73.1l5.4 5.0M12.5 32.3l-6.5 -0.1M13.5 20.1l-7.7 -1.8M57.6 27.9l-2.0 -1.0M5.1 76.0l-9.7 6.7M60.6 7.1l-1.3 -4.3M84.3 30.9l3.2 -0.4M40.8 -0.6l-3.5 -4.1M67.4 59.7l-0.1 3.8M29.6 31.3l-4.7 -0.2M13.3 31.7l-8.8 -0.2M94.2 62.6l3.8 4.5M113.2 17.4l7.1 -2.4M50.7 39.9l-3.4 1.4M79.9 25.8l2.5 -1.4M88.6 44.8l3.3 1.8M68.0 55.6l-0.0 4.1M42.3 30.5l-4.3 -0.4M139.1 35.2l10.5 0.4M1.8 72.2l-9.3 5.6M40.9 12.7l-3.7 -2.8M124.5 83.3l6.3 5.5M129.5 17.3l6.7 -1.7M72.7 45.2l1.0 3.0M106.4 53.6l4.9 2.6M33.9 72.2l-3.7 4.3M40.2 45.6l-5.0 2.4M52.8 13.3l-2.9 -3.4M79.1 20.5l2.1 -2.3M12.9 50.4l-8.8 2.9M31.8 5.9l-5.7 -4.3M0.7 59.6l-8.4 3.4M84.3 76.8l2.1 5.8M105.0 20.2l4.4 -1.5M36.6 73.0l-4.0 5.1M38.5 22.9l-4.1 -1.4"/>
<path stroke="#d2d6d6" stroke-width="0.8" stroke-opacity=".95" d="M66.4 29.8l-0.2 -0.8M137.2 20.7l2.2 -0.3M141.1 20.1l2.9 -0.4M91.5 13.2l1.4 -1.0M136.0 7.2l1.9 -0.7M113.8 36.1l1.5 0.1M128.0 22.0l1.6 -0.2M87.7 35.3l1.0 0.2M134.3 3.4l1.6 -0.7M137.2 1.8l1.4 -0.6M116.8 14.8l2.0 -0.7M69.2 44.8l0.2 0.9M120.6 -3.1l1.7 -1.1M122.9 -4.7l1.4 -0.9M81.1 31.4l0.9 0.0M65.2 22.7l-0.3 -1.6M125.8 42.9l2.3 0.4M129.2 43.8l1.8 0.4M60.3 38.5l-0.6 0.6M107.8 6.6l1.0 -0.6M27.0 4.4l-1.4 -0.9M24.4 2.6l-1.4 -0.9M46.9 20.6l-0.8 -0.4M26.7 39.0l-2.1 0.4M135.2 57.3l1.4 0.5M138.4 58.3l2.1 0.8M133.6 34.1l1.3 0.1M131.7 28.6l1.9 -0.1M0.6 80.7l-1.6 1.2M90.6 20.1l1.3 -0.6M93.1 19.8l1.3 -0.6M82.8 24.4l1.1 -0.5M136.0 67.4l2.1 1.1M136.5 34.8l2.8 0.2M26.4 12.6l-1.8 -0.8M24.0 11.7l-1.8 -0.8M59.0 19.0l-0.6 -0.9M81.7 26.8l1.0 -0.3M83.5 26.3l1.0 -0.3M40.1 4.4l-0.8 -0.8M38.7 2.4l-1.0 -1.1M29.7 61.8l-1.6 1.3M27.5 63.4l-1.7 1.4M132.8 23.5l2.5 -0.3M136.4 23.4l1.7 -0.2M103.3 -2.9l1.1 -1.1M108.2 16.8l1.3 -0.5M139.2 0.2l1.4 -0.6M61.1 23.8l-0.4 -0.6M125.9 48.3l2.0 0.6M118.3 -8.1l1.6 -1.3M67.4 23.0l0.1 -0.8M31.0 39.3l-1.7 0.4M28.9 39.9l-1.2 0.3M76.5 15.4l0.7 -1.2M130.2 67.1l1.6 0.9M133.7 69.0l1.8 1.0M85.6 28.3l1.1 -0.2M90.5 50.4l1.3 1.1M96.6 16.6l0.9 -0.5M135.0 81.6l1.6 1.2M138.6 84.5l1.7 1.3M84.5 42.4l1.4 0.9M71.9 41.7l0.7 1.3M86.9 12.4l0.7 -0.7M72.9 21.0l0.5 -0.9M74.2 20.0l0.4 -0.7M88.0 9.3l1.2 -1.2M129.0 20.3l1.8 -0.3M-6.2 72.7l-2.6 1.5M-9.8 74.7l-2.2 1.3M115.6 20.7l1.5 -0.3M13.2 31.1l-1.4 -0.0M10.7 30.8l-1.8 -0.0M88.8 25.6l1.0 -0.3M138.1 59.2l2.4 0.9M141.0 60.9l1.9 0.8M71.6 45.3l0.4 1.1M57.7 35.3l-0.9 0.4M35.6 84.9l-0.6 1.0M87.7 34.0l1.1 0.1"/>
<path stroke="#ccc082" stroke-width="1.2" stroke-opacity=".95" d="M104.9 72.9l1.1 1.2M5.9 11.1l-1.1 -0.4M28.7 15.9l-0.8 -0.3M114.1 37.5l2.4 0.3M14.0 10.2l-1.3 -0.5M83.8 22.1l0.8 -0.4M60.4 11.0l-0.3 -1.2M110.7 10.2l1.2 -0.6M-0.3 28.6l-2.6 -0.1M55.2 23.0l-0.9 -0.6M46.8 59.2l-0.5 0.7M47.9 3.7l-0.9 -1.4M76.6 1.6l0.5 -1.5M-2.5 11.4l-2.0 -0.6M-5.1 19.1l-2.9 -0.5M42.7 43.9l-1.2 0.6M77.7 50.7l0.4 0.7M130.0 6.7l1.4 -0.5M16.3 54.9l-1.9 0.9M138.2 80.5l2.1 1.4M7.6 21.0l-1.4 -0.2M61.0 58.4l-0.3 1.4M44.1 9.2l-0.9 -0.9M86.3 73.3l0.6 1.2M46.0 -5.2l-0.7 -1.2M44.9 -6.9l-0.5 -0.9M91.3 -2.5l1.0 -1.4M9.6 61.2l-2.2 1.1M137.7 52.2l1.8 0.5M90.9 56.3l1.1 1.1M-4.1 42.1l-1.5 0.2M43.5 31.3l-1.5 0.0M83.7 71.4l0.7 1.5M140.7 2.7l1.3 -0.5M59.9 1.8l-0.3 -1.3M96.7 83.5l0.9 1.5M87.4 59.8l0.9 1.2M137.4 26.3l2.3 -0.2M23.3 14.4l-1.7 -0.7M1.5 -1.7l-1.6 -0.8M52.1 15.9l-1.4 -1.4M41.0 78.6l-1.2 2.3M76.8 81.6l0.2 1.0M39.8 1.0l-0.8 -0.9M92.5 63.2l0.6 0.7M116.6 22.7l1.4 -0.2"/>
<path stroke="#ccc082" stroke-width="0.8" stroke-opacity=".95" d="M107.2 74.8l0.9 1.0M3.4 10.3l-1.5 -0.5M0.8 9.7l-1.5 -0.5M54.8 82.0l-0.4 1.6M54.4 84.6l-0.3 1.3M42.0 46.1l-0.9 0.5M-4.0 -4.2l-2.3 -1.2M-8.3 -5.7l-3.0 -1.5M-12.3 -8.0l-2.2 -1.1M6.6 70.1l-1.8 1.2M4.3 72.3l-2.1 1.3M23.5 28.9l-1.3 -0.1M21.1 28.7l-1.1 -0.1M27.0 15.0l-0.8 -0.3M25.1 14.7l-1.2 -0.5M117.1 38.3l2.0 0.3M74.4 12.1l0.3 -0.7M122.9 53.0l2.1 0.8M109.1 83.5l2.0 2.4M11.2 9.1l-1.4 -0.5M8.4 7.9l-1.9 -0.8M48.0 43.0l-1.5 0.9M45.8 44.4l-1.4 0.9M39.6 50.6l-1.0 0.7M37.6 52.5l-1.7 1.2M85.7 20.9l1.3 -0.8M60.4 8.9l-0.2 -0.8M135.6 55.7l2.9 1.0M139.9 56.8l2.9 1.0M43.0 19.8l-0.8 -0.4M112.9 9.8l1.4 -0.7M114.9 8.9l0.8 -0.4M-3.8 29.0l-1.7 -0.1M19.1 43.9l-1.0 0.3M107.9 59.9l1.4 1.0M53.6 22.1l-1.1 -0.8M56.4 61.1l-0.3 0.9M55.6 63.0l-0.4 1.1M88.0 -1.9l0.6 -1.0M17.8 -5.7l-1.4 -1.1M15.6 -7.6l-1.0 -0.8M13.0 -9.0l-1.1 -0.9M129.3 60.1l2.8 1.3M132.8 61.8l2.4 1.1M33.0 26.3l-1.2 -0.2M45.7 60.8l-0.6 0.8M44.7 62.6l-0.8 1.1M15.9 74.4l-1.9 1.6M13.5 76.8l-1.8 1.5M114.9 53.4l1.4 0.6M-4.6 51.0l-1.7 0.5M-7.9 52.1l-1.7 0.5M46.7 1.9l-0.9 -1.4M45.9 -0.2l-0.8 -1.2M68.0 61.3l0.0 1.2M77.9 -0.8l0.7 -2.0M-4.4 80.8l-2.7 1.8M-8.3 83.6l-2.4 1.7M-6.1 10.0l-2.3 -0.7M-9.4 18.4l-3.1 -0.5M13.8 72.7l-1.5 1.2M10.9 74.8l-1.7 1.4M42.5 39.2l-1.9 0.6M0.4 57.7l-1.8 0.7M40.9 44.8l-0.8 0.4M94.7 50.8l1.4 1.0M96.7 51.9l1.3 0.9M45.3 17.6l-0.9 -0.5M78.3 81.6l0.3 1.1M79.3 83.7l0.3 1.4M83.3 73.8l0.5 1.2M84.1 75.6l0.5 1.3M35.4 76.0l-0.9 1.2M127.6 73.3l1.6 1.1M131.0 76.2l1.8 1.3M4.7 14.6l-3.1 -0.8M0.9 13.3l-2.0 -0.5M132.7 6.1l1.7 -0.7M13.7 56.0l-1.2 0.6M4.6 21.1l-1.4 -0.2M61.0 60.8l-0.3 1.5M42.7 7.8l-1.0 -1.1M87.6 75.5l0.8 1.7M89.1 77.6l0.9 1.8M44.4 -8.9l-0.4 -0.8M93.0 -4.4l1.0 -1.4M94.8 -6.2l0.7 -1.0M112.0 29.8l1.6 -0.1M6.6 63.2l-1.4 0.7M-6.4 57.5l-2.7 1.0M73.1 41.0l0.4 0.6M74.1 42.3l0.5 0.7M141.3 52.9l1.9 0.6M144.7 54.4l1.5 0.4M92.7 58.0l1.1 1.1M11.4 24.9l-2.4 -0.3M8.1 24.8l-2.2 -0.3M26.3 24.2l-1.8 -0.3M23.9 23.8l-1.1 -0.2M95.9 36.0l0.9 0.1M97.8 36.4l0.9 0.2M-6.9 43.1l-1.2 0.2M41.4 32.0l-1.5 0.0M121.8 50.8l1.5 0.5M84.7 73.9l0.6 1.3M3.5 27.9l-2.8 -0.1M-0.4 27.7l-2.0 -0.1M6.7 65.1l-1.8 1.0M3.8 66.3l-1.2 0.7M72.8 -5.8l0.2 -1.0M144.0 1.6l1.7 -0.7M96.6 72.1l1.2 1.6M90.0 80.8l0.5 1.1M98.8 86.3l1.2 2.1M93.6 82.1l1.1 2.1M95.3 85.1l1.1 2.0M33.1 -5.2l-0.7 -0.8M31.7 -6.8l-0.7 -0.7M-1.5 32.9l-1.9 0.0M31.5 53.0l-1.0 0.6M29.5 54.5l-1.0 0.6M88.7 61.4l0.7 0.9M11.1 33.4l-1.4 0.0M7.7 33.4l-1.4 0.0M140.3 26.0l1.8 -0.1M143.2 26.1l1.5 -0.1M87.6 -5.3l0.4 -0.7M88.4 -7.2l0.8 -1.4M46.3 32.9l-1.4 0.1M-2.9 77.1l-1.9 1.2M-6.9 79.9l-2.5 1.6M23.2 15.7l-1.8 -0.6M21.0 13.3l-1.7 -0.6M18.4 12.9l-1.4 -0.5M-1.7 -3.4l-2.1 -1.1M49.8 14.6l-1.3 -1.2M39.5 81.6l-0.8 1.4M38.2 84.6l-1.1 2.1M77.1 84.1l0.3 1.5M78.1 86.4l0.3 1.5M58.4 -3.7l-0.3 -1.1M58.2 -5.6l-0.3 -1.4M24.7 63.7l-1.7 1.3M22.5 66.1l-1.3 1.0M14.7 19.0l-2.1 -0.5M38.8 -0.9l-0.6 -0.7M37.3 -2.4l-0.8 -0.9M122.1 8.9l2.0 -0.8M125.1 7.8l2.2 -0.9M94.4 64.5l0.9 1.1M88.9 43.5l0.9 0.5M14.4 58.2l-1.0 0.5M12.4 59.6l-1.6 0.8M42.1 11.7l-1.4 -1.1M39.7 10.4l-1.2 -0.9M134.9 73.7l1.2 0.8M137.9 75.6l1.6 1.0M20.1 10.6l-2.3 -1.0M17.1 9.1l-1.7 -0.8M13.4 48.7l-2.2 0.7M10.1 50.3l-1.4 0.5M74.9 82.0l0.3 1.8M75.3 84.9l0.3 1.9M119.7 22.4l2.0 -0.3"/>
<path stroke="#ccc082" stroke-width="0.6" stroke-opacity=".95" d="M109.5 76.8l1.4 1.5M54.0 87.2l-0.4 1.8M40.4 47.6l-1.4 0.8M1.6 74.0l-1.9 1.2M18.7 28.7l-1.5 -0.1M120.1 38.8l2.0 0.3M75.2 10.4l0.3 -0.8M126.3 54.6l1.5 0.6M129.6 56.3l1.7 0.7M112.1 86.4l1.4 1.7M114.5 89.8l1.1 1.3M144.1 58.4l2.3 0.8M41.4 18.7l-1.0 -0.5M39.6 18.1l-1.0 -0.5M-7.3 28.6l-1.9 -0.1M17.0 44.7l-1.0 0.3M14.8 45.2l-1.6 0.4M110.1 61.4l1.5 1.1M112.0 63.4l1.7 1.2M55.1 65.0l-0.3 0.9M89.4 -3.9l0.6 -0.9M91.2 -5.8l0.7 -1.2M136.4 63.5l2.2 1.0M30.8 25.9l-1.5 -0.2M28.7 25.3l-1.7 -0.3M10.9 78.9l-1.1 0.9M117.6 54.4l1.6 0.7M120.1 56.1l1.3 0.6M-11.3 52.8l-2.6 0.7M68.3 63.4l0.0 1.0M68.2 65.4l0.0 0.9M-11.9 86.8l-1.9 1.3M-9.8 9.5l-2.7 -0.8M-13.8 18.0l-1.8 -0.3M8.2 77.0l-1.3 1.0M40.0 39.9l-1.2 0.4M-3.6 59.4l-2.0 0.8M-7.5 61.4l-2.3 0.9M39.4 46.0l-0.8 0.4M98.4 53.4l1.2 0.8M43.3 16.5l-1.5 -1.0M85.3 77.3l0.5 1.2M78.9 52.4l0.6 1.1M37.3 73.4l-1.5 2.1M34.0 79.0l-1.4 2.0M134.6 78.9l2.5 1.8M-3.2 12.8l-1.7 -0.5M135.3 5.0l1.6 -0.6M11.3 57.5l-1.3 0.6M141.5 82.8l2.7 1.8M144.7 85.4l2.6 1.8M1.7 20.4l-1.3 -0.2M41.7 6.0l-0.6 -0.6M114.1 29.3l1.1 -0.0M116.2 29.7l1.6 -0.1M3.5 65.1l-2.0 1.1M-9.7 59.3l-2.7 1.0M-13.2 60.4l-1.9 0.7M4.9 24.4l-1.9 -0.2M21.5 23.6l-1.8 -0.3M99.7 37.2l1.4 0.2M-9.9 43.3l-1.3 0.2M124.0 52.1l1.5 0.5M126.5 52.6l1.7 0.6M85.8 76.3l0.6 1.5M-4.2 28.1l-1.6 -0.1M1.1 68.0l-1.7 0.9M55.9 -2.1l-0.4 -1.2M55.3 -4.6l-0.4 -1.2M73.2 -7.9l0.2 -1.6M73.5 -10.1l0.3 -1.7M147.2 0.4l2.5 -1.0M97.9 74.4l0.8 1.1M99.8 76.3l0.8 1.1M59.5 -0.7l-0.4 -1.6M88.9 78.7l0.6 1.4M91.5 82.7l0.6 1.3M100.4 89.4l1.4 2.4M96.9 88.1l1.0 1.8M30.6 -8.8l-1.0 -1.1M-5.3 33.6l-1.8 0.0M-9.1 33.5l-1.8 0.0M27.2 55.7l-1.3 0.8M90.1 63.0l0.9 1.3M4.3 33.7l-1.8 0.1M89.5 -8.8l0.6 -1.1M43.8 33.6l-1.6 0.1M-11.0 82.5l-2.9 1.9M20.4 14.7l-1.3 -0.4M17.6 13.6l-1.3 -0.5M-4.9 -5.1l-2.2 -1.1M57.5 -7.5l-0.3 -1.4M19.8 67.8l-1.1 0.8M11.5 18.9l-2.4 -0.6M8.6 18.0l-2.4 -0.6M128.1 6.6l1.2 -0.5M95.6 66.5l1.0 1.2M90.8 44.7l0.8 0.5M10.2 60.7l-1.7 0.9M140.7 77.7l2.3 1.4M13.9 7.9l-2.0 -0.9M6.7 51.3l-1.6 0.5M76.4 87.7l0.3 2.0M122.8 21.8l2.5 -0.4"/>
<path stroke="#c5b878" stroke-width="1.2" stroke-opacity=".95" d="M20.3 -2.6l-1.5 -1.1M119.4 42.0l1.6 0.3M66.0 71.0l-0.0 2.1M89.7 16.4l1.3 -0.9M-1.7 65.4l-1.2 0.6M58.4 22.7l-0.9 -0.8M118.8 14.0l1.3 -0.4M108.5 53.9l1.5 0.8M50.6 15.6l-0.9 -0.8M-0.3 5.4l-2.2 -0.8M112.6 45.4l1.9 0.6M16.2 25.9l-1.3 -0.1M83.6 1.5l0.9 -1.6M110.6 49.8l1.7 0.7M112.8 50.5l1.3 0.5M100.3 37.0l1.8 0.3M105.6 64.2l1.3 1.1M125.7 49.4l2.7 0.8M31.0 46.3l-1.0 0.4M65.1 61.8l-0.1 1.5M-1.9 3.3l-2.7 -1.1M2.6 33.8l-1.7 0.1M29.6 47.8l-1.3 0.6M142.3 52.6l3.3 0.9M113.3 9.9l1.3 -0.6M-5.4 47.6l-3.1 0.7M113.1 16.8l1.3 -0.4M98.1 45.8l0.9 0.4M78.4 64.1l0.4 1.0M92.2 9.8l1.1 -0.9M24.1 47.3l-0.9 0.3M-1.7 70.4l-1.4 0.8M-2.4 0.2l-2.2 -1.0M26.1 21.8l-1.4 -0.3M15.9 59.9l-1.6 0.9M31.5 62.7l-0.9 0.8M104.2 18.9l1.1 -0.4"/>
<path stroke="#c5b878" stroke-width="0.8" stroke-opacity=".95" d="M17.8 -4.0l-0.9 -0.7M42.8 62.6l-0.8 1.0M114.5 82.5l1.8 2.0M117.2 85.2l1.4 1.5M107.9 -3.4l1.8 -1.6M110.1 -5.7l1.1 -1.0M66.2 73.8l-0.0 1.9M91.5 15.2l1.4 -0.9M1.4 64.3l-2.3 1.1M-4.5 67.2l-1.6 0.8M45.5 47.2l-1.2 0.9M43.5 48.9l-1.2 0.9M35.8 23.2l-1.6 -0.4M33.5 22.6l-1.4 -0.4M46.9 81.5l-0.8 1.9M46.4 84.1l-0.6 1.5M45.7 86.7l-0.5 1.4M121.6 13.5l2.1 -0.7M124.4 12.7l1.3 -0.4M110.3 54.9l1.0 0.5M138.1 68.0l2.3 1.2M48.3 14.3l-1.0 -1.0M69.9 30.1l1.4 -0.7M95.5 75.0l1.4 2.1M-4.6 4.4l-3.2 -1.2M-8.6 2.6l-2.8 -1.0M136.3 77.7l2.2 1.5M61.1 66.7l-0.3 2.1M54.9 14.6l-0.7 -1.0M53.6 13.2l-0.5 -0.7M115.1 45.9l1.9 0.6M117.6 46.6l1.0 0.3M12.1 8.3l-1.5 -0.6M9.4 7.8l-1.8 -0.7M111.6 -0.1l2.0 -1.4M114.8 -1.5l1.7 -1.2M64.3 -1.0l-0.1 -1.0M64.0 -3.0l-0.1 -1.3M114.2 60.3l1.7 1.1M13.8 25.3l-1.2 -0.1M11.4 25.2l-1.4 -0.2M48.5 54.5l-0.9 1.1M84.7 -0.6l0.9 -1.5M114.9 51.5l0.9 0.4M39.5 70.2l-0.9 1.3M38.2 72.3l-0.9 1.3M139.2 74.8l1.3 0.8M142.1 76.6l1.4 0.8M102.6 37.7l1.8 0.3M73.4 1.0l0.2 -1.1M105.2 59.8l1.8 1.3M95.5 0.9l0.8 -0.9M107.6 66.7l1.1 1.0M129.3 50.2l1.6 0.5M29.0 46.9l-1.3 0.5M92.3 47.2l1.4 0.9M94.4 48.7l1.4 0.9M24.8 60.1l-1.3 0.8M9.8 0.4l-1.5 -0.8M6.1 -1.3l-2.7 -1.5M65.1 63.7l-0.1 1.3M26.4 0.5l-1.3 -1.0M24.0 -0.7l-1.6 -1.2M9.9 3.0l-2.3 -1.1M6.8 1.7l-2.0 -1.0M52.4 38.8l-1.3 0.6M50.6 39.7l-0.8 0.4M60.4 70.0l-0.3 1.6M60.1 72.3l-0.2 0.9M125.9 64.8l1.3 0.7M129.0 66.2l1.3 0.7M29.9 38.0l-1.1 0.2M27.3 38.5l-1.8 0.3M-5.9 1.3l-2.3 -1.0M27.9 11.4l-1.6 -0.8M133.6 45.3l2.0 0.4M137.6 46.0l2.6 0.6M-1.1 34.5l-2.1 0.1M-4.9 34.6l-2.1 0.1M21.8 43.0l-1.1 0.3M19.4 44.3l-1.9 0.5M49.6 44.9l-1.4 1.1M122.0 2.0l1.4 -0.8M124.7 0.7l1.2 -0.6M53.8 66.3l-0.5 1.4M27.2 49.1l-1.7 0.8M2.7 20.3l-1.5 -0.3M55.1 29.3l-0.7 -0.1M53.7 29.0l-0.7 -0.1M31.4 57.7l-1.4 1.1M28.1 22.3l-0.9 -0.2M26.2 21.9l-1.1 -0.3M47.1 66.4l-0.8 1.4M45.7 68.3l-0.8 1.3M146.8 53.7l3.0 0.8M115.4 9.1l1.1 -0.5M45.1 47.6l-0.9 0.6M103.3 6.0l1.0 -0.7M105.6 4.3l1.4 -1.0M-9.4 48.8l-2.5 0.6M11.5 70.5l-1.4 1.0M9.1 72.7l-1.1 0.8M115.7 15.9l1.6 -0.5M100.0 46.8l1.5 0.7M7.9 27.6l-2.5 -0.2M9.3 54.0l-2.4 0.9M5.8 55.4l-2.3 0.9M78.9 65.9l0.3 0.8M-0.6 55.3l-2.0 0.7M-4.5 57.0l-2.2 0.8M53.3 53.3l-0.6 0.9M123.5 40.0l1.0 0.1M33.2 50.5l-1.0 0.5M31.6 51.6l-0.7 0.4M90.4 46.0l1.7 1.1M50.5 37.5l-1.5 0.5M110.8 62.5l1.3 1.0M113.1 64.6l1.1 0.8M21.8 48.0l-1.1 0.4M-4.6 72.0l-1.9 1.1M33.8 10.9l-1.3 -0.8M-6.3 -1.4l-2.4 -1.0M-10.4 -2.6l-2.7 -1.2M23.5 21.2l-2.0 -0.5M140.8 57.7l2.5 0.9M145.0 59.0l2.9 1.0M23.6 67.5l-1.2 1.0M100.7 58.8l1.2 0.9M103.0 60.3l1.1 0.9M33.6 76.5l-0.7 0.9M12.8 61.5l-2.0 1.1M140.6 40.6l3.2 0.4M145.1 40.9l3.2 0.4M105.3 72.1l1.5 1.5M121.3 66.1l1.7 1.1M124.2 67.9l2.0 1.3M67.9 30.2l0.9 -1.0M0.9 34.9l-1.2 0.1M-1.8 35.2l-1.7 0.1M46.7 23.3l-1.3 -0.5M140.9 44.9l2.6 0.5M118.8 81.5l2.1 2.0M99.5 81.1l1.1 1.7M101.0 83.8l1.0 1.5M29.3 64.6l-1.0 0.9M27.3 66.7l-1.0 0.9M68.5 77.3l0.0 1.2M68.6 79.4l0.0 1.0M106.9 18.3l1.1 -0.4M-4.5 66.9l-2.2 1.1M-7.5 68.8l-1.7 0.8M-10.5 70.5l-2.5 1.2M28.0 41.2l-0.9 0.2"/>
<path stroke="#c5b878" stroke-width="0.6" stroke-opacity=".95" d="M15.5 -5.6l-1.3 -0.9M41.7 64.3l-0.6 0.7M40.6 65.8l-0.5 0.6M121.9 42.6l1.5 0.3M124.3 43.3l1.3 0.3M119.6 88.1l1.5 1.6M112.6 -7.6l1.8 -1.5M57.2 21.8l-0.6 -0.6M112.0 56.3l0.8 0.5M141.9 69.9l2.9 1.5M145.6 71.9l2.5 1.3M97.7 77.3l1.2 1.8M99.2 80.1l0.7 1.1M139.4 79.8l2.2 1.5M142.4 82.0l1.3 0.9M61.1 69.5l-0.2 1.4M7.0 6.6l-1.9 -0.8M117.6 -3.7l1.5 -1.0M64.1 -5.1l-0.1 -1.0M116.3 62.5l1.6 1.0M118.9 63.9l1.7 1.1M47.2 55.9l-0.6 0.8M46.2 57.6l-0.6 0.7M86.0 -2.5l0.8 -1.5M36.6 74.2l-1.1 1.5M144.8 78.5l2.1 1.3M74.3 -1.6l0.4 -2.0M107.3 62.0l1.9 1.4M110.0 63.5l1.2 0.9M97.0 -1.3l1.2 -1.3M99.2 -3.0l1.3 -1.4M109.8 68.9l1.6 1.4M132.7 51.5l1.7 0.5M27.2 48.0l-1.2 0.5M22.5 61.6l-1.5 1.0M20.4 63.2l-1.4 1.0M31.6 43.2l-1.4 0.5M29.7 43.8l-0.8 0.2M27.9 44.5l-0.9 0.3M2.6 -3.4l-1.6 -0.9M70.7 -5.4l0.1 -1.3M71.3 -8.0l0.1 -1.3M64.9 65.7l-0.1 1.3M21.9 -2.3l-1.0 -0.8M3.8 0.4l-1.9 -0.9M59.8 74.5l-0.2 1.1M131.8 68.0l1.9 1.1M-10.3 0.2l-1.8 -0.7M25.6 10.2l-1.4 -0.7M23.1 9.3l-1.2 -0.6M141.5 47.0l3.0 0.6M16.9 45.1l-1.8 0.5M47.6 46.3l-1.2 0.9M48.8 13.6l-1.1 -1.1M47.1 12.0l-1.2 -1.1M127.3 -0.8l1.2 -0.6M53.1 68.9l-0.5 1.3M24.8 50.3l-1.9 0.8M-0.1 20.3l-1.2 -0.2M-2.8 20.1l-1.6 -0.3M29.0 59.5l-1.7 1.3M26.7 61.3l-1.5 1.1M24.2 21.4l-0.9 -0.2M44.9 70.5l-0.6 1.0M151.1 55.6l2.2 0.6M117.7 8.8l1.4 -0.6M43.3 49.4l-1.2 0.9M107.9 2.5l1.0 -0.7M-13.5 49.6l-2.9 0.7M6.3 74.4l-1.9 1.3M118.6 15.5l1.4 -0.5M101.9 47.7l1.4 0.7M4.2 27.4l-2.9 -0.2M0.5 27.2l-1.8 -0.1M2.2 56.7l-2.5 1.0M79.8 67.6l0.4 1.1M-8.5 58.3l-2.9 1.0M94.2 8.7l0.7 -0.6M95.9 7.1l1.0 -0.9M52.4 55.2l-0.8 1.3M125.9 40.2l1.1 0.2M128.3 40.6l1.8 0.3M29.9 52.6l-1.0 0.6M92.6 47.7l1.2 0.8M48.4 38.3l-1.3 0.5M115.7 66.2l1.8 1.3M19.6 48.9l-1.0 0.4M-7.3 74.1l-1.3 0.7M32.1 9.8l-0.7 -0.4M30.5 8.7l-0.9 -0.6M20.9 20.7l-1.7 -0.4M149.1 61.0l1.7 0.6M21.2 69.8l-1.0 0.8M19.0 72.2l-1.4 1.1M104.7 62.5l1.1 0.9M32.2 78.6l-0.9 1.2M31.0 80.8l-1.2 1.6M9.9 63.5l-1.4 0.8M149.5 41.5l3.4 0.4M107.7 74.6l1.3 1.4M110.1 77.1l1.2 1.3M127.1 69.7l1.4 0.9M-4.4 35.7l-1.7 0.1M44.4 22.5l-1.8 -0.7M144.3 45.7l2.3 0.4M147.8 46.6l1.8 0.3M121.8 84.1l2.2 2.2M124.3 87.2l1.2 1.2M102.6 86.4l0.9 1.4M69.0 81.5l0.0 1.1M26.2 41.8l-1.1 0.3M24.3 42.0l-1.3 0.3"/>
<path stroke="#e2e3dc" stroke-width="1.2" stroke-opacity=".95" d="M54.3 6.0l-0.5 -1.0M79.1 35.1l1.0 0.3M78.4 0.2l0.3 -0.8M126.6 47.8l1.5 0.4M109.0 3.7l1.4 -0.9M63.1 35.3l-1.0 1.0M8.2 77.2l-1.4 1.1M59.9 36.9l-0.5 0.4M15.0 4.0l-1.0 -0.5M75.8 31.6l1.1 0.0M65.5 20.9l-0.2 -1.4M67.7 28.6l0.4 -1.3M134.0 -0.2l1.8 -0.9M129.7 51.7l1.9 0.6M53.3 32.0l-0.6 0.0M105.6 35.4l1.4 0.2M64.7 41.4l-0.3 1.4M28.1 -2.9l-0.9 -0.8M90.7 37.1l1.5 0.4M106.9 11.6l1.3 -0.7M54.7 35.3l-0.9 0.3M27.1 66.5l-1.2 1.1M65.6 3.4l-0.1 -1.9M-4.7 39.5l-2.2 0.3M94.1 43.6l1.7 0.8M106.8 51.7l1.3 0.7"/>
<path stroke="#e2e3dc" stroke-width="0.8" stroke-opacity=".95" d="M53.1 3.7l-0.5 -1.0M80.3 23.6l1.2 -0.8M81.8 22.2l1.4 -0.9M80.7 35.9l0.7 0.2M79.6 -1.7l0.3 -0.9M80.7 -3.7l0.5 -1.3M61.2 47.3l-0.4 1.1M136.1 0.7l2.1 -1.0M73.7 28.4l1.4 -0.7M81.0 42.1l0.7 0.5M81.9 43.7l0.6 0.5M129.1 48.3l1.2 0.3M122.6 79.7l2.2 1.9M126.1 82.5l2.1 1.8M138.2 48.3l1.8 0.4M142.2 49.3l2.8 0.7M39.3 58.8l-1.0 1.0M53.4 36.3l-1.0 0.4M76.0 33.0l1.4 0.2M70.3 5.6l0.2 -1.6M136.3 69.3l2.7 1.5M140.0 71.1l1.7 0.9M136.0 15.7l3.1 -0.7M76.8 30.1l1.2 -0.2M111.1 2.3l0.8 -0.5M113.4 1.4l1.6 -1.0M58.0 51.2l-0.7 1.6M61.9 34.9l-0.9 0.6M81.3 80.6l0.6 2.1M82.3 83.3l0.6 2.0M56.5 30.4l-1.1 -0.1M78.0 24.9l1.8 -1.1M101.9 10.4l1.5 -0.9M104.2 9.4l1.3 -0.8M95.7 17.6l1.2 -0.6M97.8 16.8l1.2 -0.6M5.6 79.5l-1.9 1.5M2.8 81.7l-1.4 1.1M61.4 44.5l-0.3 0.6M41.4 28.1l-1.7 -0.2M69.1 37.0l0.4 1.0M99.8 74.4l1.3 1.7M101.7 76.3l1.0 1.2M59.2 44.2l-0.4 0.7M61.6 37.5l-1.1 1.2M67.4 52.6l0.0 1.1M72.3 24.1l1.1 -1.6M43.7 56.8l-0.9 0.9M100.1 -6.5l0.9 -1.0M102.3 -8.7l1.6 -1.8M75.1 63.7l0.3 1.2M52.9 28.5l-1.0 -0.2M51.0 28.6l-1.0 -0.2M136.8 -1.9l1.6 -0.8M78.1 44.0l0.8 0.9M141.6 20.0l2.9 -0.4M146.0 19.8l2.3 -0.3M120.4 33.3l1.5 0.1M92.5 71.8l0.9 1.4M59.0 13.9l-0.4 -1.0M104.8 -6.7l1.5 -1.5M107.3 -8.5l1.5 -1.5M132.9 53.2l2.1 0.7M136.4 54.2l2.4 0.8M65.3 9.1l-0.1 -1.3M56.1 32.9l-1.1 0.1M55.0 25.5l-0.9 -0.4M53.2 25.2l-0.8 -0.4M142.2 25.1l1.9 -0.2M146.1 24.9l2.9 -0.2M38.3 49.4l-1.2 0.8M36.5 50.3l-1.1 0.7M132.9 34.5l1.6 0.1M136.5 34.3l2.4 0.1M51.8 32.4l-0.8 0.1M107.9 36.3l1.7 0.2M66.7 25.7l-0.1 -1.4M116.7 18.4l2.2 -0.6M25.9 -4.2l-1.2 -1.0M65.3 22.0l-0.2 -1.1M88.9 4.8l1.0 -1.2M91.0 2.9l1.4 -1.7M56.1 55.4l-0.5 1.1M55.4 58.0l-0.7 1.5M61.3 34.8l-0.9 0.5M53.5 36.4l-0.6 0.2M68.9 65.6l0.1 1.5M24.6 68.5l-1.6 1.4M22.2 70.7l-1.0 0.9M61.7 32.7l-1.1 0.3M65.5 0.9l-0.1 -1.3M64.4 29.2l-1.2 -0.8M108.8 26.2l1.6 -0.2M111.1 26.2l1.8 -0.2M-8.6 40.0l-2.1 0.2M38.7 15.7l-1.7 -0.9M92.2 32.1l1.6 0.1M82.4 23.5l1.2 -0.6M84.4 22.9l0.8 -0.4M54.1 25.0l-0.7 -0.4M85.1 6.9l0.8 -1.1M108.6 52.8l1.3 0.7M72.0 5.2l0.2 -0.9M72.6 3.1l0.3 -1.6M129.0 23.1l2.0 -0.3M-5.2 27.4l-1.7 -0.1M-9.1 27.2l-2.1 -0.1"/>
<path stroke="#b9ac72" stroke-width="0.6" stroke-opacity=".95" d="M64.7 5.5l-0.2 -2.0M6.1 67.0l-1.9 1.1M77.0 63.6l0.3 0.9M119.0 43.4l1.2 0.3M11.1 29.1l-1.8 -0.1M25.9 82.8l-1.6 2.0M9.0 12.7l-2.4 -0.8M97.9 1.6l0.9 -0.9M99.5 -0.0l1.3 -1.3M123.3 62.5l1.5 0.8M126.0 63.8l1.7 1.0M98.4 44.8l0.9 0.4M137.1 56.4l2.9 1.0M42.1 62.9l-0.8 1.0M36.0 54.8l-1.2 0.9M-0.2 46.8l-2.4 0.5M33.1 28.8l-1.5 -0.1M0.1 3.0l-1.8 -0.8M-2.6 2.0l-1.8 -0.8M91.0 88.3l1.0 2.4M34.3 49.7l-1.5 0.8M102.9 16.8l1.0 -0.4M77.7 57.1l0.4 1.0M48.1 18.4l-1.1 -0.7M7.9 75.5l-1.5 1.1M2.9 68.7l-1.3 0.7M103.2 22.8l1.2 -0.3M136.5 65.2l1.4 0.7M102.0 7.8l1.3 -0.8M122.2 -2.1l2.0 -1.2M125.1 -4.1l1.9 -1.2M4.9 49.2l-1.9 0.5M135.7 19.4l2.3 -0.4M139.2 19.2l1.8 -0.3M41.0 -3.9l-0.6 -0.8M51.8 45.3l-0.8 0.7M119.5 50.9l1.1 0.4M74.7 54.9l0.3 0.8M16.9 27.2l-2.0 -0.2M122.4 67.7l1.5 1.0M125.0 69.1l1.7 1.1M-3.6 35.8l-1.9 0.1M70.9 55.2l0.3 1.6M37.9 27.4l-1.3 -0.2M107.9 47.3l1.1 0.4M84.3 51.6l0.8 0.9M54.3 57.6l-0.8 1.6M52.9 59.9l-0.5 1.1M16.1 73.0l-1.5 1.2M69.5 79.0l0.1 1.4M2.6 35.6l-2.6 0.2M-1.0 36.1l-2.5 0.2M136.7 47.7l1.8 0.4M-1.3 16.1l-2.2 -0.5M-5.2 15.2l-2.4 -0.5M16.1 16.6l-1.5 -0.4M13.7 16.3l-1.1 -0.3M123.4 51.8l1.4 0.5M130.8 -7.7l2.5 -1.5M78.1 68.0l0.4 1.3M35.6 43.5l-1.2 0.5M33.7 44.2l-1.0 0.4M75.5 72.4l0.3 1.5M98.9 81.5l0.7 1.1M6.2 41.1l-2.4 0.4M23.2 56.7l-1.7 1.0M-11.4 11.0l-2.1 -0.5M113.8 65.7l1.2 0.9M115.7 67.4l1.2 0.9M-2.5 24.6l-2.3 -0.2M9.9 79.6l-1.8 1.5M7.1 81.8l-1.4 1.1M113.8 81.6l1.2 1.3M58.1 -3.2l-0.3 -1.3M76.2 84.0l0.3 1.5M116.3 26.1l1.7 -0.2M79.0 30.8l0.7 -0.0M60.5 23.8l-0.5 -0.6M125.9 72.9l1.9 1.3M84.0 43.3l0.6 0.4M122.3 58.1l2.2 1.1M125.4 59.7l2.0 1.0M126.2 36.6l1.0 0.1M47.7 89.3l-0.5 1.6M-12.2 9.8l-1.7 -0.5M25.4 11.5l-1.4 -0.7M45.8 79.7l-0.6 1.4M145.7 10.6l1.2 -0.3M52.9 64.2l-0.5 1.2M52.5 66.0l-0.3 0.7M119.5 31.7l1.1 -0.0M128.1 39.7l1.8 0.2M131.6 40.0l1.7 0.2M22.7 72.2l-1.1 1.0M126.2 23.7l1.2 -0.2M129.0 23.4l2.1 -0.3M88.2 16.9l0.9 -0.6M-4.2 76.6l-1.7 1.1M83.8 75.0l0.4 0.9M16.2 34.6l-2.3 0.1M54.4 7.3l-0.5 -1.1M83.5 -6.1l0.4 -1.0M84.6 -8.1l0.5 -1.1M81.3 79.1l0.5 1.5M-10.5 52.5l-1.6 0.4M57.7 69.7l-0.3 1.2M57.8 71.9l-0.3 1.4M55.8 88.9l-0.5 2.3M12.6 32.1l-1.9 0.0M116.7 56.0l1.9 0.9M87.3 20.4l1.2 -0.7M115.2 49.2l2.0 0.7M117.9 50.3l1.3 0.5M66.0 61.6l-0.0 1.3M81.0 54.9l0.8 1.4M146.2 34.6l3.1 0.1M71.9 18.6l0.3 -0.7M147.2 81.3l1.7 1.0M136.8 38.4l1.6 0.2M-0.7 54.8l-2.3 0.8M-0.2 -5.1l-2.1 -1.2M-3.8 -7.5l-2.7 -1.5M6.7 86.0l-1.0 0.9"/>
<path stroke="#f0efe6" stroke-width="0.8" stroke-opacity=".95" d="M56.6 20.8l-0.7 -0.7M68.8 17.4l0.1 -0.8M-0.4 87.0l-1.9 1.6M40.0 25.2l-1.1 -0.3M37.6 25.0l-1.0 -0.2M58.1 41.4l-0.4 0.5M69.0 43.7l0.2 1.1M59.9 6.9l-0.4 -1.5M49.6 28.5l-1.1 -0.2M47.7 28.4l-0.9 -0.1M37.7 62.2l-0.8 0.8M36.1 64.4l-1.0 1.0M53.5 39.4l-0.9 0.5M51.4 66.1l-0.9 1.9M140.6 37.1l2.3 0.2M144.7 37.3l1.9 0.1M95.6 63.7l1.1 1.3M94.7 26.8l1.1 -0.2M96.6 26.8l1.1 -0.2M80.3 30.5l1.0 -0.0M135.9 42.8l2.1 0.3M87.2 40.7l1.1 0.5M81.2 11.2l0.6 -0.9M82.0 9.4l0.8 -1.1M79.0 28.5l1.0 -0.3M128.5 -1.2l1.7 -0.9M132.0 -2.6l1.4 -0.7M77.7 13.9l0.5 -0.8M32.1 20.2l-1.4 -0.5M29.9 19.1l-1.7 -0.6M113.8 0.7l1.4 -0.9M116.4 -0.6l1.5 -1.0M105.8 2.0l0.9 -0.7M107.9 0.6l1.5 -1.2M110.1 -0.6l1.5 -1.1M77.0 25.0l1.0 -0.6M23.2 3.1l-1.7 -1.1M20.8 1.9l-0.9 -0.6M128.2 3.0l1.2 -0.6M131.0 2.4l1.6 -0.7M106.8 33.4l1.2 0.1M83.8 36.7l1.2 0.4M103.5 41.2l1.4 0.4M58.6 31.3l-1.3 -0.0M101.9 35.9l1.0 0.1M103.8 36.4l0.9 0.1M82.0 57.9l0.8 1.4M118.7 1.2l1.5 -0.9M121.9 -0.7l1.4 -0.8M35.6 -1.2l-0.7 -0.8M34.1 -2.7l-0.6 -0.6M89.3 73.3l0.6 1.1M62.0 27.9l-1.0 -0.6M47.1 51.3l-1.2 1.2M113.4 68.4l1.1 0.9M122.8 6.1l2.1 -1.0M110.4 34.1l1.5 0.1M99.5 21.1l1.9 -0.6M101.9 20.2l1.3 -0.4M89.0 29.4l1.7 -0.2M94.6 31.3l1.6 0.0M71.1 71.4l0.1 1.4M71.2 73.8l0.2 1.5M124.2 15.6l1.5 -0.4M127.5 15.0l2.3 -0.6M63.7 74.1l-0.1 1.9M111.2 39.2l2.0 0.3M113.8 39.6l1.7 0.3M82.7 -0.9l0.4 -0.8M83.5 -2.7l0.5 -1.1M41.7 38.7l-1.4 0.4M106.9 66.9l1.7 1.5M61.0 84.1l-0.2 1.7M60.8 86.5l-0.1 1.3M127.5 25.1l1.4 -0.1M130.4 24.7l1.7 -0.2M133.3 24.6l2.1 -0.2M13.4 50.2l-1.5 0.5M119.0 46.9l1.2 0.3M121.6 47.3l1.5 0.4M7.2 3.7l-2.1 -0.9M3.6 2.1l-1.4 -0.7M32.9 66.9l-1.2 1.3M30.8 69.3l-1.0 1.0M4.4 4.5l-2.5 -1.1M1.2 3.1l-2.4 -1.0M59.3 22.1l-0.7 -0.9M57.6 27.4l-0.7 -0.3M56.0 27.3l-1.0 -0.4M83.3 31.9l1.0 0.0M85.4 31.6l1.4 0.0M112.0 16.3l1.4 -0.5M76.6 28.4l1.5 -0.4M79.1 24.9l1.0 -0.6M132.7 43.1l2.3 0.4M135.8 43.9l1.4 0.3M75.1 39.3l0.8 0.8M101.9 40.6l1.3 0.3M78.1 19.9l0.6 -0.6M79.2 18.4l0.8 -0.8M64.2 44.0l-0.2 0.9M82.9 76.6l0.3 0.9"/>
<path stroke="#f0efe6" stroke-width="0.6" stroke-opacity=".95" d="M55.4 19.4l-0.9 -0.9M69.2 15.7l0.1 -0.8M3.3 84.4l-2.1 1.7M69.3 45.3l0.2 1.3M59.9 4.4l-0.4 -1.5M34.5 66.5l-0.9 1.0M51.9 40.3l-1.0 0.5M34.8 64.2l-1.3 1.3M32.8 66.1l-1.3 1.3M31.1 68.4l-1.3 1.3M148.7 37.8l1.7 0.1M93.8 62.3l1.1 1.3M97.2 65.3l0.8 0.9M98.6 26.5l1.5 -0.2M82.1 31.1l0.9 -0.0M89.3 41.9l1.1 0.5M83.1 8.0l0.4 -0.6M80.6 27.6l1.2 -0.3M135.1 -4.7l1.8 -1.0M27.6 18.5l-1.4 -0.5M119.0 -2.0l1.7 -1.1M63.8 32.7l-1.3 0.4M18.3 0.9l-1.6 -1.0M109.2 33.6l1.4 0.1M111.5 34.0l1.8 0.1M85.8 37.4l1.6 0.5M105.6 41.8l1.3 0.4M105.7 37.1l1.4 0.2M83.5 60.0l0.6 1.0M125.2 -2.3l1.8 -1.1M32.9 -4.4l-1.1 -1.2M90.7 75.4l0.5 0.9M115.2 70.8l1.0 0.9M117.4 72.7l1.1 0.9M125.6 5.0l1.3 -0.6M112.5 34.4l1.3 0.1M114.7 34.6l1.7 0.1M74.9 32.2l1.9 0.1M91.6 29.4l2.0 -0.2M78.7 18.7l0.8 -0.8M97.3 32.0l1.3 0.0M71.6 76.3l0.2 1.6M130.7 14.5l1.5 -0.4M63.6 76.8l-0.1 1.3M63.9 79.6l-0.1 1.9M84.5 -4.4l0.5 -1.1M109.1 69.1l1.5 1.3M111.6 71.1l1.6 1.4M10.4 51.9l-1.7 0.6M123.9 48.4l1.9 0.6M-0.0 0.7l-2.0 -0.9M28.8 71.7l-1.4 1.4M-2.0 1.6l-2.4 -1.0M58.4 20.6l-0.4 -0.6M114.9 15.9l1.2 -0.4M117.6 14.8l1.1 -0.4M80.4 23.8l0.9 -0.5M104.0 40.9l1.2 0.3M105.8 41.9l0.9 0.2M79.9 41.4l0.5 0.4M64.1 45.5l-0.2 0.9M83.7 78.9l0.3 1.0M84.8 81.0l0.6 1.6"/>
<path stroke="#d2d6d6" stroke-width="0.6" stroke-opacity=".95" d="M144.9 19.5l2.2 -0.3M93.4 12.2l1.0 -0.7M95.2 11.1l0.8 -0.6M133.1 8.1l2.1 -0.8M138.9 6.1l1.8 -0.6M115.9 36.3l1.1 0.1M117.9 36.8l1.5 0.1M61.4 34.1l-1.2 0.6M130.4 22.1l1.7 -0.3M140.2 0.7l1.5 -0.6M86.9 30.8l1.5 -0.1M78.3 18.8l0.6 -0.7M119.4 13.8l1.1 -0.4M57.5 12.0l-0.7 -1.5M56.5 9.8l-0.7 -1.5M125.4 -6.2l1.5 -1.0M82.6 31.9l1.2 0.0M59.1 39.5l-0.7 0.7M110.0 5.7l1.0 -0.6M112.0 4.5l1.2 -0.7M21.7 1.0l-1.1 -0.7M24.0 39.5l-1.5 0.3M21.3 40.3l-2.0 0.4M141.4 59.8l1.5 0.6M136.5 34.5l1.5 0.1M113.9 65.2l1.9 1.4M116.5 67.1l1.5 1.1M118.8 69.4l1.1 0.8M134.5 28.3l1.8 -0.1M-2.1 82.8l-2.2 1.6M-4.9 84.7l-1.8 1.3M84.6 23.8l0.8 -0.4M138.6 68.8l1.5 0.8M140.3 35.5l2.3 0.1M21.7 10.4l-1.6 -0.7M58.3 17.7l-0.4 -0.6M37.4 0.4l-0.8 -0.9M25.3 65.2l-1.5 1.2M139.9 23.0l2.4 -0.3M105.7 -4.8l1.1 -1.0M110.2 16.3l1.1 -0.4M142.2 -1.0l1.5 -0.6M60.3 22.6l-0.4 -0.6M128.8 48.9l1.2 0.3M120.6 -9.7l1.4 -1.1M67.7 21.6l0.1 -0.9M137.2 70.7l1.8 1.0M87.5 27.9l1.4 -0.2M92.5 51.5l0.9 0.7M69.2 18.2l0.1 -0.7M142.0 87.8l2.1 1.6M28.4 69.9l-1.4 1.4M26.5 72.3l-1.2 1.2M24.3 74.4l-1.2 1.2M86.3 43.8l1.2 0.8M88.7 11.2l1.0 -1.0M89.9 7.7l0.9 -0.9M97.6 24.0l1.8 -0.4M100.3 23.4l1.5 -0.4M131.9 19.8l2.0 -0.4M134.8 19.5l1.9 -0.4M95.6 23.9l1.7 -0.5M-13.3 77.0l-2.6 1.5M118.3 20.7l1.1 -0.2M120.8 19.9l1.4 -0.3M8.1 30.9l-1.5 -0.0M91.1 25.6l0.9 -0.2M144.2 61.9l2.1 0.8M72.0 47.1l0.3 1.0M56.4 36.1l-0.9 0.4M34.4 87.0l-0.7 1.2M89.9 34.5l1.2 0.2"/>
<path stroke="#aa9c52" stroke-width="0.8" stroke-opacity=".95" d="M-6.1 61.5l-1.7 0.7M-9.0 63.2l-2.3 0.9M-11.9 64.6l-2.0 0.8M106.0 13.8l1.0 -0.5M45.2 80.1l-0.6 1.3M43.8 83.0l-0.5 1.2M42.4 86.0l-0.5 1.2M29.6 26.1l-0.8 -0.1M27.7 26.0l-1.1 -0.2M88.7 -1.0l1.1 -1.7M110.8 69.7l1.6 1.4M8.9 -6.3l-2.1 -1.3M55.1 4.1l-0.5 -1.2M54.2 2.3l-0.6 -1.4M10.5 50.5l-2.3 0.8M7.3 51.7l-1.3 0.4M99.8 67.9l1.1 1.2M25.8 73.8l-1.0 1.0M13.2 38.7l-1.1 0.2M83.5 21.3l1.2 -0.8M40.0 36.4l-1.3 0.2M-0.1 8.4l-2.2 -0.7M19.5 82.9l-1.4 1.5M17.3 85.5l-1.6 1.7M97.4 12.7l1.1 -0.7M99.3 11.5l0.8 -0.5M20.7 38.8l-1.5 0.2M31.2 28.0l-1.5 -0.1M22.9 23.6l-1.9 -0.3M20.0 23.7l-1.7 -0.3M33.8 71.9l-1.2 1.4M17.5 6.0l-1.3 -0.7M14.8 4.9l-1.4 -0.7M54.0 40.1l-1.0 0.7M52.6 41.2l-0.7 0.5M0.3 -2.9l-1.7 -0.9M-2.2 -4.5l-1.1 -0.6M45.4 1.0l-1.0 -1.5M35.1 -8.1l-1.3 -1.6M22.8 37.5l-1.6 0.2M124.4 76.9l1.2 1.0M127.1 78.9l1.8 1.4M53.2 42.1l-1.0 0.8M52.0 43.3l-0.8 0.6M60.0 72.6l-0.3 1.6M59.4 74.7l-0.2 0.9M16.5 70.3l-1.2 0.9M26.6 81.7l-1.4 1.7M24.4 84.8l-1.7 2.1M78.3 54.5l0.5 1.0M15.6 48.3l-1.0 0.3M13.2 49.0l-1.1 0.4M55.2 75.8l-0.3 1.0M54.7 78.0l-0.4 1.6M5.1 11.3l-1.8 -0.6M144.8 15.2l2.6 -0.6M117.2 60.8l1.8 1.1M120.0 62.9l1.2 0.7M78.7 73.9l0.5 1.7M62.8 51.5l-0.2 1.0M41.9 31.8l-1.2 0.0M76.6 71.8l0.4 1.4M77.0 73.6l0.3 1.2M33.7 31.9l-1.2 0.0M31.0 32.0l-2.0 0.0M126.0 54.8l1.4 0.6M135.7 11.5l1.8 -0.5M139.8 10.7l1.9 -0.5M2.3 39.6l-1.9 0.2M19.0 64.2l-1.1 0.8M3.2 23.4l-1.6 -0.2M18.9 78.8l-1.9 1.8M26.3 8.6l-2.1 -1.2M10.2 40.4l-1.5 0.2M7.7 40.6l-1.4 0.2M101.7 76.0l0.7 0.9M103.1 78.0l0.8 1.0M82.0 43.7l1.3 1.0M89.6 65.0l0.8 1.2M90.8 66.6l0.7 1.0M26.3 51.1l-1.3 0.6M90.0 12.6l1.1 -0.9M83.3 56.0l0.4 0.7M127.8 43.4l1.5 0.3M137.4 61.6l1.9 0.8M140.6 63.1l1.9 0.8M145.9 46.5l2.4 0.5M50.6 55.0l-1.1 1.7M72.6 73.3l0.2 1.1M73.1 75.4l0.2 1.4M15.9 62.9l-1.7 1.0M13.5 64.0l-1.7 1.0M128.8 14.6l2.3 -0.6M102.0 50.6l1.4 0.8M104.2 52.1l1.6 0.9M6.9 74.2l-1.7 1.2M43.3 18.7l-1.5 -0.8M41.0 17.6l-1.4 -0.7M92.3 77.8l0.9 1.6M110.1 58.3l1.7 1.1M34.7 16.0l-1.4 -0.7M12.6 64.7l-1.9 1.1M78.4 49.6l0.6 0.9M18.0 66.2l-1.1 0.8M15.8 67.9l-1.6 1.2M105.7 73.2l1.3 1.3M108.3 75.1l1.2 1.3M81.5 62.2l0.6 1.2M61.1 -2.9l-0.3 -1.9M139.5 33.7l2.6 0.1M143.9 33.4l1.8 0.0M49.3 7.4l-0.9 -1.2M47.9 5.3l-0.9 -1.3M78.7 79.3l0.4 1.6M79.7 82.0l0.6 2.2M80.5 84.9l0.6 2.2M50.5 81.4l-0.4 1.3M145.6 66.0l2.5 1.1M50.4 38.6l-1.5 0.6M66.6 55.2l-0.0 1.8M-1.8 72.1l-2.5 1.5M124.7 81.7l1.4 1.3M127.1 83.9l1.0 0.9M65.7 69.1l-0.0 1.4M90.3 59.1l0.7 0.8M62.0 -1.4l-0.2 -1.1M-3.4 77.7l-1.8 1.2M16.1 35.6l-1.6 0.1M-2.4 43.3l-1.8 0.3M80.2 -4.2l0.4 -1.1M80.9 -6.7l0.5 -1.4"/>
<path stroke="#9c8c46" stroke-width="1.2" stroke-opacity=".95" d="M46.4 37.0l-1.4 0.4M45.0 78.4l-0.9 1.9M51.3 28.5l-1.3 -0.2M45.1 74.4l-0.8 1.5M20.7 78.0l-1.8 1.8M18.6 80.4l-1.5 1.5M15.7 -6.3l-2.2 -1.6M2.3 -6.3l-1.2 -0.7M9.0 16.7l-2.3 -0.6M41.5 34.4l-1.2 0.1M83.4 56.9l0.8 1.2M17.3 4.0l-2.0 -1.1M35.1 37.5l-1.5 0.3M86.7 55.8l0.9 1.1M38.5 6.3l-1.1 -0.9M33.4 32.6l-1.3 0.1M28.8 33.2l-1.1 0.1M136.6 74.0l2.5 1.6M128.8 77.8l2.4 1.8M117.9 72.6l2.1 1.7M-3.8 54.2l-2.2 0.7M14.3 -1.6l-1.6 -1.0M34.8 54.8l-1.7 1.2M82.8 80.0l0.5 1.6M49.2 27.4l-1.1 -0.2M55.7 22.5l-0.7 -0.6M70.7 13.9l0.3 -1.1M41.5 50.0l-1.6 1.2M117.2 10.7l2.1 -0.8M102.6 73.0l1.3 1.5M105.0 75.4l1.1 1.2M0.4 62.1l-2.8 1.3M40.0 5.6l-1.5 -1.4M16.7 12.3l-2.0 -0.7M103.9 42.7l1.5 0.5M48.2 9.6l-1.2 -1.4M132.2 -5.7l1.8 -1.0M38.4 2.4l-0.9 -0.8M139.9 53.9l2.6 0.8M97.4 21.0l1.1 -0.4M37.2 58.7l-1.2 1.1M59.0 8.0l-0.3 -1.0M52.0 53.4l-1.1 1.6M119.5 6.3l1.0 -0.5M35.6 71.3l-0.7 0.9"/>
<path stroke="#9c8c46" stroke-width="0.6" stroke-opacity=".95" d="M44.5 37.6l-0.9 0.2M131.3 7.1l1.9 -0.7M136.7 6.8l1.5 -0.5M43.6 78.5l-0.8 1.5M102.3 81.9l1.2 1.7M18.8 58.1l-1.5 0.8M28.2 74.8l-0.9 1.0M26.6 76.8l-0.8 0.8M1.6 30.7l-1.3 -0.0M100.7 51.7l1.2 0.7M37.0 71.8l-1.1 1.4M48.3 24.0l-1.1 -0.5M0.4 -2.7l-1.8 -0.9M103.5 65.9l1.6 1.5M105.5 68.1l1.2 1.2M9.7 -10.5l-2.2 -1.6M34.7 12.0l-1.7 -1.0M32.7 10.7l-1.7 -1.0M32.3 72.2l-1.1 1.3M-0.3 -7.9l-2.0 -1.2M2.7 14.9l-1.3 -0.3M104.9 50.7l1.1 0.6M-9.3 20.3l-2.2 -0.3M-12.8 19.7l-1.6 -0.2M57.0 79.9l-0.4 2.1M69.0 86.9l0.1 2.3M-6.4 68.8l-2.0 1.0M11.9 1.4l-1.9 -1.0M51.1 34.6l-0.7 0.1M53.9 77.9l-0.5 1.6M53.4 80.5l-0.5 1.8M32.7 38.4l-1.3 0.3M128.7 82.9l1.4 1.2M73.9 71.1l0.2 1.2M140.7 47.2l2.1 0.4M42.8 82.2l-0.6 1.4M36.7 5.2l-1.0 -0.9M35.2 3.6l-0.9 -0.7M-2.2 54.7l-2.3 0.8M31.0 33.0l-2.0 0.1M21.0 46.8l-1.7 0.6M136.5 75.8l2.3 1.4M24.1 33.7l-1.4 0.1M23.4 79.1l-1.7 1.9M20.9 82.1l-1.6 1.8M18.1 84.8l-1.9 2.1M142.8 78.7l1.5 1.0M98.2 61.5l0.8 0.7M135.3 83.3l2.5 1.9M54.5 72.6l-0.6 1.9M53.7 75.0l-0.5 1.8M123.1 77.7l1.4 1.2M-10.1 56.6l-2.4 0.8M28.4 6.7l-1.0 -0.6M26.1 5.4l-1.4 -0.9M9.8 -4.6l-1.6 -1.0M104.3 57.5l1.4 1.0M30.6 58.1l-1.7 1.2M84.8 85.1l0.5 1.7M115.6 19.0l1.0 -0.3M36.9 41.6l-1.9 0.6M5.7 43.2l-1.9 0.4M2.6 43.9l-2.1 0.4M47.5 27.4l-1.3 -0.3M-7.1 6.7l-2.2 -0.7M-11.4 5.7l-2.7 -0.9M6.9 28.1l-1.8 -0.1M4.2 27.6l-1.2 -0.1M54.1 21.6l-0.8 -0.6M1.7 17.2l-1.3 -0.3M49.5 50.8l-1.2 1.3M125.2 -1.3l1.5 -0.9M127.7 -2.9l1.5 -0.9M49.3 15.9l-0.9 -0.7M47.6 14.9l-0.8 -0.7M39.7 51.8l-1.2 0.9M123.4 8.8l2.4 -1.0M132.4 34.1l1.5 0.1M-10.9 73.9l-2.1 1.2M114.5 49.0l1.5 0.6M13.6 11.1l-1.7 -0.6M10.3 10.4l-1.3 -0.5M113.6 66.3l1.9 1.4M108.4 44.6l1.2 0.4M139.4 81.0l2.1 1.5M30.4 34.9l-1.3 0.1M28.1 35.5l-1.1 0.1M46.7 7.3l-0.9 -1.1M123.6 31.1l1.0 -0.0M43.8 71.3l-0.6 1.1M42.9 73.7l-0.6 1.1M147.7 -7.7l2.0 -1.0M146.7 56.3l1.4 0.4M33.9 61.9l-1.1 1.0M115.0 75.6l1.7 1.6M-8.3 24.0l-1.5 -0.2M-11.4 23.5l-1.4 -0.1M38.4 -8.0l-0.8 -1.1M36.8 -10.4l-0.9 -1.3M124.6 4.5l1.5 -0.7M8.6 23.3l-1.9 -0.3M5.1 23.0l-2.8 -0.4M33.0 75.7l-1.1 1.4M36.7 21.1l-1.5 -0.5"/>
<path stroke="#aa9c52" stroke-width="0.6" stroke-opacity=".95" d="M107.7 13.0l1.3 -0.6M109.5 12.3l0.7 -0.3M25.7 26.2l-1.4 -0.2M87.2 1.1l0.6 -0.9M90.2 -3.1l0.6 -0.9M113.1 72.3l1.2 1.0M115.7 74.7l1.6 1.5M5.7 -8.1l-1.3 -0.9M53.8 0.3l-0.5 -1.1M4.2 53.0l-2.4 0.8M101.4 69.6l1.2 1.3M23.5 76.1l-1.6 1.6M21.2 78.4l-1.5 1.6M10.5 39.5l-1.4 0.2M85.3 20.7l1.1 -0.7M138.9 39.4l1.4 0.1M-3.8 7.2l-2.1 -0.7M101.4 10.5l1.1 -0.7M17.8 39.0l-1.7 0.3M14.9 39.8l-1.7 0.3M28.9 28.1l-1.8 -0.2M65.8 43.9l-0.1 1.1M17.2 23.0l-1.4 -0.2M32.0 74.1l-1.3 1.6M30.4 76.4l-0.8 1.0M12.3 3.4l-1.9 -0.9M-5.0 -5.7l-1.7 -0.9M43.9 -1.3l-1.1 -1.6M33.2 -10.6l-0.9 -1.2M20.2 37.9l-2.0 0.3M17.7 38.7l-1.7 0.2M129.6 81.1l1.4 1.2M59.4 77.0l-0.2 1.1M13.9 72.5l-1.3 1.0M11.3 74.7l-2.0 1.5M22.1 87.8l-1.6 2.0M54.0 80.1l-0.4 1.5M1.5 10.5l-2.2 -0.7M148.4 14.7l1.5 -0.3M79.5 76.5l0.6 2.0M80.1 79.2l0.4 1.3M62.6 53.8l-0.2 1.1M39.6 32.6l-1.7 0.0M77.9 75.4l0.2 0.9M129.2 56.0l2.1 0.8M132.2 57.4l2.2 0.9M144.0 10.0l3.2 -0.9M5.1 39.3l-1.5 0.2M-0.5 40.3l-2.0 0.3M16.9 65.9l-1.6 1.1M73.0 25.5l0.4 -0.4M74.0 24.4l0.5 -0.5M0.3 23.0l-1.2 -0.2M16.5 81.6l-1.5 1.5M13.7 83.9l-1.8 1.8M64.8 10.5l-0.1 -0.9M23.7 7.2l-1.5 -0.8M21.2 5.7l-1.5 -0.8M5.3 41.3l-1.2 0.2M104.8 79.8l0.9 1.2M83.8 44.8l0.9 0.7M92.1 68.3l0.8 1.2M24.5 52.5l-1.5 0.7M84.3 57.6l0.4 0.7M131.1 44.8l2.4 0.5M134.6 45.1l1.8 0.4M143.8 64.4l2.3 1.0M2.8 40.9l-2.9 0.4M-1.0 41.6l-1.7 0.3M-4.8 42.3l-2.1 0.3M149.8 47.2l1.9 0.4M49.6 57.6l-0.9 1.3M73.5 77.4l0.1 0.9M132.4 13.3l2.5 -0.7M136.0 12.4l2.2 -0.6M106.3 53.7l1.1 0.6M3.8 76.3l-1.3 1.0M94.2 80.6l1.0 1.8M95.7 83.5l1.1 1.9M112.3 60.3l1.7 1.1M114.9 61.8l1.8 1.2M32.7 15.3l-0.8 -0.4M10.2 66.4l-1.4 0.8M7.8 68.0l-1.7 1.1M13.9 69.9l-1.6 1.2M11.0 44.5l-2.2 0.5M8.3 45.5l-2.1 0.5M83.3 64.4l0.8 1.6M34.3 53.8l-1.6 1.1M60.7 -5.3l-0.3 -1.7M60.4 -7.7l-0.3 -1.8M148.3 33.7l3.5 0.1M50.0 83.9l-0.6 1.7M149.7 67.9l2.0 0.9M48.5 39.5l-1.3 0.6M66.9 57.6l-0.0 1.4M-5.1 74.9l-2.8 1.7M36.1 79.7l-1.4 2.2M34.1 82.3l-0.8 1.3M129.2 86.4l1.4 1.3M66.0 71.2l-0.0 0.9M91.9 60.8l0.8 0.9M93.2 62.7l0.9 1.0M62.7 0.4l-0.2 -1.1M61.9 -3.3l-0.2 -1.1M-6.9 80.3l-2.8 1.9M-10.4 82.9l-1.9 1.2M13.8 35.7l-1.4 0.1M11.5 36.2l-1.3 0.1M-5.5 44.3l-2.1 0.4M-8.7 45.2l-2.4 0.4M82.1 -9.1l0.5 -1.4"/>
<path stroke="#c0cadb" stroke-width="0.8" stroke-opacity=".95" d="M81.7 30.2l1.1 -0.1M47.4 31.8l-0.9 0.0M68.1 24.3l0.3 -1.3M56.6 47.9l-0.9 1.5M108.4 28.9l1.2 -0.1M132.6 54.6l2.0 0.7M136.1 56.1l1.7 0.6M88.7 36.9l0.9 0.2M60.6 23.3l-0.6 -0.8M98.4 28.9l1.2 -0.1M100.5 29.0l1.7 -0.1M90.8 27.4l1.1 -0.2M92.8 27.1l1.3 -0.2M89.9 28.4l2.0 -0.3M86.3 31.7l1.4 0.0M92.7 5.4l1.0 -1.0M94.6 4.4l1.2 -1.2M62.9 33.9l-1.1 0.6M119.4 30.2l2.1 -0.0M122.6 30.1l1.3 -0.0M62.0 20.9l-0.3 -0.8M71.2 30.3l1.0 -0.2M-11.0 1.0l-2.4 -0.9M-15.5 -0.8l-2.5 -1.0M30.1 12.2l-1.2 -0.6M136.2 5.8l2.1 -0.8M139.1 4.9l1.8 -0.7M45.2 7.0l-0.7 -0.9M44.1 5.4l-0.9 -1.0M133.6 -4.7l2.2 -1.2M136.6 -5.8l1.6 -0.9M100.7 11.9l1.0 -0.6M102.7 10.6l1.1 -0.7M134.1 52.4l2.1 0.7M137.0 53.4l1.7 0.5M55.3 47.5l-0.6 0.8M46.0 33.5l-1.3 0.1M84.5 23.1l1.1 -0.5M91.0 38.5l1.0 0.3M4.9 45.3l-1.5 0.3M1.4 46.6l-2.2 0.5M110.7 -5.4l1.4 -1.2M112.6 -7.0l1.1 -0.9M60.3 34.7l-1.1 0.6M125.1 61.9l2.3 1.2M49.2 -0.6l-0.7 -1.2M48.2 -2.5l-0.5 -0.9M69.3 24.9l0.6 -1.6M103.1 0.7l1.3 -1.1M104.9 -0.8l0.8 -0.7M0.8 48.2l-1.2 0.3M-2.2 49.3l-2.0 0.5M95.1 76.2l0.7 1.1M64.2 19.6l-0.2 -0.8M37.2 40.0l-1.8 0.5M34.8 41.4l-1.0 0.3M101.5 33.0l1.7 0.1M99.0 41.7l1.5 0.5M68.1 3.6l0.1 -1.2M68.3 1.7l0.1 -1.4M68.8 -0.3l0.1 -1.5M62.6 29.3l-0.9 -0.5M86.8 38.4l1.1 0.4M89.1 39.4l1.4 0.5M90.7 44.6l1.8 1.0M92.7 46.4l1.5 0.9M135.4 28.4l2.4 -0.1M138.8 28.5l2.6 -0.1M133.8 10.6l1.5 -0.5M136.6 10.1l1.8 -0.6M75.7 -6.2l0.2 -1.0M75.9 -8.4l0.3 -1.3M17.4 -2.5l-1.6 -1.1M14.7 -4.3l-1.5 -1.0M51.6 2.7l-0.8 -1.6M133.3 82.3l2.1 1.6M76.9 27.7l1.6 -0.6M23.7 79.1l-1.6 1.7M21.9 81.7l-1.5 1.6M84.2 67.3l0.5 1.1M64.7 46.6l-0.2 1.1M64.7 48.6l-0.2 1.4M75.5 21.3l0.4 -0.5M76.3 20.1l0.5 -0.7M38.8 23.9l-1.3 -0.4M111.1 14.3l1.3 -0.5M81.9 38.7l0.7 0.4M73.6 22.5l0.6 -0.8M74.7 21.4l0.6 -0.8M22.1 9.4l-1.3 -0.6M100.4 5.3l1.2 -0.9M104.5 29.8l1.2 -0.1M73.2 54.4l0.4 1.5M82.2 37.1l1.3 0.5M91.8 2.3l0.6 -0.8M93.0 0.9l0.7 -0.8M45.2 14.4l-0.9 -0.7M43.5 13.3l-1.1 -0.8M96.0 5.9l1.5 -1.3M98.0 4.1l1.3 -1.2M137.1 29.5l2.0 -0.1M5.0 58.6l-1.5 0.6M130.9 15.1l1.4 -0.4M96.6 53.4l1.2 0.9M98.1 54.7l1.0 0.8M33.2 70.9l-1.1 1.3M31.7 72.5l-0.6 0.7M58.9 22.3l-0.5 -0.6"/>
<path stroke="#c0cadb" stroke-width="0.6" stroke-opacity=".95" d="M83.2 30.5l0.9 -0.1M55.9 50.1l-0.7 1.2M110.6 28.9l1.5 -0.1M139.5 57.6l1.9 0.7M90.6 37.7l1.2 0.3M59.9 21.9l-0.7 -0.9M102.7 29.3l1.3 -0.1M92.5 28.4l1.6 -0.2M88.0 32.0l1.3 0.0M96.1 3.0l1.0 -1.0M72.4 18.5l0.4 -0.9M61.9 19.1l-0.4 -0.9M82.7 18.5l1.3 -1.1M82.1 19.2l0.9 -0.7M28.2 11.7l-0.9 -0.5M142.0 4.2l1.3 -0.5M54.7 45.5l-0.9 1.0M42.7 4.0l-0.5 -0.6M140.0 54.7l1.9 0.6M43.9 33.9l-1.6 0.2M93.3 39.4l1.5 0.4M-2.3 47.2l-2.5 0.6M128.4 63.8l2.6 1.4M131.7 65.8l2.5 1.3M47.3 -4.5l-0.5 -0.9M98.4 41.2l1.5 0.5M96.0 78.3l0.6 1.0M63.7 18.2l-0.2 -0.9M104.1 33.4l1.1 0.1M101.2 42.9l1.5 0.5M142.2 28.2l1.6 -0.1M139.3 9.3l1.5 -0.5M76.8 -10.6l0.4 -1.6M11.9 -5.9l-1.8 -1.2M50.2 0.6l-0.8 -1.5M136.6 85.7l3.0 2.3M20.0 84.1l-1.1 1.3M85.6 69.2l0.6 1.1M-3.1 12.8l-1.5 -0.4M-6.7 11.8l-2.9 -0.8M55.1 29.2l-0.7 -0.1M113.5 14.0l1.7 -0.7M83.1 39.8l0.6 0.3M19.2 8.6l-2.0 -1.0M102.0 3.9l0.8 -0.7M4.8 20.9l-2.0 -0.3M74.0 56.9l0.5 1.7M94.3 -0.6l0.9 -1.1M42.1 11.9l-0.9 -0.7M99.9 2.3l1.0 -0.9M140.2 29.4l1.8 -0.0M2.0 60.1l-1.6 0.7M85.7 29.4l0.8 -0.1M133.7 15.1l1.3 -0.3M99.7 55.9l0.8 0.6M30.4 74.3l-0.7 0.8"/>
<path stroke="#e8e6d4" stroke-width="0.6" stroke-opacity=".95" d="M74.8 40.4l0.7 0.7M86.5 -4.1l0.7 -1.3M127.3 14.4l1.6 -0.5M38.4 32.5l-2.0 0.1M119.0 37.9l1.5 0.2M121.6 38.3l1.8 0.2M124.3 38.4l1.6 0.2M117.6 25.2l1.8 -0.2M119.8 25.0l1.4 -0.2M37.2 85.9l-0.8 1.4M73.9 16.1l0.5 -1.1M106.6 25.1l1.0 -0.2M108.8 25.0l1.8 -0.3M146.9 72.4l2.0 1.0M20.8 31.7l-1.3 0.0M121.3 33.6l1.6 0.0M63.2 24.9l-0.8 -1.4M71.6 43.6l0.3 0.7M72.5 44.9l0.2 0.6M82.6 32.2l1.0 0.0M148.5 3.3l1.6 -0.6M104.4 11.6l1.8 -0.9M60.9 37.2l-0.5 0.4M60.1 38.4l-0.4 0.4M19.6 -9.0l-1.4 -1.2M74.8 59.7l0.5 1.6M43.2 64.7l-0.9 1.2M98.9 8.5l1.2 -0.9M100.6 7.6l1.1 -0.8M-10.7 -3.0l-1.6 -0.7M68.1 17.7l0.1 -1.3M68.3 15.9l0.1 -1.3M88.3 5.6l0.7 -0.8M13.5 81.7l-1.2 1.1M11.0 84.3l-1.2 1.2M112.6 3.4l0.9 -0.6M138.7 9.9l1.6 -0.5M142.1 9.0l1.5 -0.5M139.6 16.3l1.4 -0.3M95.8 -8.6l0.6 -0.8M136.1 0.2l1.3 -0.6M148.0 5.8l2.0 -0.6M14.8 71.2l-1.3 1.0M97.5 -7.9l0.8 -1.1M93.5 15.7l1.3 -0.8M2.2 5.6l-1.8 -0.7M-0.8 4.6l-2.1 -0.8M107.4 30.5l1.5 -0.0M96.5 68.8l0.8 1.0M120.4 24.8l1.4 -0.2M123.6 24.5l2.5 -0.3M121.8 62.9l1.9 1.1M128.6 -2.2l2.6 -1.4M132.2 -4.0l2.0 -1.1M4.0 2.0l-1.8 -0.9M21.8 53.5l-1.4 0.7M86.2 10.1l1.1 -1.2M117.8 75.3l1.2 1.0M120.4 77.3l1.5 1.3M51.9 19.7l-0.8 -0.7M26.7 0.6l-1.3 -1.0M66.6 -6.6l-0.0 -0.9M-6.2 33.1l-2.3 0.0M-14.7 32.9l-3.3 0.1M84.8 23.7l0.9 -0.4M50.4 25.7l-1.2 -0.4M78.0 37.2l0.9 0.5M76.4 6.3l0.4 -1.2M119.3 5.9l1.5 -0.7M125.7 26.9l1.4 -0.1M149.4 -4.5l3.3 -1.4"/>
<path stroke="#bcae64" stroke-width="1.2" stroke-opacity=".95" d="M47.9 71.7l-0.7 1.4M126.7 37.7l1.3 0.1M80.5 66.8l0.5 1.3M66.5 40.4l0.0 0.9M22.2 54.1l-1.3 0.7M9.3 57.4l-2.3 1.0M0.9 26.2l-1.7 -0.1M-2.5 26.0l-2.0 -0.2M123.0 16.6l1.6 -0.4M128.3 71.6l1.8 1.2M45.1 42.2l-1.0 0.5M49.4 27.3l-1.6 -0.4M48.5 39.5l-0.7 0.3M108.6 79.4l1.1 1.3M59.4 71.4l-0.2 0.9M58.7 73.5l-0.2 1.2M72.5 -1.0l0.2 -1.4M26.8 57.5l-1.6 1.0M125.1 70.5l2.5 1.7M60.6 76.5l-0.2 1.6M53.9 16.7l-0.9 -1.1M51.3 58.5l-0.5 0.8M122.4 72.4l2.3 1.7M-0.2 75.0l-1.7 1.1M10.8 34.5l-2.4 0.1M41.7 65.0l-0.8 1.0M99.3 70.5l1.3 1.6M139.7 81.8l2.4 1.7M84.6 46.8l1.0 0.9M107.1 22.6l1.6 -0.3M37.5 72.5l-1.2 1.7M32.9 19.4l-0.9 -0.3M64.8 72.3l-0.1 1.5M33.3 31.7l-1.2 0.0"/>
<path stroke="#bcae64" stroke-width="0.8" stroke-opacity=".95" d="M46.6 74.3l-0.9 1.9M78.8 1.3l0.5 -1.3M40.0 12.2l-1.1 -0.8M37.8 11.4l-1.5 -1.0M57.7 60.2l-0.4 1.4M57.3 62.1l-0.3 0.9M60.8 64.5l-0.2 1.1M60.4 66.8l-0.2 1.3M23.6 18.4l-1.0 -0.3M104.7 63.1l1.2 1.0M106.7 64.8l1.1 1.0M108.0 29.5l1.5 -0.1M110.3 29.8l1.2 -0.0M12.6 80.7l-1.8 1.7M9.9 82.9l-1.4 1.3M66.2 80.7l-0.0 2.0M66.9 83.8l-0.0 2.4M129.7 38.0l2.0 0.2M132.8 38.5l1.8 0.2M48.5 50.2l-1.1 1.1M81.9 52.5l1.0 1.3M83.7 54.3l0.9 1.1M103.0 81.0l1.1 1.5M104.6 83.0l0.8 1.1M67.2 41.9l0.0 0.8M49.0 67.0l-0.6 1.2M48.7 68.9l-0.3 0.7M19.8 56.1l-1.3 0.7M4.0 55.7l-2.3 0.9M0.2 57.3l-2.0 0.8M91.1 50.4l0.6 0.5M92.5 51.9l1.0 0.8M57.7 33.1l-0.8 0.1M119.3 39.9l1.7 0.3M6.0 59.2l-1.6 0.7M2.5 60.7l-1.6 0.7M125.4 16.1l1.0 -0.3M130.7 73.6l1.1 0.7M133.1 75.6l1.5 1.0M22.0 23.1l-1.7 -0.3M19.5 22.4l-1.9 -0.4M118.8 30.5l1.4 -0.0M121.2 30.3l1.4 -0.0M123.7 30.6l1.3 -0.0M68.2 0.5l0.0 -1.0M68.2 -1.6l0.0 -0.9M21.8 51.6l-1.8 0.8M47.3 26.9l-0.9 -0.2M44.1 2.2l-0.5 -0.6M42.8 0.7l-0.7 -1.0M110.3 81.6l1.4 1.6M3.4 82.4l-1.9 1.5M0.6 85.2l-1.5 1.2M29.2 2.7l-1.4 -1.1M82.9 59.7l0.7 1.1M83.9 61.8l0.7 1.2M5.2 76.3l-1.7 1.2M2.4 78.3l-2.1 1.5M3.6 77.6l-2.7 2.0M14.3 49.8l-1.1 0.4M11.8 50.9l-1.4 0.5M124.2 27.8l1.6 -0.1M81.2 6.4l0.7 -1.2M82.1 4.8l0.5 -0.9M34.9 19.7l-1.1 -0.4M32.9 19.4l-0.9 -0.3M31.0 18.8l-1.4 -0.5M105.1 -2.1l1.0 -0.8M107.2 -3.7l0.9 -0.8M49.3 71.0l-0.4 1.0M68.4 59.0l0.1 1.1M72.9 -3.2l0.3 -1.5M103.3 -1.5l1.5 -1.4M92.0 65.8l0.9 1.3M93.1 67.9l1.0 1.3M24.4 59.6l-1.6 1.0M136.4 38.0l1.4 0.1M139.2 38.5l1.6 0.2M116.5 52.6l1.8 0.8M119.4 53.8l1.8 0.8M107.9 81.8l1.2 1.4M110.1 84.7l1.7 2.1M-1.5 16.9l-3.0 -0.6M138.7 34.4l2.7 0.1M128.5 72.7l1.4 0.9M52.6 -2.9l-0.6 -1.4M3.3 43.5l-2.1 0.4M55.7 50.0l-0.5 0.7M54.4 51.6l-0.7 1.1M53.1 15.1l-0.8 -1.0M0.4 46.6l-3.0 0.7M-3.6 47.9l-2.8 0.6M-7.6 48.8l-2.0 0.5M144.7 63.4l3.0 1.3M50.5 60.2l-0.4 0.7M21.9 -4.5l-1.6 -1.2M117.6 62.2l1.1 0.7M31.4 80.6l-0.8 1.0M30.2 83.2l-1.1 1.5M28.5 85.5l-0.8 1.1M90.2 22.4l1.7 -0.7M125.2 75.0l2.1 1.6M-2.9 77.0l-1.9 1.2M113.9 0.3l1.2 -0.8M7.8 34.7l-1.8 0.1M4.8 35.4l-1.2 0.1M40.3 67.4l-1.2 1.6M38.5 69.6l-1.2 1.6M6.1 53.7l-1.9 0.7M2.9 54.9l-1.4 0.5M-0.2 56.4l-1.9 0.7M17.9 9.2l-1.7 -0.8M14.8 8.3l-1.4 -0.6M127.6 60.2l1.5 0.7M130.4 61.3l2.0 0.9M71.1 55.9l0.3 1.7M71.6 9.7l0.3 -1.5M101.4 72.4l0.8 0.9M14.3 55.7l-1.4 0.6M113.9 -4.6l1.3 -1.0M117.1 -6.7l1.6 -1.2M120.0 -9.1l2.0 -1.6M105.9 43.4l1.4 0.4M108.1 44.1l0.9 0.3M143.1 84.1l1.5 1.1M86.2 48.8l1.2 1.1M2.1 14.9l-2.0 -0.5M109.5 22.5l1.3 -0.3M111.8 22.2l1.6 -0.3M121.5 70.9l1.8 1.3M123.7 72.8l1.3 0.9M17.5 22.3l-1.5 -0.3M14.5 21.7l-1.9 -0.3M28.0 42.1l-0.9 0.2M26.0 42.7l-1.1 0.3M36.4 75.0l-1.2 1.7M-1.4 19.8l-2.3 -0.4M72.7 48.4l0.4 1.2M31.1 18.9l-0.8 -0.3M69.8 37.6l0.6 1.1M65.7 77.1l-0.0 1.6M65.7 79.1l-0.0 1.3M5.4 74.2l-2.8 1.9M1.5 76.5l-2.6 1.8M20.5 59.1l-1.1 0.6M68.2 48.9l0.1 1.4M68.1 50.8l0.1 1.3M66.0 42.7l-0.1 1.9M30.0 29.8l-2.1 -0.1M64.9 74.5l-0.1 1.7M35.5 31.4l-1.4 0.0M65.9 36.3l-0.2 1.4M40.2 44.2l-1.1 0.5M52.0 14.5l-1.0 -1.2M33.2 5.4l-1.7 -1.3M70.0 8.5l0.2 -1.2M140.8 28.2l1.5 -0.1M19.7 73.3l-1.6 1.4M17.6 75.2l-1.4 1.2"/>
<path stroke="#bcae64" stroke-width="0.6" stroke-opacity=".95" d="M45.3 76.9l-0.7 1.6M80.3 -1.0l0.5 -1.3M35.8 10.1l-1.5 -1.0M56.9 63.9l-0.4 1.3M60.2 69.0l-0.2 1.0M21.1 18.1l-1.4 -0.4M18.6 17.3l-1.4 -0.4M108.5 66.8l1.4 1.2M112.5 29.7l1.6 -0.1M7.3 85.3l-1.4 1.2M66.9 86.9l-0.0 1.3M46.5 52.0l-1.2 1.2M106.2 85.1l0.8 1.1M81.5 68.7l0.5 1.2M81.9 70.8l0.4 1.0M48.0 70.6l-0.6 1.2M17.0 57.5l-2.0 1.0M-3.7 58.9l-1.6 0.6M94.2 53.1l1.2 1.0M56.3 33.4l-0.7 0.1M121.5 40.5l1.1 0.2M123.8 41.0l1.4 0.2M-5.8 25.8l-1.5 -0.1M127.9 16.0l1.1 -0.3M43.1 43.5l-1.2 0.6M16.9 22.1l-1.7 -0.3M68.5 -3.7l0.1 -1.3M18.9 53.0l-1.6 0.7M15.9 54.1l-1.5 0.7M41.9 -1.1l-0.7 -1.0M47.0 40.4l-0.9 0.4M112.3 83.5l0.9 1.0M-2.3 87.9l-1.6 1.3M26.5 1.2l-1.2 -0.9M24.4 -0.9l-1.8 -1.4M58.7 75.7l-0.3 1.6M-0.4 80.3l-1.4 1.0M-0.2 80.5l-2.6 1.9M-4.0 83.4l-1.8 1.3M9.3 51.8l-1.4 0.5M127.5 27.3l2.3 -0.2M130.8 27.3l2.0 -0.1M83.3 3.2l0.5 -0.9M109.2 -5.2l0.9 -0.8M48.8 73.0l-0.5 1.1M47.7 74.7l-0.5 1.0M111.9 39.0l1.4 0.2M114.0 39.5l0.9 0.1M116.2 39.7l1.3 0.2M68.5 61.5l0.1 1.8M73.0 -5.4l0.2 -1.0M105.4 -3.6l1.4 -1.3M107.7 -5.5l1.3 -1.1M94.9 69.4l0.8 1.1M21.6 61.1l-1.6 1.1M141.9 39.2l2.2 0.2M122.2 54.9l1.9 0.8M112.7 87.3l1.4 1.7M-5.8 16.2l-3.3 -0.7M-9.9 15.3l-2.9 -0.6M142.8 35.0l2.0 0.1M147.0 35.4l1.7 0.1M131.7 75.1l1.7 1.2M52.2 -4.8l-0.3 -0.8M51.2 -6.4l-0.5 -1.2M-0.2 44.0l-1.5 0.3M-3.6 44.9l-2.5 0.5M60.4 79.2l-0.2 1.3M60.5 81.9l-0.2 1.8M140.5 61.7l2.5 1.0M148.6 65.5l3.0 1.2M49.5 61.9l-0.4 0.7M19.6 -5.8l-1.0 -0.8M17.5 -7.3l-1.4 -1.1M119.7 63.7l1.5 0.9M122.1 64.9l1.0 0.6M92.6 21.4l1.5 -0.6M128.3 77.2l1.6 1.2M-5.9 78.7l-1.5 1.0M115.7 -1.4l1.2 -0.8M117.7 -2.6l1.1 -0.8M12.0 7.0l-1.5 -0.7M132.9 63.2l2.2 1.0M71.7 58.5l0.3 1.9M72.6 7.4l0.3 -1.3M103.2 74.4l1.0 1.2M11.2 57.5l-1.7 0.8M8.0 58.7l-2.2 1.0M110.2 45.1l1.1 0.3M146.3 86.8l2.0 1.4M-1.6 13.9l-2.1 -0.5M-5.5 13.4l-2.4 -0.6M126.0 74.6l1.7 1.3M11.5 21.4l-1.7 -0.3M24.1 43.5l-1.4 0.4M34.8 77.2l-1.0 1.4M-4.9 19.1l-1.5 -0.3M-8.5 19.0l-1.5 -0.3M73.4 50.2l0.3 1.0M29.3 18.4l-1.3 -0.5M65.9 81.2l-0.0 0.9M-2.2 79.2l-2.9 2.0M18.5 60.4l-1.1 0.7M16.6 61.9l-1.3 0.8M27.3 30.0l-1.8 -0.1M121.8 59.8l1.9 1.0M125.1 61.8l1.4 0.7M128.5 63.5l2.3 1.2M64.8 76.7l-0.1 1.2M31.1 31.7l-1.6 0.0M38.3 45.1l-1.4 0.6M36.5 46.5l-0.9 0.4M50.6 12.2l-1.2 -1.4M30.8 3.9l-0.9 -0.7M28.7 2.1l-1.5 -1.1M70.4 5.8l0.3 -1.9M144.3 28.4l2.6 -0.1M147.8 28.1l1.8 -0.1M15.6 77.2l-1.5 1.3"/>
<path stroke="#d2d6d6" stroke-width="1.2" stroke-opacity=".95" d="M125.5 22.3l1.4 -0.2M85.9 34.7l0.8 0.1M85.0 30.9l1.2 -0.0M77.3 20.1l0.6 -0.6M113.9 15.1l1.1 -0.4M68.9 43.5l0.2 1.0M122.4 42.1l2.0 0.4M71.2 37.9l1.2 1.5M48.7 21.2l-0.7 -0.4M130.7 33.9l1.5 0.1M129.0 28.1l1.3 -0.1M133.2 66.2l1.5 0.8M132.6 34.8l3.0 0.2M101.0 -0.8l1.1 -1.1M106.2 17.1l0.9 -0.3M136.2 1.3l2.2 -1.0M123.0 47.4l1.8 0.5M116.2 -6.4l1.4 -1.1M33.3 38.8l-1.2 0.3M75.3 16.8l0.7 -1.2M66.8 36.9l-0.0 1.5M94.3 17.2l1.5 -0.8M68.9 19.7l0.1 -0.6M93.1 24.4l1.9 -0.5M36.5 82.5l-0.8 1.4"/>
<path stroke="#e2e3dc" stroke-width="0.6" stroke-opacity=".95" d="M60.3 48.8l-0.2 0.6M139.7 -1.3l2.9 -1.3M143.5 -2.9l2.4 -1.1M69.7 27.6l0.5 -0.7M131.5 49.4l2.0 0.5M129.3 85.5l1.4 1.2M146.2 50.4l2.8 0.7M37.6 60.0l-0.7 0.6M36.6 61.8l-0.7 0.6M51.8 37.0l-1.0 0.3M70.7 3.5l0.2 -1.6M143.3 73.5l1.6 0.9M140.3 14.8l2.5 -0.6M144.6 13.9l2.6 -0.6M78.3 30.1l0.7 -0.1M57.1 53.2l-0.5 1.2M83.2 86.1l0.6 2.1M54.8 30.5l-0.7 -0.1M106.5 8.4l1.5 -0.9M57.4 17.7l-0.7 -1.1M56.6 15.9l-0.6 -0.9M99.8 15.7l1.6 -0.7M60.9 46.1l-0.4 0.9M39.1 27.7l-1.2 -0.2M59.1 38.2l-0.9 0.7M103.5 78.4l1.2 1.5M12.7 2.6l-1.7 -0.9M10.2 1.4l-1.8 -0.9M58.9 45.7l-0.6 1.0M67.9 54.7l0.0 1.5M42.4 58.3l-0.8 0.9M40.9 59.6l-0.8 0.8M104.6 -10.8l1.0 -1.2M75.4 65.6l0.4 1.4M76.0 67.4l0.3 1.3M139.9 -3.0l1.9 -0.9M79.5 45.5l0.6 0.6M150.3 19.3l2.1 -0.3M123.6 33.9l1.3 0.1M126.8 33.6l1.5 0.1M93.7 74.2l0.9 1.4M95.8 76.2l1.2 1.8M58.7 11.9l-0.5 -1.2M109.5 -10.5l1.3 -1.3M65.3 7.2l-0.1 -1.4M54.6 33.0l-1.2 0.1M149.9 24.8l2.0 -0.2M35.0 51.8l-1.1 0.7M140.1 34.8l1.7 0.1M110.3 36.6l1.4 0.2M119.8 17.8l2.2 -0.6M122.8 16.9l2.1 -0.6M23.9 -5.8l-1.3 -1.2M92.8 38.1l1.2 0.3M108.7 10.5l1.2 -0.6M110.7 9.8l1.1 -0.5M68.8 67.5l0.1 1.4M69.2 69.4l0.1 1.0M113.5 26.2l1.7 -0.2M-12.6 40.4l-2.0 0.2M36.1 14.9l-1.4 -0.8M94.4 32.5l1.7 0.1M51.3 12.3l-1.1 -1.4M49.9 10.3l-0.8 -1.0M96.3 45.0l1.1 0.5M52.5 24.1l-0.9 -0.5M86.2 5.4l0.5 -0.7M87.5 3.9l0.8 -1.1M110.3 54.3l1.1 0.6M131.9 22.7l1.3 -0.2M134.8 22.6l1.5 -0.2M-13.1 26.7l-2.3 -0.1"/>
<path stroke="#c0cadb" stroke-width="1.2" stroke-opacity=".95" d="M49.5 31.1l-1.3 0.0M106.2 28.9l1.3 -0.1M71.7 19.9l0.4 -1.0M116.3 30.2l1.6 -0.0M-6.4 2.6l-2.3 -0.9M80.8 19.7l0.8 -0.7M80.6 20.2l0.8 -0.7M31.9 13.0l-0.9 -0.4M55.8 44.2l-0.5 0.5M130.7 -3.3l1.9 -1.0M98.5 12.7l1.0 -0.6M56.2 45.5l-0.8 1.1M82.6 24.1l0.8 -0.4M108.5 -4.0l1.1 -0.9M96.1 40.4l1.5 0.5M101.1 2.2l1.3 -1.1M3.8 47.1l-2.2 0.5M93.4 74.7l0.8 1.2M62.9 27.1l-0.5 -0.7M129.5 79.5l2.5 1.9M83.3 65.2l0.4 0.9M0.6 13.5l-1.5 -0.4M56.7 29.4l-0.7 -0.1M42.7 24.3l-1.3 -0.4M40.7 24.1l-1.0 -0.3M109.0 15.5l1.5 -0.6M24.7 10.7l-1.9 -0.9M98.4 6.2l1.3 -1.0M102.0 29.4l1.0 -0.1M11.7 21.9l-1.9 -0.3M8.3 21.1l-1.6 -0.3M80.6 36.0l1.4 0.5M133.9 29.3l2.2 -0.1M8.0 57.1l-1.6 0.7M83.9 29.3l1.3 -0.2M128.3 15.5l2.0 -0.5M59.5 23.7l-0.4 -0.5"/>
<path stroke="#f0efe6" stroke-width="1.2" stroke-opacity=".95" d="M6.6 81.3l-2.0 1.7M65.4 24.6l-0.3 -1.3M59.2 40.4l-0.7 0.7M52.2 63.5l-0.8 1.7M128.8 41.1l2.8 0.5M132.3 42.2l2.6 0.4M77.0 15.4l0.4 -0.7M125.6 4.0l1.8 -0.8M101.3 40.7l1.6 0.4M88.0 71.2l0.9 1.6M48.9 49.4l-1.0 1.0M120.0 7.3l1.1 -0.5M77.4 20.2l0.9 -0.9M108.6 38.2l2.0 0.3M43.7 37.6l-0.9 0.3M61.0 81.7l-0.2 1.8M16.5 49.0l-1.6 0.6M129.4 42.5l2.2 0.4M74.2 38.2l0.8 0.8M78.7 40.2l1.0 0.8"/>
<path stroke="#aa9c52" stroke-width="1.2" stroke-opacity=".95" d="M12.2 -4.5l-1.9 -1.2M98.1 66.3l0.7 0.8M16.0 38.4l-1.8 0.2M132.2 38.0l1.9 0.2M135.6 38.9l1.5 0.2M42.4 36.0l-1.5 0.3M3.6 9.6l-2.5 -0.8M21.5 80.2l-1.0 1.1M33.4 28.0l-1.2 -0.1M65.5 42.5l-0.1 1.0M36.7 -5.3l-1.5 -1.9M77.4 52.6l0.6 1.2M17.9 47.5l-1.3 0.4M8.7 12.2l-2.5 -0.8M141.2 15.4l2.4 -0.5M114.3 59.0l1.4 0.8M69.7 38.6l0.5 1.1M21.2 62.7l-1.1 0.7M6.2 23.3l-2.2 -0.3M64.7 12.4l-0.1 -1.1M28.3 50.2l-1.0 0.5M87.9 13.9l1.4 -1.2M82.0 54.5l0.8 1.2M142.1 45.6l2.7 0.5M17.9 61.1l-1.6 1.0M9.9 72.2l-1.7 1.2M36.5 17.1l-1.3 -0.6M77.2 48.3l0.6 0.9M103.6 70.9l1.2 1.2M13.7 43.4l-1.4 0.3M36.4 52.3l-1.1 0.8M51.5 79.0l-0.4 1.3M141.5 64.1l3.3 1.5M2.0 70.3l-2.3 1.4M37.4 76.6l-1.1 1.7M66.0 67.0l-0.0 1.6"/>
<path stroke="#ccc082" stroke-width="1.4" stroke-opacity=".95" d="M77.4 79.4l0.4 1.8"/>
<path stroke="#9c8c46" stroke-width="1.4" stroke-opacity=".95" d="M83.0 62.2l0.6 1.1"/>
<path stroke="#d2d6d6" stroke-width="1.4" stroke-opacity=".95" d="M68.6 20.1l0.1 -0.9M66.4 21.5l-0.1 -0.8M68.5 28.1l0.2 -0.5M62.0 24.2l-0.4 -0.6M71.5 31.8l0.5 -0.0M100.3 28.6l1.9 -0.2M67.7 18.4l0.0 -1.0M93.9 32.7l1.6 0.1M69.6 19.4l0.2 -0.9M68.6 30.7l0.3 -0.3"/>
<path stroke="#e2e3dc" stroke-width="1.4" stroke-opacity=".95" d="M76.5 29.4l0.8 -0.2M101.1 33.3l2.0 0.1M95.4 34.1l1.7 0.1M67.3 17.4l-0.0 -1.0M66.1 29.5l-0.2 -0.4M81.7 22.0l1.0 -0.7M54.1 27.5l-0.9 -0.3M65.7 32.6l-0.3 0.2M97.9 29.0l1.8 -0.2M80.7 25.6l0.9 -0.4M77.8 38.6l0.8 0.5M73.1 27.7l0.5 -0.4"/>
<path stroke="#d2d6d6" stroke-width="1.8" stroke-opacity=".95" d="M103.6 30.1l2.1 -0.1M72.9 21.5l0.4 -0.8M96.7 29.3l1.8 -0.2M70.3 41.9l0.2 0.8M96.0 26.1l1.7 -0.3M87.5 25.4l1.3 -0.4M92.7 27.6l1.6 -0.3M67.0 7.7l-0.0 -1.5M68.7 28.6l0.2 -0.4M91.6 35.2l1.5 0.2M83.5 35.1l1.1 0.2M95.3 23.5l1.7 -0.5M100.0 28.1l1.9 -0.2M98.3 29.0l1.8 -0.2M57.1 25.7l-0.8 -0.5M72.5 37.7l0.5 0.5"/>
<path stroke="#e2e3dc" stroke-width="1.8" stroke-opacity=".95" d="M67.4 18.9l0.0 -0.9M63.3 33.4l-0.5 0.2M71.5 20.5l0.3 -0.8M74.3 20.3l0.5 -0.8M76.0 38.0l0.7 0.5M67.1 30.5l-0.0 -0.4M70.6 32.1l0.5 0.0M104.1 22.4l2.1 -0.6M101.5 27.3l2.0 -0.3M57.0 48.6l-0.7 1.1M74.1 19.0l0.5 -0.9M96.5 34.2l1.8 0.1M63.5 37.8l-0.4 0.5M75.4 23.5l0.6 -0.6M82.8 41.2l1.0 0.6M66.4 33.1l-0.2 0.3M76.2 32.0l0.7 0.0M63.5 23.8l-0.3 -0.7M78.8 21.1l0.8 -0.7M93.8 22.4l1.6 -0.6"/>
<path stroke="#f0efe6" stroke-width="1.8" stroke-opacity=".95" d="M56.8 21.5l-0.7 -0.7M79.3 33.4l0.9 0.1M73.6 17.9l0.4 -1.0M83.3 24.3l1.1 -0.5M66.1 39.8l-0.1 0.7M79.2 23.2l0.8 -0.6M73.4 28.6l0.6 -0.3M66.4 22.6l-0.1 -0.8M70.3 37.7l0.3 0.6M57.5 37.7l-0.7 0.4M101.4 29.8l2.0 -0.1M93.9 22.4l1.6 -0.6"/>
<path stroke="#f0efe6" stroke-width="1.4" stroke-opacity=".95" d="M67.8 23.7l0.0 -0.7M84.9 17.2l1.1 -0.9M62.8 20.1l-0.3 -0.9M100.6 29.0l2.0 -0.2M84.3 16.1l1.1 -1.0M61.9 6.4l-0.3 -1.6M69.2 30.0l0.3 -0.3M61.6 25.5l-0.5 -0.5M59.7 42.9l-0.6 0.8M54.4 26.9l-0.9 -0.4M75.1 26.2l0.6 -0.5"/>
<path stroke="#d2d6d6" stroke-width="2.2" stroke-opacity=".95" d="M76.4 24.5l0.7 -0.6M81.0 14.7l0.9 -1.1M71.2 55.0l0.2 1.5M65.1 26.1l-0.2 -0.6M71.4 22.3l0.3 -0.8M52.8 21.3l-1.0 -0.7M63.6 24.3l-0.3 -0.6M102.6 30.1l2.1 -0.1M77.3 39.3l0.7 0.6"/>
<path stroke="#f0efe6" stroke-width="2.2" stroke-opacity=".95" d="M61.4 33.6l-0.6 0.2M61.1 29.0l-0.6 -0.3M95.5 32.6l1.7 0.0M71.8 25.9l0.4 -0.5M69.3 23.9l0.2 -0.7M68.6 22.9l0.1 -0.7M96.7 26.3l1.8 -0.3M104.3 33.5l2.2 0.1M103.5 20.2l2.1 -0.7M80.7 32.5l1.0 0.0"/>
<path stroke="#e2e3dc" stroke-width="2.2" stroke-opacity=".95" d="M67.2 50.3l-0.0 1.2M83.2 29.6l1.1 -0.2M77.8 39.4l0.8 0.5M59.3 9.5l-0.5 -1.4M77.8 40.7l0.8 0.6M69.0 14.2l0.1 -1.2M51.1 24.9l-1.1 -0.5M80.1 25.5l0.9 -0.5M101.1 35.5l2.0 0.2M98.7 33.0l1.9 0.1"/>
</g>
</g></g></svg>
<svg class="th" viewBox="0 0 134.0 74.8" preserveAspectRatio="none" width="134.0" height="74.8" style="left:3.799999999999997px;top:330.1px">
<defs>
<linearGradient id="tbg" x1="0" x2="1" y1="0" y2="0"><stop offset="0" stop-color="#50545e"/><stop offset=".3" stop-color="#7c7660"/><stop offset=".55" stop-color="#b89e58"/><stop offset="1" stop-color="#96824a"/></linearGradient>
<radialGradient id="tsun" cx=".5" cy=".5" r=".5"><stop offset="0" stop-color="#fffde0"/><stop offset=".15" stop-color="#fbf0a8"/><stop offset=".45" stop-color="#e6cc78" stop-opacity=".75"/><stop offset="1" stop-color="#c8ac5a" stop-opacity="0"/></radialGradient>
<filter id="tb1" x="-50%" y="-50%" width="200%" height="200%"><feGaussianBlur stdDeviation="7"/></filter>
<filter id="tb2" x="-50%" y="-50%" width="200%" height="200%"><feGaussianBlur stdDeviation="2.2"/></filter>
<filter id="tb3" x="-50%" y="-50%" width="200%" height="200%"><feGaussianBlur stdDeviation="1"/></filter>
<filter id="tb4"><feGaussianBlur stdDeviation=".3"/></filter>
<clipPath id="tc"><rect width="134.0" height="74.8"/></clipPath>
</defs>
<g clip-path="url(#tc)">
<rect width="134.0" height="74.8" fill="url(#tbg)"/>
<ellipse cx="10.6" cy="33.3" rx="32.6" ry="28.7" fill="#3c4250" filter="url(#tb1)"/>
<ellipse cx="119.8" cy="4.6" rx="23.0" ry="9.6" fill="#7a764c" opacity="0.8" filter="url(#tb1)"/>
<ellipse cx="66.2" cy="0.8" rx="57.5" ry="4.2" fill="#6e6c56" opacity="0.6" filter="url(#tb2)"/>
<ellipse cx="45.1" cy="8.4" rx="23.0" ry="7.7" fill="#6a6a5c" opacity="0.7" filter="url(#tb1)"/>
<ellipse cx="82.5" cy="25.7" rx="36.4" ry="25.9" fill="url(#tsun)"/>
<ellipse cx="96.8" cy="22.8" rx="7.7" ry="2.3" fill="#fff2a8" opacity="0.8" filter="url(#tb2)"/>
<ellipse cx="116.0" cy="35.2" rx="15.3" ry="9.6" fill="#d6c47c" opacity="0.5" filter="url(#tb1)"/>
<path d="M82.5 25.7L67.3 0.0L72.7 0.0Z" fill="#f4e8a0" opacity=".22" filter="url(#tb3)"/>
<path d="M82.5 25.7L78.8 0.0L84.2 0.0Z" fill="#f4e8a0" opacity=".22" filter="url(#tb3)"/>
<path d="M82.5 25.7L90.3 0.0L95.7 0.0Z" fill="#f4e8a0" opacity=".22" filter="url(#tb3)"/>
<path d="M82.5 25.7L101.8 2.7L107.2 2.7Z" fill="#f4e8a0" opacity=".22" filter="url(#tb3)"/>
<path d="M82.5 25.7L57.7 4.6L63.1 4.6Z" fill="#f4e8a0" opacity=".22" filter="url(#tb3)"/>
<ellipse cx="89.2" cy="47.9" rx="47.9" ry="2.9" fill="#5e5c52" opacity="0.85" filter="url(#tb2)"/>
<ellipse cx="54.7" cy="47.1" rx="17.2" ry="4.6" fill="#50525a" opacity="0.9" filter="url(#tb2)"/>
<ellipse cx="89.2" cy="60.2" rx="44.1" ry="8.6" fill="#c2a450" opacity="0.85" filter="url(#tb1)"/>
<ellipse cx="87.2" cy="69.7" rx="23.9" ry="3.4" fill="#f6d23c" filter="url(#tb2)"/>
<ellipse cx="87.2" cy="70.5" rx="13.4" ry="1.7" fill="#ffe45a" opacity="0.9" filter="url(#tb3)"/>
<ellipse cx="79.6" cy="54.4" rx="11.5" ry="2.3" fill="#d8c670" opacity="0.7" filter="url(#tb2)"/>
<ellipse cx="114.4" cy="31.0" rx="9.2" ry="2.9" fill="#7a6c56" opacity="0.9" filter="url(#tb3)"/>
<ellipse cx="93.9" cy="34.5" rx="6.9" ry="2.5" fill="#8a7a5c" opacity="0.85" filter="url(#tb3)"/>
<ellipse cx="73.8" cy="42.5" rx="9.6" ry="2.3" fill="#8c7e62" opacity="0.8" filter="url(#tb3)"/>
<ellipse cx="101.6" cy="25.7" rx="2.7" ry="1.1" fill="#8a7a58" opacity="0.8" filter="url(#tb3)"/>
<ellipse cx="129.4" cy="23.8" rx="3.8" ry="1.9" fill="#8a8058" opacity="0.7" filter="url(#tb3)"/>
<ellipse cx="104.5" cy="41.4" rx="9.6" ry="1.5" fill="#8e8260" opacity="0.7" filter="url(#tb3)"/>
<ellipse cx="121.7" cy="48.3" rx="9.6" ry="1.9" fill="#5e5c50" opacity="0.7" filter="url(#tb3)"/>
<ellipse cx="93.0" cy="64.4" rx="7.7" ry="2.3" fill="#74622e" opacity="0.8" filter="url(#tb3)"/>
<ellipse cx="114.1" cy="67.4" rx="9.6" ry="3.1" fill="#6a5c34" opacity="0.8" filter="url(#tb3)"/>
<ellipse cx="129.4" cy="60.2" rx="5.7" ry="1.9" fill="#8a7a40" opacity="0.6" filter="url(#tb3)"/>
<ellipse cx="16.4" cy="58.6" rx="28.7" ry="6.9" fill="#171b21" filter="url(#tb2)"/>
<ellipse cx="8.7" cy="61.1" rx="17.2" ry="4.2" fill="#14181e" filter="url(#tb3)"/>
<ellipse cx="10.6" cy="45.8" rx="17.2" ry="7.7" fill="#2a3040" opacity="0.9" filter="url(#tb2)"/>
<ellipse cx="4.9" cy="38.1" rx="7.7" ry="2.3" fill="#8a8478" opacity="0.5" filter="url(#tb3)"/>
<ellipse cx="29.8" cy="36.2" rx="13.4" ry="3.1" fill="#8a8472" opacity="0.45" filter="url(#tb2)"/>
<ellipse cx="22.1" cy="8.4" rx="21.1" ry="5.7" fill="#444852" opacity="0.6" filter="url(#tb2)"/>
<path d="M-0.1 66.7C16.4 65.1 35.5 61.3 47.4 61.7C60.4 64.4 77.7 69.3 96.8 70.5L134.4 71.6L134.4 75.5L-0.1 75.5Z" fill="#4e3220" filter="url(#tb4)"/>
<g filter="url(#tb4)">
<rect x="31.9" y="70.2" width="1.2" height="1.0" fill="#a86c3a"/>
<rect x="81.3" y="74.8" width="1.4" height="1.0" fill="#8a5630"/>
<rect x="133.8" y="73.7" width="1.8" height="0.9" fill="#3a2416"/>
<rect x="31.1" y="65.7" width="1.9" height="0.9" fill="#c8935a"/>
<rect x="90.2" y="70.3" width="1.7" height="1.0" fill="#d8a468"/>
<rect x="104.8" y="74.7" width="1.1" height="1.0" fill="#b47a44"/>
<rect x="95.9" y="75.1" width="1.3" height="1.2" fill="#e0b070"/>
<rect x="129.5" y="72.5" width="1.2" height="0.6" fill="#e0b070"/>
<rect x="29.1" y="75.1" width="1.3" height="1.0" fill="#d8a468"/>
<rect x="56.5" y="73.6" width="1.5" height="1.0" fill="#b47a44"/>
<rect x="78.5" y="74.8" width="1.6" height="1.3" fill="#d8a468"/>
<rect x="133.2" y="74.4" width="1.0" height="1.2" fill="#a86c3a"/>
<rect x="95.9" y="71.9" width="1.8" height="1.0" fill="#d8a468"/>
<rect x="16.6" y="70.3" width="1.6" height="0.9" fill="#2a1a10"/>
<rect x="107.6" y="73.1" width="1.0" height="0.8" fill="#b47a44"/>
<rect x="117.3" y="71.9" width="1.5" height="0.6" fill="#2a1a10"/>
<rect x="74.0" y="74.8" width="1.1" height="0.8" fill="#c8935a"/>
<rect x="41.5" y="63.8" width="1.5" height="0.6" fill="#8a5630"/>
<rect x="130.5" y="73.1" width="1.1" height="1.1" fill="#2a1a10"/>
<rect x="42.1" y="75.0" width="1.9" height="0.9" fill="#e0b070"/>
<rect x="116.9" y="73.2" width="1.8" height="1.1" fill="#a86c3a"/>
<rect x="83.3" y="75.1" width="1.4" height="0.9" fill="#8a5630"/>
<rect x="125.8" y="73.5" width="1.1" height="0.8" fill="#2a1a10"/>
<rect x="1.4" y="70.6" width="1.5" height="0.6" fill="#3a2416"/>
<rect x="8.0" y="72.1" width="1.4" height="1.1" fill="#2a1a10"/>
<rect x="81.8" y="70.5" width="1.4" height="1.0" fill="#c8935a"/>
<rect x="129.4" y="72.9" width="1.3" height="1.0" fill="#2a1a10"/>
<rect x="23.7" y="66.7" width="1.7" height="1.2" fill="#d8a468"/>
<rect x="40.3" y="67.7" width="1.7" height="0.6" fill="#3a2416"/>
<rect x="41.6" y="65.7" width="1.8" height="0.8" fill="#3a2416"/>
<rect x="91.1" y="73.6" width="0.9" height="1.0" fill="#2a1a10"/>
<rect x="90.7" y="71.2" width="1.8" height="1.3" fill="#a86c3a"/>
<rect x="45.2" y="70.9" width="1.9" height="0.9" fill="#8a5630"/>
<rect x="105.7" y="71.5" width="1.9" height="0.8" fill="#3a2416"/>
<rect x="116.0" y="73.0" width="1.8" height="0.7" fill="#2a1a10"/>
<rect x="79.2" y="71.2" width="1.4" height="1.2" fill="#e0b070"/>
<rect x="46.5" y="67.8" width="1.3" height="0.9" fill="#b47a44"/>
<rect x="20.9" y="65.1" width="1.9" height="1.2" fill="#b47a44"/>
<rect x="75.0" y="75.4" width="1.7" height="0.6" fill="#e0b070"/>
<rect x="112.4" y="74.2" width="1.4" height="0.8" fill="#2a1a10"/>
<rect x="119.5" y="75.0" width="1.8" height="1.3" fill="#a86c3a"/>
<rect x="108.8" y="71.6" width="1.9" height="1.1" fill="#8a5630"/>
<rect x="120.5" y="75.1" width="1.5" height="0.6" fill="#a86c3a"/>
<rect x="23.0" y="68.0" width="1.6" height="1.0" fill="#b47a44"/>
<rect x="7.0" y="74.7" width="0.9" height="0.7" fill="#e0b070"/>
<rect x="109.0" y="71.7" width="1.1" height="0.7" fill="#a86c3a"/>
<rect x="22.9" y="73.3" width="1.9" height="1.2" fill="#c8935a"/>
<rect x="65.4" y="71.3" width="1.3" height="1.1" fill="#8a5630"/>
<rect x="36.0" y="69.8" width="1.3" height="0.9" fill="#c8935a"/>
<rect x="115.1" y="74.6" width="0.9" height="0.6" fill="#e0b070"/>
<rect x="131.0" y="75.0" width="0.9" height="1.0" fill="#2a1a10"/>
<rect x="21.0" y="65.8" width="1.3" height="0.9" fill="#d8a468"/>
<rect x="48.4" y="65.2" width="1.2" height="0.7" fill="#c8935a"/>
<rect x="96.2" y="72.7" width="0.9" height="0.7" fill="#2a1a10"/>
<rect x="61.9" y="71.9" width="1.4" height="1.0" fill="#c8935a"/>
<rect x="83.7" y="71.7" width="1.2" height="0.9" fill="#2a1a10"/>
<rect x="56.4" y="72.0" width="1.4" height="0.8" fill="#d8a468"/>
<rect x="93.4" y="70.8" width="1.3" height="0.9" fill="#c8935a"/>
<rect x="125.8" y="73.3" width="1.9" height="1.2" fill="#d8a468"/>
<rect x="16.2" y="72.4" width="1.9" height="1.1" fill="#b47a44"/>
<rect x="89.7" y="74.0" width="1.5" height="0.7" fill="#c8935a"/>
<rect x="63.6" y="67.8" width="1.3" height="1.0" fill="#a86c3a"/>
<rect x="88.5" y="71.8" width="1.8" height="0.8" fill="#a86c3a"/>
<rect x="3.3" y="67.9" width="1.4" height="1.1" fill="#d8a468"/>
<rect x="77.8" y="73.9" width="0.8" height="1.1" fill="#8a5630"/>
<rect x="14.2" y="73.0" width="1.9" height="0.6" fill="#2a1a10"/>
<rect x="116.8" y="72.4" width="0.9" height="1.3" fill="#8a5630"/>
<rect x="61.0" y="72.3" width="1.9" height="0.8" fill="#b47a44"/>
<rect x="126.1" y="73.9" width="2.0" height="0.9" fill="#8a5630"/>
<rect x="130.7" y="73.5" width="1.7" height="0.7" fill="#e0b070"/>
<rect x="20.9" y="69.2" width="1.9" height="0.7" fill="#e0b070"/>
<rect x="100.5" y="75.1" width="1.4" height="0.9" fill="#3a2416"/>
<rect x="18.2" y="73.0" width="1.0" height="1.0" fill="#8a5630"/>
<rect x="114.4" y="73.7" width="1.7" height="1.1" fill="#b47a44"/>
<rect x="79.9" y="72.5" width="2.0" height="1.2" fill="#d8a468"/>
<rect x="3.0" y="71.0" width="1.3" height="0.7" fill="#2a1a10"/>
<rect x="32.0" y="69.5" width="1.8" height="0.9" fill="#e0b070"/>
<rect x="94.2" y="71.6" width="1.5" height="1.2" fill="#c8935a"/>
<rect x="64.6" y="72.7" width="1.8" height="0.9" fill="#c8935a"/>
<rect x="62.7" y="67.6" width="1.1" height="1.1" fill="#a86c3a"/>
<rect x="128.8" y="75.0" width="1.1" height="0.7" fill="#d8a468"/>
<rect x="18.4" y="71.6" width="1.6" height="0.6" fill="#d8a468"/>
<rect x="22.7" y="65.3" width="1.0" height="0.7" fill="#a86c3a"/>
<rect x="15.7" y="68.2" width="1.9" height="0.6" fill="#e0b070"/>
<rect x="77.9" y="73.0" width="0.8" height="0.8" fill="#b47a44"/>
<rect x="50.9" y="64.2" width="1.6" height="1.1" fill="#e0b070"/>
<rect x="52.5" y="70.0" width="0.9" height="0.8" fill="#b47a44"/>
<rect x="15.0" y="74.4" width="1.9" height="0.7" fill="#2a1a10"/>
<rect x="91.1" y="72.1" width="1.3" height="1.1" fill="#d8a468"/>
<rect x="14.3" y="74.9" width="1.2" height="1.0" fill="#a86c3a"/>
<rect x="89.6" y="72.7" width="0.9" height="0.8" fill="#3a2416"/>
<rect x="86.7" y="73.8" width="1.0" height="0.9" fill="#e0b070"/>
<rect x="16.4" y="74.8" width="1.0" height="0.8" fill="#b47a44"/>
<rect x="74.5" y="72.6" width="1.3" height="0.8" fill="#3a2416"/>
<rect x="94.8" y="71.2" width="1.0" height="1.0" fill="#b47a44"/>
<rect x="48.2" y="66.2" width="1.3" height="1.2" fill="#c8935a"/>
<rect x="64.3" y="68.2" width="1.6" height="1.0" fill="#2a1a10"/>
<rect x="127.0" y="73.6" width="1.8" height="0.6" fill="#e0b070"/>
<rect x="113.8" y="72.0" width="1.1" height="0.7" fill="#a86c3a"/>
<rect x="75.8" y="74.8" width="0.9" height="1.1" fill="#b47a44"/>
<rect x="90.0" y="72.1" width="2.0" height="0.7" fill="#3a2416"/>
<rect x="115.5" y="74.7" width="1.5" height="0.7" fill="#3a2416"/>
<rect x="27.1" y="67.2" width="1.7" height="0.6" fill="#e0b070"/>
<rect x="119.7" y="75.3" width="1.3" height="1.0" fill="#d8a468"/>
<rect x="85.1" y="75.3" width="1.6" height="0.8" fill="#e0b070"/>
<rect x="3.9" y="68.5" width="1.6" height="0.7" fill="#8a5630"/>
<rect x="66.0" y="70.9" width="1.4" height="0.7" fill="#8a5630"/>
<rect x="4.9" y="71.1" width="1.6" height="0.9" fill="#d8a468"/>
<rect x="128.9" y="75.1" width="1.0" height="1.2" fill="#c8935a"/>
<rect x="3.3" y="72.2" width="1.4" height="0.9" fill="#c8935a"/>
<rect x="124.9" y="73.1" width="1.8" height="1.1" fill="#3a2416"/>
<rect x="10.7" y="74.0" width="1.7" height="0.6" fill="#a86c3a"/>
<rect x="99.4" y="72.6" width="1.8" height="1.3" fill="#8a5630"/>
<rect x="58.7" y="72.8" width="1.4" height="0.7" fill="#c8935a"/>
<rect x="54.8" y="73.7" width="1.6" height="0.9" fill="#e0b070"/>
<rect x="93.9" y="73.2" width="1.3" height="1.1" fill="#d8a468"/>
<rect x="3.0" y="70.8" width="1.6" height="0.9" fill="#e0b070"/>
<rect x="120.8" y="74.4" width="1.2" height="0.9" fill="#2a1a10"/>
<rect x="80.1" y="69.8" width="0.8" height="0.7" fill="#2a1a10"/>
<rect x="19.2" y="69.9" width="1.0" height="0.7" fill="#3a2416"/>
<rect x="78.5" y="71.7" width="1.6" height="0.7" fill="#3a2416"/>
<rect x="59.4" y="66.7" width="1.8" height="0.9" fill="#2a1a10"/>
<rect x="54.7" y="72.0" width="0.9" height="0.9" fill="#b47a44"/>
<rect x="66.2" y="74.6" width="1.9" height="0.8" fill="#b47a44"/>
<rect x="63.7" y="67.1" width="1.5" height="0.8" fill="#a86c3a"/>
<rect x="79.8" y="74.1" width="1.1" height="1.3" fill="#e0b070"/>
<rect x="106.0" y="75.3" width="1.4" height="1.0" fill="#c8935a"/>
<rect x="109.4" y="74.0" width="1.2" height="0.7" fill="#b47a44"/>
<rect x="130.2" y="74.1" width="0.8" height="0.6" fill="#a86c3a"/>
<rect x="2.5" y="71.3" width="1.4" height="0.7" fill="#2a1a10"/>
<rect x="26.9" y="75.2" width="1.4" height="1.2" fill="#2a1a10"/>
<rect x="126.3" y="72.1" width="1.2" height="1.0" fill="#b47a44"/>
<rect x="11.7" y="68.8" width="1.8" height="0.7" fill="#b47a44"/>
<rect x="73.5" y="71.6" width="1.7" height="0.9" fill="#b47a44"/>
<rect x="112.3" y="73.7" width="1.9" height="0.9" fill="#b47a44"/>
<rect x="58.8" y="69.4" width="1.6" height="0.8" fill="#3a2416"/>
<rect x="68.1" y="73.2" width="1.9" height="1.1" fill="#e0b070"/>
<rect x="5.6" y="68.2" width="1.7" height="1.2" fill="#a86c3a"/>
<rect x="101.9" y="74.1" width="0.9" height="0.8" fill="#c8935a"/>
<rect x="118.0" y="75.0" width="1.3" height="1.2" fill="#2a1a10"/>
<rect x="134.0" y="72.2" width="1.0" height="1.2" fill="#a86c3a"/>
<rect x="45.4" y="66.5" width="1.3" height="1.2" fill="#8a5630"/>
<rect x="32.3" y="64.4" width="1.0" height="1.1" fill="#c8935a"/>
<rect x="15.0" y="68.5" width="1.1" height="1.2" fill="#b47a44"/>
<rect x="67.8" y="74.6" width="1.2" height="1.2" fill="#8a5630"/>
<rect x="62.8" y="71.6" width="0.8" height="1.2" fill="#c8935a"/>
<rect x="115.4" y="72.0" width="1.9" height="0.8" fill="#a86c3a"/>
<rect x="62.5" y="67.5" width="1.8" height="1.0" fill="#e0b070"/>
<rect x="102.3" y="74.9" width="1.2" height="1.0" fill="#e0b070"/>
<rect x="104.5" y="72.5" width="1.9" height="0.9" fill="#b47a44"/>
<rect x="27.6" y="70.3" width="1.4" height="1.1" fill="#a86c3a"/>
<rect x="45.8" y="64.9" width="1.7" height="1.2" fill="#2a1a10"/>
<rect x="56.8" y="71.5" width="1.5" height="0.7" fill="#2a1a10"/>
<rect x="112.6" y="71.8" width="1.1" height="0.9" fill="#d8a468"/>
<rect x="29.2" y="66.0" width="1.9" height="1.1" fill="#e0b070"/>
<rect x="125.1" y="73.8" width="1.3" height="1.3" fill="#b47a44"/>
<rect x="65.0" y="73.3" width="1.3" height="1.3" fill="#c8935a"/>
<rect x="39.2" y="74.7" width="1.0" height="0.7" fill="#3a2416"/>
<rect x="39.5" y="69.5" width="1.6" height="0.6" fill="#8a5630"/>
<rect x="37.0" y="68.6" width="1.2" height="1.1" fill="#d8a468"/>
<rect x="19.1" y="69.8" width="1.9" height="0.9" fill="#8a5630"/>
<rect x="20.5" y="73.0" width="1.6" height="1.3" fill="#2a1a10"/>
<rect x="126.7" y="73.5" width="1.9" height="0.9" fill="#8a5630"/>
<rect x="48.3" y="73.6" width="1.1" height="0.9" fill="#2a1a10"/>
<rect x="108.4" y="72.6" width="1.1" height="1.2" fill="#c8935a"/>
<rect x="1.8" y="72.3" width="1.0" height="0.6" fill="#c8935a"/>
<rect x="0.1" y="75.3" width="1.8" height="0.8" fill="#2a1a10"/>
<rect x="131.6" y="72.3" width="1.0" height="0.6" fill="#b47a44"/>
<rect x="121.5" y="74.9" width="1.5" height="1.2" fill="#e0b070"/>
<rect x="41.8" y="66.0" width="1.8" height="0.9" fill="#d8a468"/>
<rect x="45.5" y="62.8" width="0.8" height="1.3" fill="#3a2416"/>
<rect x="122.6" y="74.8" width="1.1" height="0.7" fill="#b47a44"/>
<rect x="68.3" y="73.9" width="1.5" height="0.8" fill="#3a2416"/>
<rect x="6.0" y="70.9" width="0.9" height="1.2" fill="#e0b070"/>
<rect x="62.8" y="72.1" width="1.9" height="1.2" fill="#b47a44"/>
<rect x="49.8" y="70.9" width="1.2" height="0.7" fill="#3a2416"/>
<rect x="133.3" y="74.0" width="1.3" height="0.8" fill="#e0b070"/>
<rect x="37.3" y="66.4" width="1.1" height="1.0" fill="#2a1a10"/>
<rect x="18.7" y="65.7" width="1.4" height="0.8" fill="#e0b070"/>
<rect x="125.1" y="74.1" width="0.8" height="1.0" fill="#a86c3a"/>
<rect x="65.5" y="68.5" width="1.7" height="1.2" fill="#a86c3a"/>
<rect x="58.4" y="65.4" width="0.8" height="0.9" fill="#e0b070"/>
<rect x="26.1" y="74.6" width="1.0" height="0.9" fill="#b47a44"/>
<rect x="42.4" y="66.2" width="1.9" height="1.3" fill="#2a1a10"/>
<rect x="82.0" y="72.4" width="0.8" height="0.9" fill="#b47a44"/>
<rect x="131.7" y="72.4" width="1.1" height="0.7" fill="#a86c3a"/>
<rect x="93.8" y="71.1" width="1.6" height="0.7" fill="#c8935a"/>
<rect x="126.6" y="75.4" width="1.6" height="0.9" fill="#e0b070"/>
<rect x="62.0" y="68.1" width="1.5" height="0.7" fill="#e0b070"/>
<rect x="128.7" y="72.5" width="1.9" height="0.7" fill="#e0b070"/>
<rect x="90.6" y="73.5" width="1.0" height="0.6" fill="#3a2416"/>
<rect x="41.7" y="71.0" width="1.0" height="0.7" fill="#3a2416"/>
<rect x="71.8" y="70.1" width="0.9" height="0.9" fill="#c8935a"/>
<rect x="37.6" y="64.9" width="1.0" height="0.7" fill="#2a1a10"/>
<rect x="126.0" y="74.1" width="1.9" height="0.6" fill="#2a1a10"/>
<rect x="134.0" y="75.4" width="1.1" height="0.8" fill="#e0b070"/>
<rect x="13.8" y="74.0" width="1.4" height="1.1" fill="#e0b070"/>
<rect x="76.4" y="71.3" width="1.4" height="0.9" fill="#e0b070"/>
<rect x="111.9" y="72.3" width="1.5" height="1.3" fill="#3a2416"/>
<rect x="40.3" y="73.7" width="2.0" height="0.8" fill="#8a5630"/>
<rect x="17.4" y="71.5" width="0.9" height="1.0" fill="#3a2416"/>
<rect x="15.3" y="65.8" width="1.8" height="1.2" fill="#2a1a10"/>
<rect x="70.5" y="73.4" width="0.9" height="1.0" fill="#e0b070"/>
<rect x="43.7" y="70.2" width="1.1" height="0.9" fill="#2a1a10"/>
<rect x="85.5" y="72.9" width="1.6" height="1.1" fill="#2a1a10"/>
<rect x="115.8" y="74.8" width="1.1" height="1.3" fill="#d8a468"/>
<rect x="24.4" y="71.2" width="1.1" height="1.3" fill="#8a5630"/>
<rect x="37.9" y="75.1" width="1.3" height="0.9" fill="#3a2416"/>
<rect x="132.6" y="73.9" width="1.3" height="1.0" fill="#a86c3a"/>
<rect x="56.0" y="70.4" width="1.5" height="0.8" fill="#8a5630"/>
<rect x="114.8" y="73.1" width="2.0" height="0.9" fill="#8a5630"/>
<rect x="7.3" y="70.9" width="0.9" height="1.1" fill="#b47a44"/>
<rect x="95.6" y="72.5" width="1.2" height="1.0" fill="#b47a44"/>
<rect x="59.0" y="74.5" width="1.6" height="0.7" fill="#e0b070"/>
<rect x="19.5" y="67.4" width="1.2" height="1.0" fill="#3a2416"/>
<rect x="118.9" y="72.5" width="1.3" height="0.7" fill="#c8935a"/>
<rect x="72.3" y="74.8" width="1.4" height="1.1" fill="#8a5630"/>
<rect x="59.2" y="72.0" width="0.9" height="1.2" fill="#b47a44"/>
<rect x="30.1" y="65.7" width="1.2" height="1.0" fill="#a86c3a"/>
<rect x="110.6" y="73.9" width="0.9" height="0.6" fill="#2a1a10"/>
<rect x="51.4" y="69.3" width="2.0" height="0.9" fill="#3a2416"/>
<rect x="52.2" y="69.6" width="1.3" height="1.0" fill="#d8a468"/>
<rect x="58.5" y="65.6" width="2.0" height="1.1" fill="#a86c3a"/>
<rect x="8.5" y="74.4" width="1.7" height="0.8" fill="#c8935a"/>
<rect x="43.5" y="74.4" width="1.6" height="0.7" fill="#2a1a10"/>
<rect x="86.5" y="74.7" width="1.1" height="0.8" fill="#b47a44"/>
<rect x="128.7" y="72.2" width="1.4" height="1.2" fill="#8a5630"/>
<rect x="77.1" y="68.4" width="1.1" height="0.9" fill="#b47a44"/>
<rect x="38.2" y="75.3" width="1.6" height="1.0" fill="#8a5630"/>
<rect x="77.0" y="70.4" width="1.5" height="1.0" fill="#2a1a10"/>
<rect x="83.3" y="71.1" width="1.7" height="1.2" fill="#8a5630"/>
<rect x="60.0" y="72.5" width="1.8" height="1.0" fill="#e0b070"/>
<rect x="117.1" y="72.5" width="1.8" height="1.3" fill="#a86c3a"/>
<rect x="124.7" y="73.7" width="1.8" height="0.8" fill="#c8935a"/>
<rect x="43.9" y="65.8" width="1.9" height="1.1" fill="#c8935a"/>
<rect x="31.7" y="68.2" width="1.1" height="0.8" fill="#2a1a10"/>
<rect x="35.3" y="71.8" width="1.2" height="0.7" fill="#8a5630"/>
<rect x="40.7" y="65.1" width="1.0" height="0.9" fill="#8a5630"/>
<rect x="28.9" y="71.8" width="1.5" height="0.7" fill="#b47a44"/>
<rect x="80.4" y="71.3" width="1.0" height="0.8" fill="#2a1a10"/>
<rect x="7.4" y="73.6" width="1.8" height="0.9" fill="#3a2416"/>
<rect x="36.0" y="74.3" width="1.6" height="0.8" fill="#e0b070"/>
<rect x="46.4" y="75.4" width="1.4" height="0.7" fill="#b47a44"/>
<rect x="45.5" y="72.0" width="1.5" height="0.7" fill="#3a2416"/>
<rect x="114.3" y="73.5" width="1.4" height="1.2" fill="#e0b070"/>
<rect x="50.3" y="63.7" width="1.2" height="1.0" fill="#a86c3a"/>
<rect x="94.3" y="75.4" width="1.5" height="1.0" fill="#d8a468"/>
<rect x="72.7" y="75.4" width="1.8" height="1.1" fill="#d8a468"/>
<rect x="124.1" y="73.4" width="1.5" height="1.1" fill="#b47a44"/>
<rect x="64.3" y="71.2" width="1.1" height="1.1" fill="#b47a44"/>
<rect x="95.8" y="72.4" width="1.0" height="1.2" fill="#e0b070"/>
<rect x="23.1" y="69.0" width="1.0" height="0.9" fill="#2a1a10"/>
<rect x="14.3" y="66.3" width="1.4" height="0.7" fill="#3a2416"/>
<rect x="15.9" y="71.0" width="0.9" height="0.9" fill="#2a1a10"/>
<rect x="53.3" y="64.4" width="1.1" height="0.8" fill="#d8a468"/>
<rect x="15.6" y="75.0" width="1.4" height="0.9" fill="#d8a468"/>
<rect x="49.6" y="71.5" width="1.1" height="1.1" fill="#8a5630"/>
<rect x="89.6" y="71.2" width="1.1" height="0.8" fill="#2a1a10"/>
<rect x="121.3" y="72.2" width="1.6" height="1.1" fill="#8a5630"/>
<rect x="132.3" y="73.3" width="0.9" height="1.2" fill="#3a2416"/>
<rect x="22.1" y="72.0" width="1.1" height="1.0" fill="#2a1a10"/>
<rect x="120.9" y="73.4" width="1.3" height="1.0" fill="#b47a44"/>
<rect x="131.4" y="73.6" width="1.2" height="0.8" fill="#b47a44"/>
<rect x="20.6" y="65.4" width="1.3" height="0.6" fill="#3a2416"/>
<rect x="67.8" y="75.0" width="1.8" height="1.1" fill="#2a1a10"/>
<rect x="34.5" y="71.1" width="1.5" height="1.3" fill="#2a1a10"/>
<rect x="27.1" y="66.1" width="2.0" height="1.1" fill="#e0b070"/>
<rect x="57.4" y="67.6" width="0.9" height="0.8" fill="#3a2416"/>
<rect x="34.7" y="64.6" width="0.9" height="1.1" fill="#a86c3a"/>
<rect x="0.8" y="67.8" width="1.7" height="0.9" fill="#e0b070"/>
<rect x="74.2" y="72.7" width="1.3" height="0.7" fill="#c8935a"/>
<rect x="9.3" y="72.5" width="1.3" height="0.6" fill="#2a1a10"/>
<rect x="69.6" y="69.4" width="2.0" height="0.7" fill="#8a5630"/>
<rect x="52.1" y="73.1" width="1.3" height="1.1" fill="#2a1a10"/>
<rect x="84.2" y="71.8" width="1.1" height="0.6" fill="#8a5630"/>
<rect x="30.8" y="68.8" width="0.9" height="0.8" fill="#a86c3a"/>
<rect x="73.2" y="72.1" width="1.1" height="0.6" fill="#c8935a"/>
<rect x="79.0" y="69.7" width="1.3" height="1.0" fill="#b47a44"/>
<rect x="89.0" y="74.0" width="1.4" height="0.9" fill="#d8a468"/>
<rect x="107.5" y="72.1" width="1.3" height="1.0" fill="#d8a468"/>
<rect x="124.5" y="74.0" width="1.5" height="0.9" fill="#3a2416"/>
<rect x="41.4" y="69.5" width="1.1" height="1.0" fill="#d8a468"/>
<rect x="16.3" y="70.5" width="1.4" height="0.8" fill="#b47a44"/>
<rect x="2.6" y="67.2" width="1.5" height="0.6" fill="#e0b070"/>
<rect x="121.7" y="72.0" width="1.6" height="0.8" fill="#e0b070"/>
<rect x="66.0" y="73.3" width="1.8" height="0.8" fill="#a86c3a"/>
<rect x="54.5" y="71.4" width="0.9" height="1.1" fill="#8a5630"/>
<rect x="11.1" y="73.1" width="1.4" height="1.1" fill="#3a2416"/>
<rect x="84.7" y="69.5" width="1.6" height="1.0" fill="#c8935a"/>
<rect x="66.6" y="69.4" width="1.4" height="0.7" fill="#2a1a10"/>
<rect x="75.3" y="70.6" width="1.4" height="1.0" fill="#c8935a"/>
<rect x="43.3" y="68.8" width="1.6" height="1.2" fill="#d8a468"/>
<rect x="27.5" y="65.4" width="1.1" height="0.9" fill="#b47a44"/>
<rect x="64.0" y="67.5" width="1.2" height="0.6" fill="#8a5630"/>
<rect x="134.1" y="72.4" width="1.3" height="0.9" fill="#2a1a10"/>
<rect x="13.1" y="67.6" width="1.4" height="0.8" fill="#b47a44"/>
<rect x="75.8" y="70.2" width="1.3" height="0.6" fill="#b47a44"/>
<rect x="48.8" y="72.0" width="1.1" height="0.8" fill="#8a5630"/>
<rect x="118.1" y="74.6" width="0.8" height="0.9" fill="#a86c3a"/>
<rect x="81.2" y="71.2" width="1.4" height="1.0" fill="#b47a44"/>
<rect x="82.3" y="71.9" width="0.9" height="1.0" fill="#3a2416"/>
<rect x="122.9" y="72.6" width="1.9" height="1.2" fill="#a86c3a"/>
<rect x="131.6" y="72.6" width="1.7" height="1.2" fill="#a86c3a"/>
<rect x="13.9" y="67.9" width="1.9" height="1.0" fill="#3a2416"/>
<rect x="121.8" y="73.4" width="1.0" height="0.8" fill="#b47a44"/>
<rect x="66.8" y="71.9" width="1.4" height="0.6" fill="#c8935a"/>
<rect x="79.3" y="70.6" width="1.5" height="0.7" fill="#a86c3a"/>
<rect x="37.8" y="64.3" width="1.9" height="0.8" fill="#8a5630"/>
<rect x="117.2" y="73.0" width="1.7" height="0.7" fill="#d8a468"/>
<rect x="104.0" y="74.8" width="1.0" height="1.1" fill="#c8935a"/>
<rect x="68.1" y="69.0" width="1.8" height="1.3" fill="#d8a468"/>
<rect x="110.1" y="71.8" width="1.1" height="0.7" fill="#3a2416"/>
<rect x="46.2" y="65.2" width="1.0" height="1.0" fill="#a86c3a"/>
<rect x="61.0" y="67.6" width="1.4" height="0.9" fill="#d8a468"/>
<rect x="111.3" y="73.6" width="1.3" height="0.7" fill="#2a1a10"/>
<rect x="89.3" y="70.4" width="1.9" height="0.9" fill="#2a1a10"/>
<rect x="106.8" y="74.6" width="1.1" height="1.1" fill="#a86c3a"/>
<rect x="3.2" y="74.4" width="1.2" height="0.7" fill="#2a1a10"/>
<rect x="6.3" y="73.5" width="1.5" height="0.6" fill="#2a1a10"/>
<rect x="74.7" y="67.5" width="1.3" height="1.1" fill="#3a2416"/>
</g>
<path d="M32.8 64.4L31.7 57.3L29.8 52.5L27.9 48.7" fill="none" stroke="#1c1814" stroke-width="1.3" stroke-linecap="round" stroke-linejoin="round"/>
<path d="M29.8 52.5L24.0 47.1L18.3 42.5L12.5 38.1L8.7 36.2" fill="none" stroke="#1c1814" stroke-width="0.8" stroke-linecap="round" stroke-linejoin="round"/>
<path d="M27.9 48.7L25.9 42.9L27.5 37.2L28.2 33.0" fill="none" stroke="#1c1814" stroke-width="0.8" stroke-linecap="round" stroke-linejoin="round"/>
<path d="M29.8 52.5L34.6 47.1L38.4 42.0L39.7 39.5" fill="none" stroke="#1c1814" stroke-width="0.8" stroke-linecap="round" stroke-linejoin="round"/>
<path d="M24.0 47.1L20.2 48.3L16.4 47.1" fill="none" stroke="#1c1814" stroke-width="0.5" stroke-linecap="round" stroke-linejoin="round"/>
<path d="M18.3 42.5L17.3 39.1L14.8 36.8" fill="none" stroke="#1c1814" stroke-width="0.5" stroke-linecap="round" stroke-linejoin="round"/>
<path d="M25.9 42.9L22.5 39.5L21.1 36.2" fill="none" stroke="#1c1814" stroke-width="0.5" stroke-linecap="round" stroke-linejoin="round"/>
<path d="M27.5 37.2L30.2 34.9L30.9 32.6" fill="none" stroke="#1c1814" stroke-width="0.5" stroke-linecap="round" stroke-linejoin="round"/>
<path d="M34.6 47.1L37.8 47.1L40.1 45.6" fill="none" stroke="#1c1814" stroke-width="0.5" stroke-linecap="round" stroke-linejoin="round"/>
<path d="M38.4 42.0L36.5 39.1L36.7 36.8" fill="none" stroke="#1c1814" stroke-width="0.5" stroke-linecap="round" stroke-linejoin="round"/>
<path d="M12.5 38.1L11.0 40.0L9.1 40.6" fill="none" stroke="#1c1814" stroke-width="0.4" stroke-linecap="round" stroke-linejoin="round"/>
<path d="M31.7 57.3L34.8 54.4L36.3 51.5" fill="none" stroke="#1c1814" stroke-width="0.5" stroke-linecap="round" stroke-linejoin="round"/>
<path d="M21.1 44.8L19.8 42.9" fill="none" stroke="#1c1814" stroke-width="0.4" stroke-linecap="round" stroke-linejoin="round"/>
<rect x="57.0" y="25.4" width=".9" height=".5" fill="#2a2618"/>
<rect x="58.7" y="26.3" width=".9" height=".5" fill="#2a2618"/>
<rect x="60.9" y="26.3" width=".9" height=".5" fill="#2a2618"/>
<rect x="62.9" y="27.0" width=".9" height=".5" fill="#2a2618"/>
<rect x="64.8" y="26.9" width=".9" height=".5" fill="#2a2618"/>
<rect x="66.7" y="27.0" width=".9" height=".5" fill="#2a2618"/>
<rect x="68.8" y="27.7" width=".9" height=".5" fill="#2a2618"/>
<rect x="70.8" y="28.0" width=".9" height=".5" fill="#2a2618"/>
<rect x="72.7" y="28.6" width=".9" height=".5" fill="#2a2618"/>
<rect x="74.5" y="29.1" width=".9" height=".5" fill="#2a2618"/>
<rect x="76.4" y="29.4" width=".9" height=".5" fill="#2a2618"/>
<rect x="78.4" y="29.7" width=".9" height=".5" fill="#2a2618"/>
<rect x="80.5" y="29.5" width=".9" height=".5" fill="#2a2618"/>
<rect x="82.7" y="30.4" width=".9" height=".5" fill="#2a2618"/>
<rect x="84.9" y="30.8" width=".9" height=".5" fill="#2a2618"/>
<rect x="86.9" y="30.5" width=".9" height=".5" fill="#2a2618"/>
<rect x="68.9" y="65.4" width=".8" height=".4" fill="#3a3018" opacity=".7"/>
<rect x="71.0" y="65.3" width=".8" height=".4" fill="#3a3018" opacity=".7"/>
<rect x="72.7" y="65.2" width=".8" height=".4" fill="#3a3018" opacity=".7"/>
<rect x="74.6" y="64.9" width=".8" height=".4" fill="#3a3018" opacity=".7"/>
<rect x="76.2" y="64.6" width=".8" height=".4" fill="#3a3018" opacity=".7"/>
<rect x="77.3" y="64.5" width=".8" height=".4" fill="#3a3018" opacity=".7"/>
<rect x="79.1" y="64.0" width=".8" height=".4" fill="#3a3018" opacity=".7"/>
<rect x="81.4" y="63.8" width=".8" height=".4" fill="#3a3018" opacity=".7"/>
<rect width="134.0" height="74.8" fill="none" stroke="#2a2a20" stroke-opacity=".35" stroke-width="1.2"/>
</g></svg>
<svg class="th" viewBox="0 0 134.2 56.7" preserveAspectRatio="none" width="134.8" height="56.9" style="left:146px;top:339.1px">
<defs><linearGradient id="ybg" x1="0" x2="0" y1="0" y2="1"><stop offset="0" stop-color="#03062a"/><stop offset="1" stop-color="#091250"/></linearGradient><radialGradient id="yr" cx=".25" cy=".62" r=".9"><stop offset="0" stop-color="#0a0e54"/><stop offset="1" stop-color="#060634"/></radialGradient><linearGradient id="ycy" x1="0" x2="0" y1="0" y2="1"><stop offset="0" stop-color="#0f2470"/><stop offset=".6" stop-color="#0c1660"/><stop offset="1" stop-color="#0c1660"/></linearGradient><clipPath id="yc"><rect width="134.2" height="56.7"/></clipPath></defs>
<g clip-path="url(#yc)">
<rect width="134.2" height="56.7" fill="url(#ybg)"/>
<rect x="84" y="0" width="50.2" height="56.7" fill="url(#yr)"/>
<polygon points="0.0,-0.1 58.6,-0.1 45.6,12.3 33.3,-0.1 27.6,-0.1 27.6,26.8 20.3,26.8 12.4,31.8 0.0,18.1" fill="#01031c" fill-opacity="0.55"/>
<polygon points="0.0,18.1 13.1,31.8 11.3,36.6 20.3,36.6 20.3,55.6 0.0,55.6" fill="#0f2470" fill-opacity="0.3"/>
<polygon points="11.3,36.6 20.3,26.8 20.3,36.6" fill="#0f2470"/>
<polygon points="20.3,26.5 24.0,20.3 24.0,25.3" fill="#0f2470"/>
<polygon points="24.0,23.6 27.8,28.2 24.0,28.2" fill="#163890" fill-opacity="0.9"/>
<polygon points="20.3,28.2 28.3,28.2 28.3,55.6 20.3,55.6" fill="#060c40" fill-opacity="0.9"/>
<polygon points="27.6,-0.1 33.3,-0.1 44.9,11.6 44.9,19.6 27.6,44.1" fill="#0f2470" fill-opacity="0.45"/>
<polygon points="28.3,44.1 36.2,32.5 36.2,55.6 28.3,55.6" fill="#0f2470" fill-opacity="0.5"/>
<polygon points="36.2,21.7 44.9,19.6 44.9,54.2 36.2,54.2" fill="#0f2470"/>
<polygon points="44.9,15.2 49.2,15.2 49.2,19.6 44.9,19.6" fill="#0f2470"/>
<polygon points="44.9,19.6 53.5,19.6 53.5,55.6 44.9,55.6" fill="#060c40" fill-opacity="0.55"/>
<polygon points="36.2,54.2 44.9,54.2 44.9,55.6 36.2,55.6" fill="#0c1660" fill-opacity="0.8"/>
<polygon points="53.4,11.6 62.1,20.3 62.1,55.6 53.4,55.6" fill="url(#ycy)"/>
<polygon points="62.1,20.3 79.4,3.7 79.4,19.6 62.1,36.1" fill="#163890"/>
<polygon points="62.1,20.3 70.0,28.2 62.1,36.1" fill="#0c1660"/>
<polygon points="62.1,36.1 79.4,19.6 88.1,19.6 88.1,55.6 62.1,55.6" fill="url(#ycy)"/>
<polygon points="70.0,28.2 79.4,19.6 88.1,19.6 88.1,41.2 80.8,41.2" fill="#060c40" fill-opacity="0.8"/>
<polygon points="79.4,3.7 88.1,3.7 88.1,19.6 79.4,19.6" fill="#0f2470" fill-opacity="0.35"/>
<polygon points="80.8,45.5 88.1,45.5 88.1,55.6 80.8,55.6" fill="#0f2470" fill-opacity="0.7"/>
<polygon points="88.6,0.0 96.0,0.0 96.0,19.2 88.6,26.7" fill="#2a2a60" fill-opacity="0.3"/>
<polygon points="96.0,0.0 114.7,0.0 88.6,26.7 88.6,19.2 96.0,11.8" fill="#2a2a60" fill-opacity="0.2"/>
<polygon points="78.9,44.6 88.6,26.7 93.1,25.2 93.1,56.5 78.9,56.5" fill="#0f2470" fill-opacity="0.75"/>
<polygon points="79.4,34.1 88.6,26.7 88.6,44.6 79.4,44.6" fill="#060c40" fill-opacity="0.5"/>
<polygon points="93.1,25.2 104.2,36.4 104.2,56.5 93.1,56.5" fill="url(#ycy)"/>
<polygon points="104.2,36.4 123.6,56.5 104.2,56.5" fill="#0c1660"/>
</g></svg>
<svg class="th" viewBox="0 0 134.2 56.7" preserveAspectRatio="none" width="134.2" height="56.6" style="left:289px;top:339.2px">
<defs><linearGradient id="zbg" x1="0" x2="0" y1="0" y2="1"><stop offset="0" stop-color="#124cc2"/><stop offset="1" stop-color="#1a5ed8"/></linearGradient><radialGradient id="zr" cx=".25" cy=".62" r=".9"><stop offset="0" stop-color="#1a5cd6"/><stop offset="1" stop-color="#0f46ba"/></radialGradient><linearGradient id="zcy" x1="0" x2="0" y1="0" y2="1"><stop offset="0" stop-color="#3480f2"/><stop offset=".6" stop-color="#3a84f4"/><stop offset="1" stop-color="#3a84f4"/></linearGradient><clipPath id="zc"><rect width="134.2" height="56.7"/></clipPath></defs>
<g clip-path="url(#zc)">
<rect width="134.2" height="56.7" fill="url(#zbg)"/>
<rect x="84" y="0" width="50.2" height="56.7" fill="url(#zr)"/>
<polygon points="0.0,-0.1 58.6,-0.1 45.6,12.3 33.3,-0.1 27.6,-0.1 27.6,26.8 20.3,26.8 12.4,31.8 0.0,18.1" fill="#0e44b8" fill-opacity="0.55"/>
<polygon points="0.0,18.1 13.1,31.8 11.3,36.6 20.3,36.6 20.3,55.6 0.0,55.6" fill="#3480f2" fill-opacity="0.35"/>
<polygon points="11.3,36.6 20.3,26.8 20.3,36.6" fill="#3480f2"/>
<polygon points="20.3,26.5 24.0,20.3 24.0,25.3" fill="#3480f2"/>
<polygon points="24.0,23.6 27.8,28.2 24.0,28.2" fill="#5cb4ff" fill-opacity="0.9"/>
<polygon points="20.3,28.2 28.3,28.2 28.3,55.6 20.3,55.6" fill="#1452c8" fill-opacity="0.9"/>
<polygon points="27.6,-0.1 33.3,-0.1 44.9,11.6 44.9,19.6 27.6,44.1" fill="#3480f2" fill-opacity="0.45"/>
<polygon points="28.3,44.1 36.2,32.5 36.2,55.6 28.3,55.6" fill="#3480f2" fill-opacity="0.5"/>
<polygon points="36.2,21.7 44.9,19.6 44.9,54.2 36.2,54.2" fill="#3480f2"/>
<polygon points="44.9,15.2 49.2,15.2 49.2,19.6 44.9,19.6" fill="#3480f2"/>
<polygon points="44.9,19.6 53.5,19.6 53.5,55.6 44.9,55.6" fill="#1452c8" fill-opacity="0.55"/>
<polygon points="36.2,54.2 44.9,54.2 44.9,55.6 36.2,55.6" fill="#3a84f4" fill-opacity="0.8"/>
<polygon points="53.4,11.6 62.1,20.3 62.1,55.6 53.4,55.6" fill="url(#zcy)"/>
<polygon points="62.1,20.3 79.4,3.7 79.4,19.6 62.1,36.1" fill="#5cb4ff"/>
<polygon points="62.1,20.3 70.0,28.2 62.1,36.1" fill="#3a84f4"/>
<polygon points="62.1,36.1 79.4,19.6 88.1,19.6 88.1,55.6 62.1,55.6" fill="url(#zcy)"/>
<polygon points="70.0,28.2 79.4,19.6 88.1,19.6 88.1,41.2 80.8,41.2" fill="#1452c8" fill-opacity="0.8"/>
<polygon points="79.4,3.7 88.1,3.7 88.1,19.6 79.4,19.6" fill="#3480f2" fill-opacity="0.35"/>
<polygon points="80.8,45.5 88.1,45.5 88.1,55.6 80.8,55.6" fill="#3480f2" fill-opacity="0.7"/>
<polygon points="88.6,0.0 96.0,0.0 96.0,19.2 88.6,26.7" fill="#6a98e8" fill-opacity="0.3"/>
<polygon points="96.0,0.0 114.7,0.0 88.6,26.7 88.6,19.2 96.0,11.8" fill="#6a98e8" fill-opacity="0.2"/>
<polygon points="78.9,44.6 88.6,26.7 93.1,25.2 93.1,56.5 78.9,56.5" fill="#3480f2" fill-opacity="0.75"/>
<polygon points="79.4,34.1 88.6,26.7 88.6,44.6 79.4,44.6" fill="#1452c8" fill-opacity="0.5"/>
<polygon points="93.1,25.2 104.2,36.4 104.2,56.5 93.1,56.5" fill="url(#zcy)"/>
<polygon points="104.2,36.4 123.6,56.5 104.2,56.5" fill="#3a84f4"/>
</g></svg>
<svg class="th" viewBox="0 0 138 58.2" preserveAspectRatio="none" width="134.9" height="56.6" style="left:431.1px;top:339.2px">
<defs>
<linearGradient id="nA" x1="0" x2="1" y1="0" y2="0"><stop offset="0" stop-color="#ffba62"/><stop offset=".45" stop-color="#ffa59a"/><stop offset=".8" stop-color="#ff6fae"/><stop offset="1" stop-color="#f763b4"/></linearGradient>
<linearGradient id="nB" x1="0" x2="1" y1="0" y2="0"><stop offset="0" stop-color="#ff9556"/><stop offset=".4" stop-color="#ff7682"/><stop offset=".75" stop-color="#ff6896"/><stop offset="1" stop-color="#d95fb4"/></linearGradient>
<linearGradient id="nC" x1="0" x2="1" y1="1" y2="0"><stop offset="0" stop-color="#ff62bd"/><stop offset=".55" stop-color="#f45fc4"/><stop offset="1" stop-color="#9a3fd2"/></linearGradient>
<linearGradient id="nD" x1="0" x2="0" y1="0" y2="1"><stop offset="0" stop-color="#ff8a8c"/><stop offset="1" stop-color="#ff9a62"/></linearGradient>
</defs>
<rect width="138" height="58.2" fill="#ff9c8b"/>
<path d="M0 0H47V17Q22 15 0 11.6Z" fill="#19ae97"/>
<path d="M137.9 10.8L132.2 11.8L119.0 25.6L124.1 35.2L128.2 48.4L134.3 58.2L137.9 58.2Z" fill="url(#nD)"/>
<rect x="132.2" y="0" width="6" height="12" fill="#0c2a7e"/>
<path d="M93.0 58.2C97.7 48.4 105.8 37.2 119.6 25.2C123.7 32.1 126.1 50.5 134.3 58.2Z" fill="#0c2a7e"/>
<path d="M19.3 58.2C19.3 42.3 26.4 28.1 38.3 23.0L52.9 32.1L52.9 58.2Z" fill="#fd3273"/>
<path d="M37.4 22.4C52.9 14.9 69.2 19.9 81.4 23.6C93.6 27.1 101.7 22.0 105.8 9.8L113.9 1.6L122.1 22.0C111.9 34.2 99.7 44.4 93.0 58.2L52.9 58.2C46.8 44.4 39.1 32.1 37.4 22.4Z" fill="url(#nB)"/>
<path d="M45.8 0.0C39.7 6.7 35.6 13.8 37.4 22.4C52.9 14.9 69.2 19.9 81.4 23.6C93.6 27.1 100.7 22.0 104.2 13.8C106.8 5.7 108.9 2.6 111.9 0.0Z" fill="url(#nA)"/>
<path d="M111.9 0.0C105.8 5.7 106.8 13.8 113.9 19.9C118.0 24.0 122.1 24.0 127.2 17.9C132.2 12.8 134.3 5.7 132.9 0.0Z" fill="url(#nC)"/>
<path d="M98.7 58.2C100.7 52.5 105.8 50.1 111.9 50.9C118.0 51.7 123.1 54.9 126.6 58.2Z" fill="#7d6272"/>
</svg>
<div class="heart" style="left:437.4px;top:358.5px"><svg width="10" height="9" viewBox="0 0 10 9"><path d="M5 8.6L1 4.7A2.4 2.4 0 0 1 5 1.6A2.4 2.4 0 0 1 9 4.7Z" fill="#fff"/></svg></div>
  </div>
  <div id="paneL">
<svg class="th" viewBox="0 0 138 58.2" preserveAspectRatio="none" width="137.7" height="58.2" style="left:73.6px;top:41.599999999999994px">
<defs>
<filter id="gf1" x="-30%" y="-30%" width="160%" height="160%"><feGaussianBlur stdDeviation="5"/></filter>
<filter id="gf4" x="-30%" y="-30%" width="160%" height="160%"><feGaussianBlur stdDeviation="3.5"/></filter>
<filter id="gf2" x="-30%" y="-30%" width="160%" height="160%"><feGaussianBlur stdDeviation="2.2"/></filter>
<filter id="gf3" x="-30%" y="-30%" width="160%" height="160%"><feGaussianBlur stdDeviation="1"/></filter>
<linearGradient id="gbase" gradientUnits="userSpaceOnUse" x1="4" y1="0" x2="142" y2="-28"><stop offset="0" stop-color="#ff9852"/><stop offset=".19" stop-color="#ff7458"/><stop offset=".32" stop-color="#fa42b4"/><stop offset=".46" stop-color="#b840d2"/><stop offset=".62" stop-color="#e84aa8"/><stop offset=".8" stop-color="#ff4c78"/><stop offset="1" stop-color="#ff4a5c"/></linearGradient>
<linearGradient id="gup" x1="0" x2="1" y1="0" y2="0"><stop offset="0" stop-color="#e255c4"/><stop offset=".3" stop-color="#c352d3"/><stop offset=".6" stop-color="#ee6ab2"/><stop offset="1" stop-color="#ff809c"/></linearGradient>
<clipPath id="gc"><rect width="138" height="58.2"/></clipPath>
</defs>
<g clip-path="url(#gc)">
<rect width="138" height="58.2" fill="url(#gbase)"/>
<ellipse cx="4" cy="56" rx="16" ry="20" fill="#ffbc62" filter="url(#gf1)"/>
<ellipse cx="6" cy="0" rx="22" ry="9" fill="#d2624e" filter="url(#gf1)"/>
<ellipse cx="30" cy="58" rx="12" ry="10" fill="#ff5a58" filter="url(#gf1)"/>
<ellipse cx="47" cy="46" rx="9" ry="12" fill="#ff42bc" opacity=".8" filter="url(#gf1)"/>
<ellipse cx="90" cy="44" rx="14" ry="10" fill="#f64592" opacity=".7" filter="url(#gf1)"/>
<ellipse cx="128" cy="6" rx="18" ry="16" fill="#ff6a6c" filter="url(#gf1)"/>
<path d="M104 62L112 46L140 24L142 62Z" fill="#c40e50" filter="url(#gf4)"/>
<ellipse cx="113" cy="58" rx="7" ry="7" fill="#5a2c9a" filter="url(#gf2)"/>
<path d="M31 -2C29 8 30 22 44 17.5C60 13 76 21 91 24.5C103 27 107 14 111 -2Z" fill="url(#gup)" opacity=".9" filter="url(#gf3)"/>
<path d="M2 60C8 30 28 18 52 16" fill="none" stroke="#ff7a70" stroke-opacity=".35" stroke-width="3" filter="url(#gf2)"/>
<ellipse cx="119" cy="59" rx="7" ry="4" fill="#63a274" filter="url(#gf3)"/>
</g>
</svg>
<div class="dots" style="left:193.3px;top:121.6px"><i style="left:4.3px"></i><i style="left:7.6px"></i><i style="left:10.9px"></i></div>
<div class="mlab" style="color:#fff;left:0;transform:scaleX(.92)">Monitor 0 (27GL850)</div>
  </div>
  <div id="paneR">
<svg class="th" viewBox="0 0 138 58.2" preserveAspectRatio="none" width="138" height="58.2" style="left:73.10000000000002px;top:41.599999999999994px">
<defs>
<linearGradient id="mA" x1="0" x2="1" y1="0" y2="0"><stop offset="0" stop-color="#ffba62"/><stop offset=".45" stop-color="#ffa59a"/><stop offset=".8" stop-color="#ff6fae"/><stop offset="1" stop-color="#f763b4"/></linearGradient>
<linearGradient id="mB" x1="0" x2="1" y1="0" y2="0"><stop offset="0" stop-color="#ff9556"/><stop offset=".4" stop-color="#ff7682"/><stop offset=".75" stop-color="#ff6896"/><stop offset="1" stop-color="#d95fb4"/></linearGradient>
<linearGradient id="mC" x1="0" x2="1" y1="1" y2="0"><stop offset="0" stop-color="#ff62bd"/><stop offset=".55" stop-color="#f45fc4"/><stop offset="1" stop-color="#9a3fd2"/></linearGradient>
<linearGradient id="mD" x1="0" x2="0" y1="0" y2="1"><stop offset="0" stop-color="#ff8a8c"/><stop offset="1" stop-color="#ff9a62"/></linearGradient>
</defs>
<rect width="138" height="58.2" fill="#ff9c8b"/>
<path d="M0 0H47V17Q22 15 0 11.6Z" fill="#19ae97"/>
<path d="M137.9 10.8L132.2 11.8L119.0 25.6L124.1 35.2L128.2 48.4L134.3 58.2L137.9 58.2Z" fill="url(#mD)"/>
<rect x="132.2" y="0" width="6" height="12" fill="#0c2a7e"/>
<path d="M93.0 58.2C97.7 48.4 105.8 37.2 119.6 25.2C123.7 32.1 126.1 50.5 134.3 58.2Z" fill="#0c2a7e"/>
<path d="M19.3 58.2C19.3 42.3 26.4 28.1 38.3 23.0L52.9 32.1L52.9 58.2Z" fill="#fd3273"/>
<path d="M37.4 22.4C52.9 14.9 69.2 19.9 81.4 23.6C93.6 27.1 101.7 22.0 105.8 9.8L113.9 1.6L122.1 22.0C111.9 34.2 99.7 44.4 93.0 58.2L52.9 58.2C46.8 44.4 39.1 32.1 37.4 22.4Z" fill="url(#mB)"/>
<path d="M45.8 0.0C39.7 6.7 35.6 13.8 37.4 22.4C52.9 14.9 69.2 19.9 81.4 23.6C93.6 27.1 100.7 22.0 104.2 13.8C106.8 5.7 108.9 2.6 111.9 0.0Z" fill="url(#mA)"/>
<path d="M111.9 0.0C105.8 5.7 106.8 13.8 113.9 19.9C118.0 24.0 122.1 24.0 127.2 17.9C132.2 12.8 134.3 5.7 132.9 0.0Z" fill="url(#mC)"/>
<path d="M98.7 58.2C100.7 52.5 105.8 50.1 111.9 50.9C118.0 51.7 123.1 54.9 126.6 58.2Z" fill="#7d6272"/>
</svg>
<div class="dots" style="left:192.9px;top:121.6px"><i style="left:4.3px"></i><i style="left:7.6px"></i><i style="left:10.9px"></i></div>
<div class="mlab" style="left:0;transform:scaleX(.873)">Monitor 1 (ASUS PB277)</div>
  </div>
  <div id="hdr">
    <div class="hb" style="left:3.2px;top:3.2px;width:18.5px;height:17.2px;background:#d6d2ce;border-color:#cbc6c1">
      <svg width="9" height="8" viewBox="0 0 9 8" style="position:absolute;left:3.9px;top:3.9px"><path d="M0 1Q0 0 1 0H3.3L4.3 1H8Q9 1 9 2V3H0Z" fill="#3d4143"/><path d="M0 2.4H9V6.7Q9 7.7 8 7.7H1Q0 7.7 0 6.7Z" fill="#25292b"/></svg>
    </div>
    <div class="tab" style="left:213px;width:72px;background:#d4d0cc;box-shadow:inset 1px 0 #cbc6c1,inset -1px 0 #cbc6c1">
      <svg width="9" height="7.4" viewBox="0 0 9 7.4" style="position:absolute;left:7px;top:8.4px"><rect x=".65" y=".65" width="7.7" height="6.1" rx=".5" fill="none" stroke="#1f2325" stroke-width="1.3"/><path d="M1.6 5.6L3.2 3.5L4.4 4.7L5.3 4L7.3 5.6Z" fill="#1f2325"/><rect x="2" y="1.9" width="1.3" height="1.1" fill="#1f2325"/></svg>
      <span style="position:absolute;left:20px;top:0;font-weight:bold;color:#14181a">Wallpapers</span>
    </div>
    <div class="tab" style="left:285px;width:72px">
      <svg width="8" height="7" viewBox="0 0 8 7" style="position:absolute;left:10px;top:8.6px"><path d="M4 7L.6 3.6A2 2 0 0 1 4 1.2A2 2 0 0 1 7.4 3.6Z" fill="#2e3436"/></svg>
      <span style="position:absolute;left:23.5px;top:0">Favorites</span>
    </div>
    <div class="hb" style="left:434px;top:3.5px;width:18.5px;height:17.6px">
      <svg width="10" height="6" viewBox="0 0 10 6" style="position:absolute;left:3.6px;top:4.8px"><rect x="0" y="0" width="1.7" height="6" fill="#858889"/><rect x="3.5" y=".8" width="4.9" height="4.4" fill="none" stroke="#858889" stroke-width="1.6"/><path d="M4.6 1.4L7.2 3L4.6 4.6Z" fill="#858889"/></svg>
    </div>
    <div class="hb" style="left:456px;top:3.2px;width:19.2px;height:18.4px;background:#3584e4;border-color:#2a76d8;box-shadow:0 0 0 1px #ecdccb">
      <svg width="8" height="6" viewBox="0 0 8 6" style="position:absolute;left:5px;top:5.6px"><path d="M1 3L2.9 4.7L6.4 1" fill="none" stroke="#fff" stroke-width="1.8"/></svg>
    </div>
    <div class="hb" style="left:478.6px;top:3.5px;width:18.9px;height:17.6px">
      <svg width="6" height="6" viewBox="0 0 6 6" style="position:absolute;left:5.9px;top:4.8px"><path d="M0 .7H5.4M0 3H5.4M0 5.3H5.4" stroke="#25292b" stroke-width="1.35"/></svg>
    </div>
    <svg width="60" height="8" viewBox="0 0 60 8" style="position:absolute;left:510px;top:9px"><rect x="1.8" y="3.9" width="4.7" height="1.7" fill="#2e3436"/><rect x="23.8" y="1.5" width="3.8" height="3.8" fill="none" stroke="#2e3436" stroke-width="1.5"/><path d="M45.3 1.2L49.5 5.4M49.5 1.2L45.3 5.4" stroke="#2e3436" stroke-width="1.5"/></svg>
  </div>
</div>
<div id="pop">
  <svg width="14" height="7" viewBox="0 0 14 7" style="position:absolute;left:53.5px;top:-6px"><path d="M0 7L7 0L14 7Z" fill="#fff"/></svg>
  <div id="list">
      <div class="row" style="top:-0.6px"><span>Dark_Crystal</span><div class="sw"><b></b></div></div>
      <div class="row" style="top:32.8px"><span>Flowers</span><div class="sw"><b></b></div></div>
      <div class="row" style="top:66.2px"><span>GNOME</span><div class="sw"><b></b></div></div>
      <div class="row" style="top:99.5px"><span>GNOME_40</span><div class="sw on"><b></b></div></div>
      <div class="row" style="top:133.0px"><span>Misc</span><div class="sw"><b></b></div></div>
      </div>
  <div style="position:absolute;left:8px;top:155px;width:105px;height:1px;background:#d5d0cc"></div>
  <div class="pb" style="left:11.8px;width:19.6px;border-radius:3px 0 0 3px">+</div>
  <div class="pb" style="left:31.4px;border-radius:0 3px 3px 0;border-left:0;color:#929595;width:19px">&minus;</div>
  <div class="pb" style="left:71.2px;width:19.4px;border-radius:3px 0 0 3px"><svg width="7" height="6" viewBox="0 0 8 6" style="position:absolute;left:5.6px;top:5.4px"><path d="M1 3L2.9 4.8L6.8 .9" fill="none" stroke="#1f2325" stroke-width="2"/></svg></div>
  <div class="pb" style="left:90.6px;border-radius:0 3px 3px 0;border-left:0"><svg width="6" height="6" viewBox="0 0 6 6" style="position:absolute;left:6.4px;top:5.6px"><path d="M.8 .8L5 5M5 .8L.8 5" stroke="#1f2325" stroke-width="1.6"/></svg></div>
</div>
</body>
</html>
